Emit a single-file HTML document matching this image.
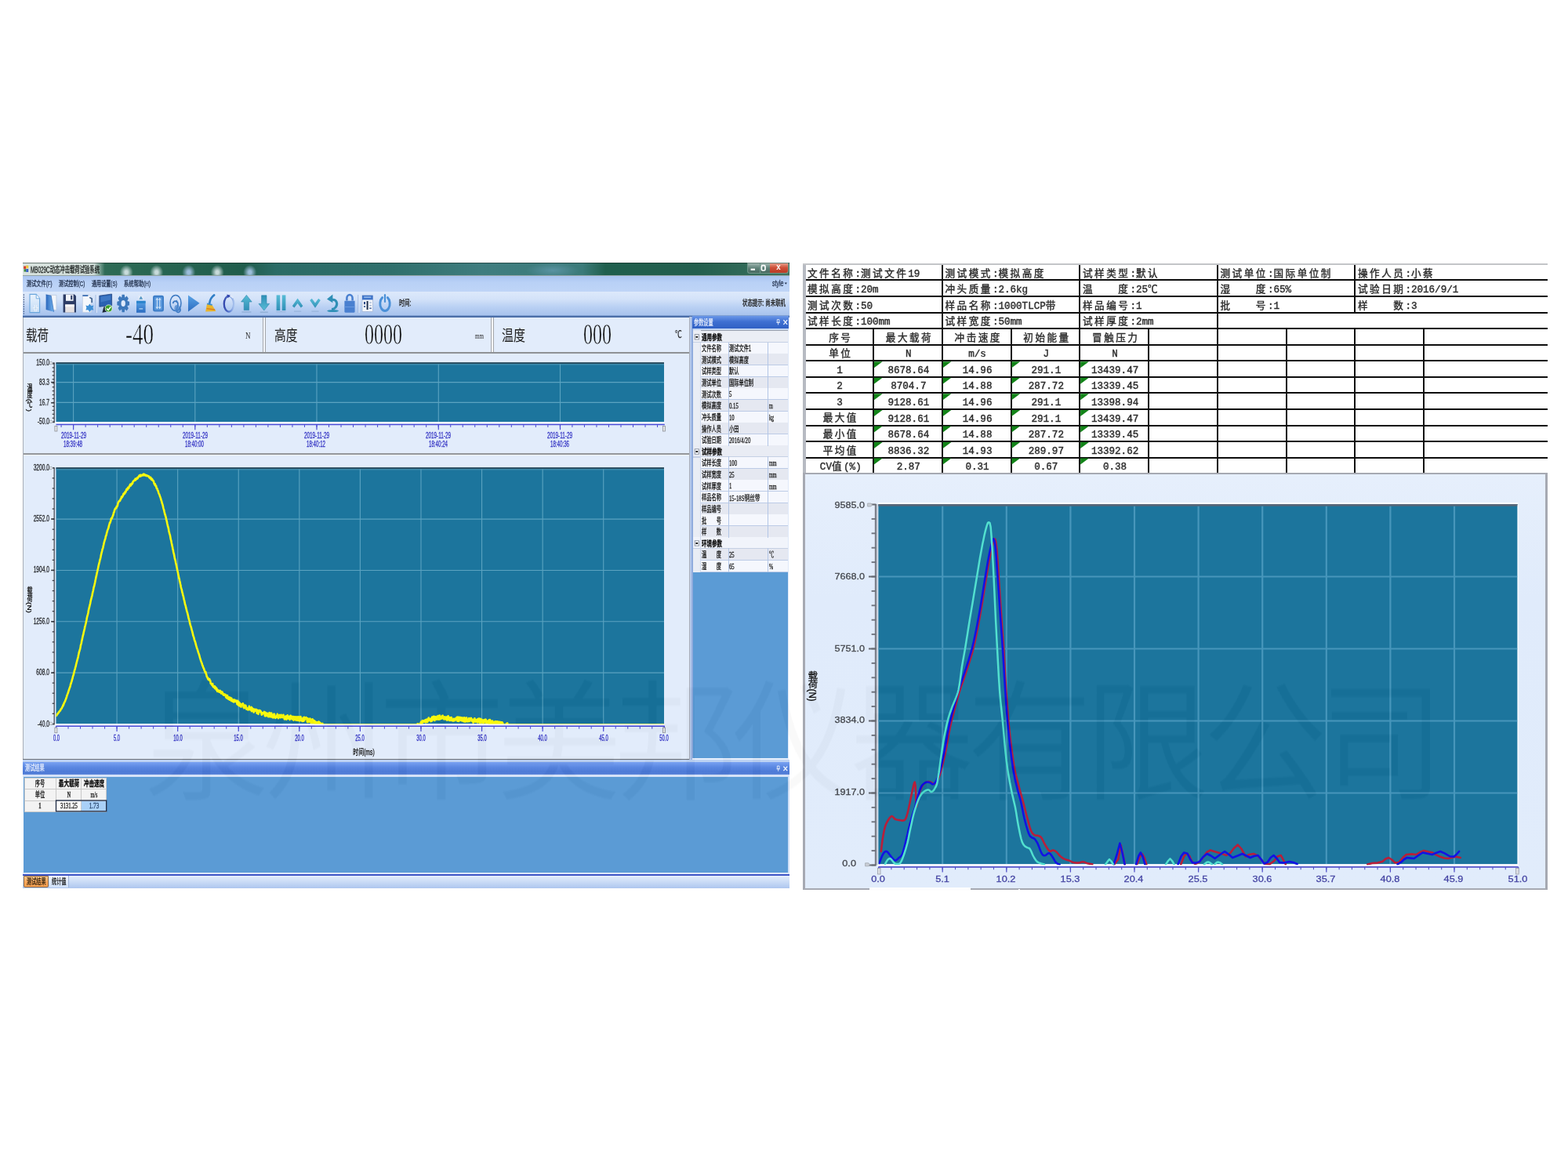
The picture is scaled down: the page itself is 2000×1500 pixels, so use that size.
<!DOCTYPE html>
<html lang="zh-CN">
<head>
<meta charset="utf-8">
<title>MB029C动态冲击载荷试验系统</title>
<style>
html,body{margin:0;padding:0;background:#fff;}
#stage{position:relative;width:2000px;height:1500px;overflow:hidden;background:#fff;}
#bg div{position:absolute;}
#gfx{position:absolute;left:0;top:0;}
.t{position:absolute;white-space:nowrap;line-height:1;}
#shots{position:absolute;left:0;top:0;width:2000px;height:1500px;filter:blur(0.6px);}
#wm{position:absolute;left:184.4px;top:865.2px;width:1800px;height:170px;line-height:170px;font-family:"Liberation Sans","Noto Sans CJK SC",sans-serif;font-weight:350;font-size:166px;transform:scaleX(.957);transform-origin:0 50%;color:rgb(6,6,6);mix-blend-mode:difference;filter:blur(.8px);white-space:nowrap;letter-spacing:-9.3px;text-align:left;pointer-events:none;}
</style>
</head>
<body>
<div id="stage">
<div id="shots">
<div id="bg">
<div style="left:29.2px;top:334.9px;width:977.8px;height:16.5px;background:linear-gradient(90deg,rgba(228,235,232,.93) 0,rgba(224,232,229,.9) 9.3%,rgba(220,230,226,0) 10.7%),radial-gradient(ellipse 8.5px 9.5px at 132.2px 12.4px,rgba(222,235,238,.88) 0,rgba(222,235,238,.88) 22%,rgba(222,235,238,0) 100%),radial-gradient(ellipse 8.5px 9.5px at 170.7px 12.4px,rgba(222,235,238,.88) 0,rgba(222,235,238,.88) 22%,rgba(222,235,238,0) 100%),radial-gradient(ellipse 8.5px 9.5px at 211.7px 12.4px,rgba(172,202,238,.88) 0,rgba(172,202,238,.88) 22%,rgba(172,202,238,0) 100%),radial-gradient(ellipse 8.5px 9.5px at 248.2px 12.4px,rgba(222,235,238,.88) 0,rgba(222,235,238,.88) 22%,rgba(222,235,238,0) 100%),radial-gradient(ellipse 8.5px 9.5px at 289.7px 12.4px,rgba(172,202,238,.88) 0,rgba(172,202,238,.88) 22%,rgba(172,202,238,0) 100%),radial-gradient(ellipse 34px 10px at 676px 10px,rgba(120,170,200,.5),rgba(120,170,200,0)),linear-gradient(90deg,#3f7562 0,#2c6a55 12%,#1f5c4b 29%,#2a6b66 33%,#2f6f6c 48%,#3f7d7f 60%,#3b7b7a 73%,#1f5f4d 76%,#235f4e 88%,#3c7260 100%);"></div>
<div style="left:29.2px;top:334.9px;width:977.8px;height:1.2px;background:rgba(20,40,35,.55);"></div>
<div style="left:952.6px;top:335.2px;width:53px;height:14px;background:rgba(190,210,205,.42);border-radius:0 0 3.5px 3.5px;"></div>
<div style="left:953.6px;top:335.6px;width:15.6px;height:12.6px;background:linear-gradient(#9cb3ad,#5e8178 50%,#47695f);border-radius:0 0 0 3px;"></div>
<div style="left:969.8px;top:335.6px;width:12px;height:12.6px;background:linear-gradient(#9cb3ad,#5e8178 50%,#47695f);"></div>
<div style="left:982.4px;top:335.6px;width:22.4px;height:12.6px;background:linear-gradient(#e59a86,#cf5139 45%,#b93a25);border-radius:0 0 3px 0;"></div>
<div style="left:29.2px;top:351.6px;width:977.8px;height:21px;background:linear-gradient(#a9c4f1,#b9d1f6 40%,#bfd5f7);"></div>
<div style="left:29.2px;top:351.2px;width:977.8px;height:1px;background:rgba(60,90,90,.55);"></div>
<div style="left:29.2px;top:372.4px;width:977.8px;height:31.4px;background:linear-gradient(#dde9fb 0,#d3e2f9 30%,#b9d0f3 62%,#a4c0ec 100%);"></div>
<div style="left:29.2px;top:403px;width:977.8px;height:2px;background:#4c6fa8;"></div>
<div style="left:29.2px;top:402.2px;width:977.8px;height:1px;background:#7f9fd2;"></div>
<div style="left:29.2px;top:405px;width:850.5px;height:45px;background:#e2ecfb;"></div>
<div style="left:334.9px;top:405px;width:1.2px;height:45px;background:#a4a6aa;"></div>
<div style="left:338px;top:405px;width:1.2px;height:45px;background:#a4a6aa;"></div>
<div style="left:625.6px;top:405px;width:1.2px;height:45px;background:#a4a6aa;"></div>
<div style="left:628.6px;top:405px;width:1.2px;height:45px;background:#a4a6aa;"></div>
<div style="left:336.1px;top:405px;width:2px;height:45px;background:#f4f7fc;"></div>
<div style="left:626.8px;top:405px;width:2px;height:45px;background:#f4f7fc;"></div>
<div style="left:29.2px;top:449.2px;width:850.5px;height:1.8px;background:#8f9296;"></div>
<div style="left:29.2px;top:451px;width:850.5px;height:127px;background:#e2ecfb;"></div>
<div style="left:29.2px;top:577.6px;width:850.5px;height:2.2px;background:#94979b;"></div>
<div style="left:29.2px;top:579.8px;width:850.5px;height:1.4px;background:#f3f6fb;"></div>
<div style="left:29.2px;top:581.2px;width:850.5px;height:386.6px;background:#e2ecfb;"></div>
<div style="left:29.2px;top:967.8px;width:850.5px;height:1.8px;background:#6d7076;"></div>
<div style="left:28.8px;top:405px;width:1.2px;height:563px;background:#a9aeb6;"></div>
<div style="left:882.6px;top:403.4px;width:123.8px;height:565px;background:#c3d6f3;"></div>
<div style="left:879.2px;top:403.5px;width:1.2px;height:565px;background:#a9aeb8;"></div>
<div style="left:880.4px;top:403.5px;width:4px;height:565px;background:linear-gradient(90deg,#c3d4f1,#9db6e3 60%,#7f9fd6);"></div>
<div style="left:882.6px;top:403.4px;width:123.8px;height:15.2px;background:linear-gradient(#6a97e8,#3f70d2 45%,#2f60c4);"></div>
<div style="left:884.4px;top:421.4px;width:120.6px;height:309px;background:#f5f8fd;"></div>
<div style="left:884.4px;top:421.2px;width:120.6px;height:1.3px;background:#9da3ad;"></div>
<div style="left:884.4px;top:730.2px;width:120.6px;height:236.4px;background:#5b9bd5;"></div>
<div style="left:884.4px;top:421.4px;width:9.2px;height:309px;background:#e9edf5;"></div>
<div style="left:884.4px;top:422.2px;width:120.6px;height:14.62px;background:#ebeef5;"></div>
<div style="left:884.4px;top:436.22px;width:120.6px;height:1.1px;background:#c5d0e4;"></div>
<div style="left:893.6px;top:436.82px;width:111.4px;height:14.62px;background:#f5f7fd;"></div>
<div style="left:893.6px;top:450.84px;width:111.4px;height:1.1px;background:#bccbe6;"></div>
<div style="left:893.6px;top:451.44px;width:111.4px;height:14.62px;background:#e5e8f1;"></div>
<div style="left:893.6px;top:465.46px;width:111.4px;height:1.1px;background:#bccbe6;"></div>
<div style="left:893.6px;top:466.06px;width:111.4px;height:14.62px;background:#f5f7fd;"></div>
<div style="left:893.6px;top:480.08px;width:111.4px;height:1.1px;background:#bccbe6;"></div>
<div style="left:893.6px;top:480.68px;width:111.4px;height:14.62px;background:#e5e8f1;"></div>
<div style="left:893.6px;top:494.7px;width:111.4px;height:1.1px;background:#bccbe6;"></div>
<div style="left:893.6px;top:495.3px;width:111.4px;height:14.62px;background:#f5f7fd;"></div>
<div style="left:893.6px;top:509.32px;width:111.4px;height:1.1px;background:#bccbe6;"></div>
<div style="left:893.6px;top:509.92px;width:111.4px;height:14.62px;background:#e5e8f1;"></div>
<div style="left:893.6px;top:523.94px;width:111.4px;height:1.1px;background:#bccbe6;"></div>
<div style="left:893.6px;top:524.54px;width:111.4px;height:14.62px;background:#f5f7fd;"></div>
<div style="left:893.6px;top:538.56px;width:111.4px;height:1.1px;background:#bccbe6;"></div>
<div style="left:893.6px;top:539.16px;width:111.4px;height:14.62px;background:#e5e8f1;"></div>
<div style="left:893.6px;top:553.18px;width:111.4px;height:1.1px;background:#bccbe6;"></div>
<div style="left:893.6px;top:553.78px;width:111.4px;height:14.62px;background:#f5f7fd;"></div>
<div style="left:893.6px;top:567.8px;width:111.4px;height:1.1px;background:#bccbe6;"></div>
<div style="left:884.4px;top:568.4px;width:120.6px;height:14.62px;background:#e9ecf4;"></div>
<div style="left:884.4px;top:582.42px;width:120.6px;height:1.1px;background:#c5d0e4;"></div>
<div style="left:893.6px;top:583.02px;width:111.4px;height:14.62px;background:#f5f7fd;"></div>
<div style="left:893.6px;top:597.04px;width:111.4px;height:1.1px;background:#bccbe6;"></div>
<div style="left:893.6px;top:597.64px;width:111.4px;height:14.62px;background:#e5e8f1;"></div>
<div style="left:893.6px;top:611.66px;width:111.4px;height:1.1px;background:#bccbe6;"></div>
<div style="left:893.6px;top:612.26px;width:111.4px;height:14.62px;background:#f5f7fd;"></div>
<div style="left:893.6px;top:626.28px;width:111.4px;height:1.1px;background:#bccbe6;"></div>
<div style="left:893.6px;top:626.88px;width:111.4px;height:14.62px;background:#f5f7fd;"></div>
<div style="left:893.6px;top:640.9px;width:111.4px;height:1.1px;background:#bccbe6;"></div>
<div style="left:893.6px;top:641.5px;width:111.4px;height:14.62px;background:#e5e8f1;"></div>
<div style="left:893.6px;top:655.52px;width:111.4px;height:1.1px;background:#bccbe6;"></div>
<div style="left:893.6px;top:656.12px;width:111.4px;height:14.62px;background:#f5f7fd;"></div>
<div style="left:893.6px;top:670.14px;width:111.4px;height:1.1px;background:#bccbe6;"></div>
<div style="left:893.6px;top:670.74px;width:111.4px;height:14.62px;background:#e5e8f1;"></div>
<div style="left:893.6px;top:684.76px;width:111.4px;height:1.1px;background:#bccbe6;"></div>
<div style="left:884.4px;top:685.36px;width:120.6px;height:14.62px;background:#f1f4fb;"></div>
<div style="left:884.4px;top:699.38px;width:120.6px;height:1.1px;background:#c5d0e4;"></div>
<div style="left:893.6px;top:699.98px;width:111.4px;height:14.62px;background:#e5e8f1;"></div>
<div style="left:893.6px;top:714px;width:111.4px;height:1.1px;background:#bccbe6;"></div>
<div style="left:893.6px;top:714.6px;width:111.4px;height:14.62px;background:#f5f7fd;"></div>
<div style="left:893.6px;top:728.62px;width:111.4px;height:1.1px;background:#bccbe6;"></div>
<div style="left:929px;top:436.8px;width:1px;height:293.4px;background:#b3c6e6;"></div>
<div style="left:979.2px;top:436.8px;width:1px;height:293.4px;background:#b3c6e6;"></div>
<div style="left:893.2px;top:436.8px;width:0.9px;height:293.4px;background:#cfd8ea;"></div>
<div style="left:894px;top:422.6px;width:111px;height:13.42px;background:#ebeef5;"></div>
<div style="left:894px;top:568.8px;width:111px;height:13.42px;background:#e9ecf4;"></div>
<div style="left:894px;top:685.76px;width:111px;height:13.42px;background:#f1f4fb;"></div>
<div style="left:1005px;top:421.4px;width:1.4px;height:547px;background:#dfe9fa;"></div>
<div style="left:882.6px;top:966.6px;width:123.8px;height:2px;background:#e5eefc;"></div>
<div style="left:29.2px;top:969px;width:977.8px;height:3.6px;background:#bdd2f3;"></div>
<div style="left:29.2px;top:972.4px;width:977.8px;height:15.6px;background:linear-gradient(#7aa2f2,#5b88e2 40%,#4d7ad6 80%,#5a84da);"></div>
<div style="left:29.2px;top:988px;width:977.8px;height:3.2px;background:#d5e2f8;"></div>
<div style="left:30px;top:991.2px;width:975.2px;height:122.4px;background:#5b9bd5;"></div>
<div style="left:1004.6px;top:991px;width:2.4px;height:123px;background:#cfdff7;"></div>
<div style="left:29.2px;top:1113.4px;width:977.8px;height:2px;background:#dbe6f9;"></div>
<div style="left:29.2px;top:1115px;width:977.8px;height:1.6px;background:#3f55c6;"></div>
<div style="left:29.2px;top:1116.6px;width:977.8px;height:16px;background:linear-gradient(#e4edfb,#c9dbf6 50%,#adc6ee);"></div>
<div style="left:31.2px;top:992px;width:104.5px;height:43.2px;background:#f3f3f3;"></div>
<div style="left:103.5px;top:1021px;width:32.2px;height:14.2px;background:#a9d0f7;"></div>
<div style="left:71.5px;top:1021px;width:32px;height:14.2px;background:#fafafa;"></div>
<div style="left:31.2px;top:991.5px;width:104.5px;height:1px;background:#c9c9c9;"></div>
<div style="left:31.2px;top:1006px;width:104.5px;height:1px;background:#c9c9c9;"></div>
<div style="left:31.2px;top:1020.5px;width:104.5px;height:1px;background:#c9c9c9;"></div>
<div style="left:31.2px;top:1034.7px;width:104.5px;height:1px;background:#c9c9c9;"></div>
<div style="left:30.7px;top:992px;width:1px;height:43.2px;background:#c9c9c9;"></div>
<div style="left:71px;top:992px;width:1px;height:43.2px;background:#c9c9c9;"></div>
<div style="left:103px;top:992px;width:1px;height:43.2px;background:#c9c9c9;"></div>
<div style="left:135.2px;top:992px;width:1px;height:43.2px;background:#c9c9c9;"></div>
<div style="left:30.2px;top:1116.8px;width:32.2px;height:15.4px;background:linear-gradient(#ffc98a,#f9a659 55%,#f6a04e);border:1px solid #8a6a4a;box-sizing:border-box;border-radius:0 0 2px 2px;"></div>
<div style="left:62.8px;top:1117px;width:24.8px;height:14.6px;background:linear-gradient(#f1f5fd,#cfe0f8);border-right:1px solid #9fb4d8;box-sizing:border-box;"></div>
<div style="left:1026.2px;top:336.8px;width:947.4px;height:267.475px;background:#fff;"></div>
<div style="left:1026.2px;top:356px;width:947.4px;height:1.8px;background:#0d0d0d;"></div>
<div style="left:1026.2px;top:377px;width:947.4px;height:1.8px;background:#0d0d0d;"></div>
<div style="left:1026.2px;top:398px;width:947.4px;height:1.8px;background:#0d0d0d;"></div>
<div style="left:1026.2px;top:418px;width:947.4px;height:1.8px;background:#0d0d0d;"></div>
<div style="left:1026.2px;top:439px;width:947.4px;height:1.8px;background:#0d0d0d;"></div>
<div style="left:1026.2px;top:459px;width:947.4px;height:1.8px;background:#0d0d0d;"></div>
<div style="left:1026.2px;top:480px;width:947.4px;height:1.8px;background:#0d0d0d;"></div>
<div style="left:1026.2px;top:500px;width:947.4px;height:1.8px;background:#0d0d0d;"></div>
<div style="left:1026.2px;top:521px;width:947.4px;height:1.8px;background:#0d0d0d;"></div>
<div style="left:1026.2px;top:542px;width:947.4px;height:1.8px;background:#0d0d0d;"></div>
<div style="left:1026.2px;top:562px;width:947.4px;height:1.8px;background:#0d0d0d;"></div>
<div style="left:1026.2px;top:583px;width:947.4px;height:1.8px;background:#0d0d0d;"></div>
<div style="left:1201px;top:337.4px;width:1.8px;height:82.3px;background:#0d0d0d;"></div>
<div style="left:1376px;top:337.4px;width:1.8px;height:82.3px;background:#0d0d0d;"></div>
<div style="left:1552px;top:337.4px;width:1.8px;height:82.3px;background:#0d0d0d;"></div>
<div style="left:1727px;top:337.4px;width:1.8px;height:61.725px;background:#0d0d0d;"></div>
<div style="left:1113px;top:419.1px;width:1.8px;height:185.175px;background:#0d0d0d;"></div>
<div style="left:1201px;top:419.1px;width:1.8px;height:185.175px;background:#0d0d0d;"></div>
<div style="left:1289px;top:419.1px;width:1.8px;height:185.175px;background:#0d0d0d;"></div>
<div style="left:1376px;top:419.1px;width:1.8px;height:185.175px;background:#0d0d0d;"></div>
<div style="left:1464px;top:419.1px;width:1.8px;height:185.175px;background:#0d0d0d;"></div>
<div style="left:1552px;top:419.1px;width:1.8px;height:185.175px;background:#0d0d0d;"></div>
<div style="left:1640px;top:419.1px;width:1.8px;height:185.175px;background:#0d0d0d;"></div>
<div style="left:1727px;top:419.1px;width:1.8px;height:185.175px;background:#0d0d0d;"></div>
<div style="left:1815px;top:419.1px;width:1.8px;height:185.175px;background:#0d0d0d;"></div>
<div style="left:1024.1px;top:335.8px;width:3.6px;height:268.475px;background:#b6bac2;"></div>
<div style="left:1024.4px;top:335.6px;width:949.2px;height:2.2px;background:#c3c5c8;"></div>
<div style="left:1024.1px;top:603.275px;width:949.8px;height:531.925px;background:#a6a9b2;"></div>
<div style="left:1027.4px;top:605.475px;width:943.8px;height:527.125px;background:linear-gradient(#e6effc,#e0ebfb 30%,#e1ecfb);"></div>
<div style="left:1109px;top:1132.4px;width:129px;height:3.2px;background:#fdfdfe;"></div>
<div style="left:1299.4px;top:1133.6px;width:1.6px;height:2px;background:#fdfdfe;"></div>
</div>
<svg id="gfx" width="2000" height="1500" viewBox="0 0 2000 1500">
<rect x="957.6" y="342.6" width="5.4" height="2.2" fill="#fff" />
<rect x="971.4" y="338.6" width="4.6" height="6.4" fill="none" stroke="#fff" stroke-width="1.7" rx="1.4"/>
<rect x="30.2" y="339.5" width="3" height="3.4" fill="#d43a2a" />
<rect x="33.2" y="338.6" width="3" height="3.6" fill="#f0c63a" />
<rect x="30.6" y="343.2" width="2.6" height="3.4" fill="#3c8a3a" />
<rect x="33.2" y="343" width="3" height="4" fill="#3a62c4" />
<path d="M1000.6 360.6h3.4l-1.7 2.2z" stroke="none" stroke-width="1" fill="#24334f" />
<defs>
<linearGradient id="gb" x1="0" y1="0" x2="0" y2="1"><stop offset="0" stop-color="#5aa3e6"/><stop offset="1" stop-color="#2b6cc0"/></linearGradient>
<linearGradient id="gt" x1="0" y1="0" x2="0" y2="1"><stop offset="0" stop-color="#58bcd6"/><stop offset="1" stop-color="#2f8fb6"/></linearGradient>
<linearGradient id="gl" x1="0" y1="0" x2="1" y2="0"><stop offset="0" stop-color="#2b67bd"/><stop offset="1" stop-color="#74b4ee"/></linearGradient>
<linearGradient id="gr" x1="0" y1="0" x2="1" y2="0"><stop offset="0" stop-color="#3347ad"/><stop offset=".55" stop-color="#5b7ed0"/><stop offset="1" stop-color="#a9c3ee"/></linearGradient>
<linearGradient id="gd" x1="0" y1="0" x2="0" y2="1"><stop offset="0" stop-color="#eaf3fd"/><stop offset="1" stop-color="#c3dbf5"/></linearGradient>
</defs>
<path d="M30.4 375.5v25" stroke="#35466c" stroke-width="1.3" stroke-dasharray="1.3 1.7"/>
<line x1="122.2" y1="376" x2="122.2" y2="399" stroke="#93add9" stroke-width="1" />
<line x1="123.2" y1="376" x2="123.2" y2="399" stroke="#e6effc" stroke-width="1" />
<line x1="457" y1="376" x2="457" y2="399" stroke="#93add9" stroke-width="1" />
<line x1="458" y1="376" x2="458" y2="399" stroke="#e6effc" stroke-width="1" />
<g transform="translate(44.2 387)"><path d="M-6.2 -11.6h8.2l4.4 5.4v17.8h-12.6z" fill="url(#gd)" stroke="#6aa6dc" stroke-width="1.1"/><path d="M2 -11.6v5.4h4.4" fill="#f4f9ff" stroke="#6aa6dc" stroke-width=".9"/><path d="M-2.4 6.2h7.2M1.2 2v8.2" stroke="#fff" stroke-width="2.3"/><path d="M-2.4 6.2h7.2M1.2 2v8.2" stroke="#a9c9ea" stroke-width=".7"/></g>
<g transform="translate(65.4 387)"><path d="M-1.5 -10.6h8v19h-8z" fill="#f3f6fb" stroke="#b8c6da" stroke-width=".7"/><path d="M-6.8 -11.2l6.6 1.4l3.4 20.6l-10 -2.8z" fill="url(#gl)"/><path d="M-6.8 -11.2l6.6 1.4l3.4 20.6" fill="none" stroke="#1f55a6" stroke-width=".6"/></g>
<g transform="translate(88.6 387)"><path d="M-8 -11.4h14.4l2 2v21h-16.4z" fill="#2c3c66"/><rect x="-4.6" y="-11.4" width="9.6" height="8.2" fill="#f2f5fb"/><rect x="1.6" y="-10.2" width="2" height="5.4" fill="#2c3c66"/><rect x="-5.4" y="1.4" width="11.6" height="10.2" fill="#e6e1e2"/><rect x="-5.4" y="1.4" width="11.6" height="3" fill="#f6f6f8"/></g>
<g transform="translate(112 387)"><path d="M-6.6 -10.8h8.6l2.2 2.6v19.4h-10.8z" fill="#f6f8fc" stroke="#c3cfdf" stroke-width=".7"/><rect x="-6.6" y="-10.8" width="7" height="1.8" fill="#3c6fb4"/><path d="M2.2 -7.6l3 1.6v5" stroke="#3d618f" stroke-width="1.6" fill="none"/><path d="M0.4 3.2l2 -2.8l2 2.8l3 -.6l-1 3l1 3l-3 -.4l-2 2.8l-2 -2.8l-3 .4l1 -3l-1 -3z" fill="#3f90d6"/></g>
<g transform="translate(135 387)"><path d="M-8.2 -9.8l15.8 -2.2v14.6l-15.8 1.6z" fill="#2a62b2"/><path d="M-6.6 -8.4l12.6 -1.8v5.6l-12.6 3z" fill="#4f8ad6" opacity=".55"/><path d="M-8.2 -9.8l15.8 -2.2v14.6l-15.8 1.6z" fill="none" stroke="#1d3e78" stroke-width=".7"/><path d="M-2.6 4.6l3.4 -.4l1 6.4l-6.4 1.2z" fill="#1b2638"/><circle cx="3.6" cy="6.4" r="4.9" fill="#eef6e8"/><circle cx="3.6" cy="6.4" r="4.1" fill="#3b9f2c"/><path d="M1.2 6.4l1.9 2.2l3.2 -4.4" stroke="#fff" stroke-width="1.5" fill="none"/></g>
<g transform="translate(157.2 387)"><path d="M7.84 -2.26L7.84 2.26L5.39 2.89L5.25 3.39L6.67 6.30L4.42 9.50L2.38 7.48L2.03 7.68L1.59 11.17L-1.59 11.17L-2.03 7.68L-2.38 7.48L-4.42 9.50L-6.67 6.30L-5.25 3.39L-5.39 2.89L-7.84 2.26L-7.84 -2.26L-5.39 -2.89L-5.25 -3.39L-6.67 -6.30L-4.42 -9.50L-2.38 -7.48L-2.03 -7.68L-1.59 -11.17L1.59 -11.17L2.03 -7.68L2.38 -7.48L4.42 -9.50L6.67 -6.30L5.25 -3.39L5.39 -2.89z" fill="#3d78bb"/><ellipse cx="0" cy="0" rx="2.7" ry="3.9" fill="#dfeafb"/></g>
<g transform="translate(179.8 387)"><path d="M-2.6 -5l2.6 -4.6l2.6 4.6z" fill="#6fa6cc"/><rect x="-3.4" y="-10.4" width="6.8" height="6" fill="#e9eef6" opacity=".55"/><path d="M-2.2 -5.6l2.2 -3.6l2.2 3.6z" fill="#4f94c4"/><rect x="-5.8" y="-3.2" width="11.6" height="15" fill="url(#gb)"/><rect x="-5.8" y="-3.2" width="11.6" height="3" fill="#2a84cc"/><rect x="-2.4" y="6.2" width="4.8" height="1.4" fill="#bfe0f8" opacity=".8"/></g>
<g transform="translate(202 387)"><rect x="-7" y="-10.2" width="14" height="20.6" rx="2.6" fill="#3f7fc8"/><rect x="-5" y="-8" width="10" height="16.4" rx="1.4" fill="#5a98dc"/><path d="M-3.4 -4.6l1.8 -2.6l1.8 2.6zM0 -4.6l1.8 -2.6l1.8 2.6zM-3.4 4.6l1.8 2.6l1.8 -2.6zM0 4.6l1.8 2.6l1.8 -2.6z" fill="#dcecfb"/><path d="M-1.6 -4.6v9.2M1.8 -4.6v9.2" stroke="#dcecfb" stroke-width="1"/></g>
<g transform="translate(224.6 387)"><ellipse cx="-.6" cy="-.6" rx="7" ry="10" fill="none" stroke="#3c79c2" stroke-width="1.5"/><path d="M4.6 5.4c2.4 4.4 -1.2 7.4 -3.6 5.2c-2.6 -2.4 2.6 -5.6 1.2 -10.8c-1 -3.6 -5.6 -3.6 -6.2 .4" fill="none" stroke="#3c79c2" stroke-width="1.7"/><path d="M-1.4 -2.2l3 -2.6l-.6 3.6z" fill="#3c79c2"/><ellipse cx="1.2" cy="6.4" rx="3.4" ry="4.4" fill="#4b86cc" opacity=".75"/></g>
<g transform="translate(247.2 387)"><path d="M-7.2 -10.6l14.6 10.4l-14.6 10.8z" fill="url(#gb)"/></g>
<g transform="translate(269.6 387)"><path d="M3.6 -10.6c-3.2 2.2 -5.4 6 -6 10.6" stroke="#2f7ec6" stroke-width="2.6" fill="none" stroke-linecap="round"/><path d="M-5.6 .6l6.4 1.2l5 8.2l-13.2 .6z" fill="#e9b52c"/><path d="M-6 6.6l10.6 1.4" stroke="#d67a20" stroke-width="1.4"/><path d="M-5.4 .4l6.4 1.4" stroke="#3a8ccf" stroke-width="1.8"/></g>
<g transform="translate(292 387)"><ellipse cx="0" cy=".6" rx="6.2" ry="10" fill="none" stroke="url(#gr)" stroke-width="2.3"/><path d="M-2.6 -11.4l5.2 1.4l-4.2 3.2z" fill="#3347ad"/><path d="M1.6 -10.2l4 3" stroke="#dfe9fa" stroke-width="2.4"/></g>
<g transform="translate(314.4 387)"><path d="M0 -10.6l6.8 8.6h-3.6v10.6h-6.4v-10.6h-3.6z" fill="url(#gt)" stroke="#2c86ac" stroke-width=".6"/><rect x="-6" y="10.4" width="12" height="1.2" fill="#7f9fc6" opacity=".7"/></g>
<g transform="translate(336.8 387)"><path d="M0 -10.6l6.8 8.6h-3.6v10.6h-6.4v-10.6h-3.6z" transform="scale(1 -1) translate(0 1.6)" fill="url(#gt)" stroke="#2c86ac" stroke-width=".6"/><rect x="-5" y="10.6" width="10" height="1.2" fill="#7f9fc6" opacity=".7"/></g>
<g transform="translate(358.4 387)"><rect x="-5.8" y="-10.6" width="4.6" height="19.6" fill="url(#gt)"/><rect x="1.4" y="-10.6" width="4.6" height="19.6" fill="url(#gt)"/><rect x="-6" y="10.2" width="12" height="1" fill="#7f9fc6" opacity=".5"/></g>
<g transform="translate(379.6 387)"><path d="M-6.8 3.2l6.8 -9.6l6.8 9.6l-2.6 2.2l-4.2 -5.4l-4.2 5.4z" fill="url(#gt)"/><rect x="-4.6" y="9.6" width="9.2" height="1" fill="#7f9fc6" opacity=".6"/></g>
<g transform="translate(402 387)"><path d="M-6.8 -4l6.8 9.8l6.8 -9.8l-2.6 -2.2l-4.2 5.6l-4.2 -5.6z" fill="url(#gt)"/><rect x="-4.6" y="9.6" width="9.2" height="1" fill="#7f9fc6" opacity=".6"/></g>
<g transform="translate(424.6 387)"><path d="M-1 -4.6c6 -.6 7.6 5.4 4.6 9.4c-1.2 1.6 -3 2.4 -5.2 2.6" fill="none" stroke="#2f8fb6" stroke-width="3"/><path d="M-7.6 -5.4l7.4 -6v10.6z" fill="#2f8fb6"/><ellipse cx="0" cy="9.6" rx="7.4" ry="1.5" fill="#2f8fb6"/></g>
<g transform="translate(446 387)"><path d="M-3.6 -3.4v-3.4a3.6 4.2 0 0 1 7.2 0v3.4" fill="none" stroke="#4a80d0" stroke-width="2.6"/><path d="M-6.6 -3.2h13.2v13.4q0 1.6 -1.6 1.6h-10q-1.6 0 -1.6 -1.6z" fill="#4a80d0"/><rect x="-6.6" y="4" width="13.2" height="1" fill="#6a9ae0"/></g>
<g transform="translate(468.8 387)"><rect x="-6.8" y="-10.2" width="13.6" height="20.6" fill="#f3f6fb" stroke="#9fb2d2" stroke-width=".7"/><rect x="-6.8" y="-10.2" width="13.6" height="5.6" fill="#3f74c8"/><rect x="-4.6" y="-8.6" width="9" height="1.4" fill="#9cc0f0"/><rect x="-1.2" y="-3" width="2" height="11" fill="#20304f"/><rect x="-4.8" y="-2" width="2" height="3.2" fill="#2a4a88"/><rect x="-4.8" y="3.2" width="2" height="1.6" fill="#2a4a88"/><rect x="2.4" y="-1.6" width="2.6" height="1.2" fill="#9ab0d0"/><rect x="2.4" y="2" width="2.6" height="1.2" fill="#9ab0d0"/><rect x="2.4" y="5.6" width="2.6" height="1.2" fill="#2a4a88"/></g>
<g transform="translate(491 387)"><path d="M-3.4 -7.4a6.2 9.2 0 1 0 6.8 0" fill="none" stroke="#4a90d8" stroke-width="2.9" stroke-linecap="round"/><path d="M0 -10.8v8.8" stroke="#4a90d8" stroke-width="2.2" stroke-linecap="round"/></g>
<rect x="71.5" y="462.4" width="775.5" height="75.8" fill="#1c759d" />
<rect x="71.5" y="462.4" width="775.5" height="1.4" fill="#1f2b36" />
<rect x="71.5" y="463.8" width="775.5" height="1.8" fill="#3d8aab" />
<line x1="71.5" y1="487.6" x2="847" y2="487.6" stroke="#5ba3c1" stroke-width="1.1" />
<line x1="71.5" y1="513.4" x2="847" y2="513.4" stroke="#5ba3c1" stroke-width="1.1" />
<line x1="93.6" y1="464.4" x2="93.6" y2="538.2" stroke="#5ba3c1" stroke-width="1.1" />
<line x1="248.8" y1="464.4" x2="248.8" y2="538.2" stroke="#5ba3c1" stroke-width="1.1" />
<line x1="404" y1="464.4" x2="404" y2="538.2" stroke="#5ba3c1" stroke-width="1.1" />
<line x1="559.3" y1="464.4" x2="559.3" y2="538.2" stroke="#5ba3c1" stroke-width="1.1" />
<line x1="714.5" y1="464.4" x2="714.5" y2="538.2" stroke="#5ba3c1" stroke-width="1.1" />
<rect x="70" y="538.2" width="777.5" height="2" fill="#fbfcff" />
<line x1="71.5" y1="541.6" x2="847.8" y2="541.6" stroke="#4b4bd6" stroke-width="1.5" />
<line x1="78.08" y1="541.6" x2="78.08" y2="545" stroke="#4b4bd6" stroke-width="1" />
<line x1="93.6" y1="541.6" x2="93.6" y2="545" stroke="#4b4bd6" stroke-width="1" />
<line x1="109.12" y1="541.6" x2="109.12" y2="545" stroke="#4b4bd6" stroke-width="1" />
<line x1="124.64" y1="541.6" x2="124.64" y2="545" stroke="#4b4bd6" stroke-width="1" />
<line x1="140.16" y1="541.6" x2="140.16" y2="545" stroke="#4b4bd6" stroke-width="1" />
<line x1="155.68" y1="541.6" x2="155.68" y2="545" stroke="#4b4bd6" stroke-width="1" />
<line x1="171.2" y1="541.6" x2="171.2" y2="545" stroke="#4b4bd6" stroke-width="1" />
<line x1="186.72" y1="541.6" x2="186.72" y2="545" stroke="#4b4bd6" stroke-width="1" />
<line x1="202.24" y1="541.6" x2="202.24" y2="545" stroke="#4b4bd6" stroke-width="1" />
<line x1="217.76" y1="541.6" x2="217.76" y2="545" stroke="#4b4bd6" stroke-width="1" />
<line x1="233.28" y1="541.6" x2="233.28" y2="545" stroke="#4b4bd6" stroke-width="1" />
<line x1="248.8" y1="541.6" x2="248.8" y2="545" stroke="#4b4bd6" stroke-width="1" />
<line x1="264.32" y1="541.6" x2="264.32" y2="545" stroke="#4b4bd6" stroke-width="1" />
<line x1="279.84" y1="541.6" x2="279.84" y2="545" stroke="#4b4bd6" stroke-width="1" />
<line x1="295.36" y1="541.6" x2="295.36" y2="545" stroke="#4b4bd6" stroke-width="1" />
<line x1="310.88" y1="541.6" x2="310.88" y2="545" stroke="#4b4bd6" stroke-width="1" />
<line x1="326.4" y1="541.6" x2="326.4" y2="545" stroke="#4b4bd6" stroke-width="1" />
<line x1="341.92" y1="541.6" x2="341.92" y2="545" stroke="#4b4bd6" stroke-width="1" />
<line x1="357.44" y1="541.6" x2="357.44" y2="545" stroke="#4b4bd6" stroke-width="1" />
<line x1="372.96" y1="541.6" x2="372.96" y2="545" stroke="#4b4bd6" stroke-width="1" />
<line x1="388.48" y1="541.6" x2="388.48" y2="545" stroke="#4b4bd6" stroke-width="1" />
<line x1="404" y1="541.6" x2="404" y2="545" stroke="#4b4bd6" stroke-width="1" />
<line x1="419.52" y1="541.6" x2="419.52" y2="545" stroke="#4b4bd6" stroke-width="1" />
<line x1="435.04" y1="541.6" x2="435.04" y2="545" stroke="#4b4bd6" stroke-width="1" />
<line x1="450.56" y1="541.6" x2="450.56" y2="545" stroke="#4b4bd6" stroke-width="1" />
<line x1="466.08" y1="541.6" x2="466.08" y2="545" stroke="#4b4bd6" stroke-width="1" />
<line x1="481.6" y1="541.6" x2="481.6" y2="545" stroke="#4b4bd6" stroke-width="1" />
<line x1="497.12" y1="541.6" x2="497.12" y2="545" stroke="#4b4bd6" stroke-width="1" />
<line x1="512.64" y1="541.6" x2="512.64" y2="545" stroke="#4b4bd6" stroke-width="1" />
<line x1="528.16" y1="541.6" x2="528.16" y2="545" stroke="#4b4bd6" stroke-width="1" />
<line x1="543.68" y1="541.6" x2="543.68" y2="545" stroke="#4b4bd6" stroke-width="1" />
<line x1="559.2" y1="541.6" x2="559.2" y2="545" stroke="#4b4bd6" stroke-width="1" />
<line x1="574.72" y1="541.6" x2="574.72" y2="545" stroke="#4b4bd6" stroke-width="1" />
<line x1="590.24" y1="541.6" x2="590.24" y2="545" stroke="#4b4bd6" stroke-width="1" />
<line x1="605.76" y1="541.6" x2="605.76" y2="545" stroke="#4b4bd6" stroke-width="1" />
<line x1="621.28" y1="541.6" x2="621.28" y2="545" stroke="#4b4bd6" stroke-width="1" />
<line x1="636.8" y1="541.6" x2="636.8" y2="545" stroke="#4b4bd6" stroke-width="1" />
<line x1="652.32" y1="541.6" x2="652.32" y2="545" stroke="#4b4bd6" stroke-width="1" />
<line x1="667.84" y1="541.6" x2="667.84" y2="545" stroke="#4b4bd6" stroke-width="1" />
<line x1="683.36" y1="541.6" x2="683.36" y2="545" stroke="#4b4bd6" stroke-width="1" />
<line x1="698.88" y1="541.6" x2="698.88" y2="545" stroke="#4b4bd6" stroke-width="1" />
<line x1="714.4" y1="541.6" x2="714.4" y2="545" stroke="#4b4bd6" stroke-width="1" />
<line x1="729.92" y1="541.6" x2="729.92" y2="545" stroke="#4b4bd6" stroke-width="1" />
<line x1="745.44" y1="541.6" x2="745.44" y2="545" stroke="#4b4bd6" stroke-width="1" />
<line x1="760.96" y1="541.6" x2="760.96" y2="545" stroke="#4b4bd6" stroke-width="1" />
<line x1="776.48" y1="541.6" x2="776.48" y2="545" stroke="#4b4bd6" stroke-width="1" />
<line x1="792" y1="541.6" x2="792" y2="545" stroke="#4b4bd6" stroke-width="1" />
<line x1="807.52" y1="541.6" x2="807.52" y2="545" stroke="#4b4bd6" stroke-width="1" />
<line x1="823.04" y1="541.6" x2="823.04" y2="545" stroke="#4b4bd6" stroke-width="1" />
<line x1="838.56" y1="541.6" x2="838.56" y2="545" stroke="#4b4bd6" stroke-width="1" />
<line x1="93.6" y1="541.6" x2="93.6" y2="548.2" stroke="#4b4bd6" stroke-width="1.2" />
<line x1="248.8" y1="541.6" x2="248.8" y2="548.2" stroke="#4b4bd6" stroke-width="1.2" />
<line x1="404" y1="541.6" x2="404" y2="548.2" stroke="#4b4bd6" stroke-width="1.2" />
<line x1="559.3" y1="541.6" x2="559.3" y2="548.2" stroke="#4b4bd6" stroke-width="1.2" />
<line x1="714.5" y1="541.6" x2="714.5" y2="548.2" stroke="#4b4bd6" stroke-width="1.2" />
<line x1="69.2" y1="462.4" x2="69.2" y2="539.2" stroke="#4a4d55" stroke-width="1.3" />
<line x1="66.7" y1="464" x2="69.2" y2="464" stroke="#3e4148" stroke-width="1.3" />
<line x1="66.7" y1="468.947" x2="69.2" y2="468.947" stroke="#3e4148" stroke-width="1.3" />
<line x1="66.7" y1="473.893" x2="69.2" y2="473.893" stroke="#3e4148" stroke-width="1.3" />
<line x1="66.7" y1="478.84" x2="69.2" y2="478.84" stroke="#3e4148" stroke-width="1.3" />
<line x1="66.7" y1="483.787" x2="69.2" y2="483.787" stroke="#3e4148" stroke-width="1.3" />
<line x1="66.7" y1="488.733" x2="69.2" y2="488.733" stroke="#3e4148" stroke-width="1.3" />
<line x1="66.7" y1="493.68" x2="69.2" y2="493.68" stroke="#3e4148" stroke-width="1.3" />
<line x1="66.7" y1="498.627" x2="69.2" y2="498.627" stroke="#3e4148" stroke-width="1.3" />
<line x1="66.7" y1="503.573" x2="69.2" y2="503.573" stroke="#3e4148" stroke-width="1.3" />
<line x1="66.7" y1="508.52" x2="69.2" y2="508.52" stroke="#3e4148" stroke-width="1.3" />
<line x1="66.7" y1="513.467" x2="69.2" y2="513.467" stroke="#3e4148" stroke-width="1.3" />
<line x1="66.7" y1="518.413" x2="69.2" y2="518.413" stroke="#3e4148" stroke-width="1.3" />
<line x1="66.7" y1="523.36" x2="69.2" y2="523.36" stroke="#3e4148" stroke-width="1.3" />
<line x1="66.7" y1="528.307" x2="69.2" y2="528.307" stroke="#3e4148" stroke-width="1.3" />
<line x1="66.7" y1="533.253" x2="69.2" y2="533.253" stroke="#3e4148" stroke-width="1.3" />
<line x1="66.7" y1="538.2" x2="69.2" y2="538.2" stroke="#3e4148" stroke-width="1.3" />
<line x1="65.1" y1="463.2" x2="69.2" y2="463.2" stroke="#34373e" stroke-width="1.5" />
<line x1="65.1" y1="487.6" x2="69.2" y2="487.6" stroke="#34373e" stroke-width="1.5" />
<line x1="65.1" y1="513.8" x2="69.2" y2="513.8" stroke="#34373e" stroke-width="1.5" />
<line x1="65.1" y1="538.4" x2="69.2" y2="538.4" stroke="#34373e" stroke-width="1.5" />
<path d="M63 461.4h3l1.6 1.6l-1.6 1.6h-3z" stroke="#9aa0a8" stroke-width="0.7" fill="#dfe4ea" />
<path d="M63 536.2h3l1.6 1.6l-1.6 1.6h-3z" stroke="#9aa0a8" stroke-width="0.7" fill="#dfe4ea" />
<rect x="69.9" y="543.4" width="3" height="6.6" fill="#e4e6e8" stroke="#8c9096" stroke-width=".8"/>
<rect x="845.4" y="543.4" width="3" height="6.6" fill="#e4e6e8" stroke="#8c9096" stroke-width=".8"/>
<rect x="71.5" y="596.4" width="775.5" height="326.8" fill="#1c759d" />
<rect x="71.5" y="596.4" width="775.5" height="1.4" fill="#1f2b36" />
<rect x="71.5" y="597.8" width="775.5" height="1.8" fill="#3d8aab" />
<line x1="71.5" y1="662.12" x2="847" y2="662.12" stroke="#5ba3c1" stroke-width="1.1" />
<line x1="71.5" y1="727.44" x2="847" y2="727.44" stroke="#5ba3c1" stroke-width="1.1" />
<line x1="71.5" y1="792.76" x2="847" y2="792.76" stroke="#5ba3c1" stroke-width="1.1" />
<line x1="71.5" y1="858.08" x2="847" y2="858.08" stroke="#5ba3c1" stroke-width="1.1" />
<line x1="149.08" y1="598.4" x2="149.08" y2="923.2" stroke="#5ba3c1" stroke-width="1.1" />
<line x1="226.66" y1="598.4" x2="226.66" y2="923.2" stroke="#5ba3c1" stroke-width="1.1" />
<line x1="304.24" y1="598.4" x2="304.24" y2="923.2" stroke="#5ba3c1" stroke-width="1.1" />
<line x1="381.82" y1="598.4" x2="381.82" y2="923.2" stroke="#5ba3c1" stroke-width="1.1" />
<line x1="459.4" y1="598.4" x2="459.4" y2="923.2" stroke="#5ba3c1" stroke-width="1.1" />
<line x1="536.98" y1="598.4" x2="536.98" y2="923.2" stroke="#5ba3c1" stroke-width="1.1" />
<line x1="614.56" y1="598.4" x2="614.56" y2="923.2" stroke="#5ba3c1" stroke-width="1.1" />
<line x1="692.14" y1="598.4" x2="692.14" y2="923.2" stroke="#5ba3c1" stroke-width="1.1" />
<line x1="769.72" y1="598.4" x2="769.72" y2="923.2" stroke="#5ba3c1" stroke-width="1.1" />
<rect x="70" y="923.2" width="777.5" height="2" fill="#fbfcff" />
<line x1="71.5" y1="926.3" x2="847.8" y2="926.3" stroke="#4b4bd6" stroke-width="1.5" />
<line x1="71.5" y1="926.3" x2="71.5" y2="929.7" stroke="#4b4bd6" stroke-width="1" />
<line x1="87.016" y1="926.3" x2="87.016" y2="929.7" stroke="#4b4bd6" stroke-width="1" />
<line x1="102.532" y1="926.3" x2="102.532" y2="929.7" stroke="#4b4bd6" stroke-width="1" />
<line x1="118.048" y1="926.3" x2="118.048" y2="929.7" stroke="#4b4bd6" stroke-width="1" />
<line x1="133.564" y1="926.3" x2="133.564" y2="929.7" stroke="#4b4bd6" stroke-width="1" />
<line x1="149.08" y1="926.3" x2="149.08" y2="929.7" stroke="#4b4bd6" stroke-width="1" />
<line x1="164.596" y1="926.3" x2="164.596" y2="929.7" stroke="#4b4bd6" stroke-width="1" />
<line x1="180.112" y1="926.3" x2="180.112" y2="929.7" stroke="#4b4bd6" stroke-width="1" />
<line x1="195.628" y1="926.3" x2="195.628" y2="929.7" stroke="#4b4bd6" stroke-width="1" />
<line x1="211.144" y1="926.3" x2="211.144" y2="929.7" stroke="#4b4bd6" stroke-width="1" />
<line x1="226.66" y1="926.3" x2="226.66" y2="929.7" stroke="#4b4bd6" stroke-width="1" />
<line x1="242.176" y1="926.3" x2="242.176" y2="929.7" stroke="#4b4bd6" stroke-width="1" />
<line x1="257.692" y1="926.3" x2="257.692" y2="929.7" stroke="#4b4bd6" stroke-width="1" />
<line x1="273.208" y1="926.3" x2="273.208" y2="929.7" stroke="#4b4bd6" stroke-width="1" />
<line x1="288.724" y1="926.3" x2="288.724" y2="929.7" stroke="#4b4bd6" stroke-width="1" />
<line x1="304.24" y1="926.3" x2="304.24" y2="929.7" stroke="#4b4bd6" stroke-width="1" />
<line x1="319.756" y1="926.3" x2="319.756" y2="929.7" stroke="#4b4bd6" stroke-width="1" />
<line x1="335.272" y1="926.3" x2="335.272" y2="929.7" stroke="#4b4bd6" stroke-width="1" />
<line x1="350.788" y1="926.3" x2="350.788" y2="929.7" stroke="#4b4bd6" stroke-width="1" />
<line x1="366.304" y1="926.3" x2="366.304" y2="929.7" stroke="#4b4bd6" stroke-width="1" />
<line x1="381.82" y1="926.3" x2="381.82" y2="929.7" stroke="#4b4bd6" stroke-width="1" />
<line x1="397.336" y1="926.3" x2="397.336" y2="929.7" stroke="#4b4bd6" stroke-width="1" />
<line x1="412.852" y1="926.3" x2="412.852" y2="929.7" stroke="#4b4bd6" stroke-width="1" />
<line x1="428.368" y1="926.3" x2="428.368" y2="929.7" stroke="#4b4bd6" stroke-width="1" />
<line x1="443.884" y1="926.3" x2="443.884" y2="929.7" stroke="#4b4bd6" stroke-width="1" />
<line x1="459.4" y1="926.3" x2="459.4" y2="929.7" stroke="#4b4bd6" stroke-width="1" />
<line x1="474.916" y1="926.3" x2="474.916" y2="929.7" stroke="#4b4bd6" stroke-width="1" />
<line x1="490.432" y1="926.3" x2="490.432" y2="929.7" stroke="#4b4bd6" stroke-width="1" />
<line x1="505.948" y1="926.3" x2="505.948" y2="929.7" stroke="#4b4bd6" stroke-width="1" />
<line x1="521.464" y1="926.3" x2="521.464" y2="929.7" stroke="#4b4bd6" stroke-width="1" />
<line x1="536.98" y1="926.3" x2="536.98" y2="929.7" stroke="#4b4bd6" stroke-width="1" />
<line x1="552.496" y1="926.3" x2="552.496" y2="929.7" stroke="#4b4bd6" stroke-width="1" />
<line x1="568.012" y1="926.3" x2="568.012" y2="929.7" stroke="#4b4bd6" stroke-width="1" />
<line x1="583.528" y1="926.3" x2="583.528" y2="929.7" stroke="#4b4bd6" stroke-width="1" />
<line x1="599.044" y1="926.3" x2="599.044" y2="929.7" stroke="#4b4bd6" stroke-width="1" />
<line x1="614.56" y1="926.3" x2="614.56" y2="929.7" stroke="#4b4bd6" stroke-width="1" />
<line x1="630.076" y1="926.3" x2="630.076" y2="929.7" stroke="#4b4bd6" stroke-width="1" />
<line x1="645.592" y1="926.3" x2="645.592" y2="929.7" stroke="#4b4bd6" stroke-width="1" />
<line x1="661.108" y1="926.3" x2="661.108" y2="929.7" stroke="#4b4bd6" stroke-width="1" />
<line x1="676.624" y1="926.3" x2="676.624" y2="929.7" stroke="#4b4bd6" stroke-width="1" />
<line x1="692.14" y1="926.3" x2="692.14" y2="929.7" stroke="#4b4bd6" stroke-width="1" />
<line x1="707.656" y1="926.3" x2="707.656" y2="929.7" stroke="#4b4bd6" stroke-width="1" />
<line x1="723.172" y1="926.3" x2="723.172" y2="929.7" stroke="#4b4bd6" stroke-width="1" />
<line x1="738.688" y1="926.3" x2="738.688" y2="929.7" stroke="#4b4bd6" stroke-width="1" />
<line x1="754.204" y1="926.3" x2="754.204" y2="929.7" stroke="#4b4bd6" stroke-width="1" />
<line x1="769.72" y1="926.3" x2="769.72" y2="929.7" stroke="#4b4bd6" stroke-width="1" />
<line x1="785.236" y1="926.3" x2="785.236" y2="929.7" stroke="#4b4bd6" stroke-width="1" />
<line x1="800.752" y1="926.3" x2="800.752" y2="929.7" stroke="#4b4bd6" stroke-width="1" />
<line x1="816.268" y1="926.3" x2="816.268" y2="929.7" stroke="#4b4bd6" stroke-width="1" />
<line x1="831.784" y1="926.3" x2="831.784" y2="929.7" stroke="#4b4bd6" stroke-width="1" />
<line x1="847.3" y1="926.3" x2="847.3" y2="929.7" stroke="#4b4bd6" stroke-width="1" />
<line x1="71.5" y1="926.3" x2="71.5" y2="932.9" stroke="#4b4bd6" stroke-width="1.2" />
<line x1="149.08" y1="926.3" x2="149.08" y2="932.9" stroke="#4b4bd6" stroke-width="1.2" />
<line x1="226.66" y1="926.3" x2="226.66" y2="932.9" stroke="#4b4bd6" stroke-width="1.2" />
<line x1="304.24" y1="926.3" x2="304.24" y2="932.9" stroke="#4b4bd6" stroke-width="1.2" />
<line x1="381.82" y1="926.3" x2="381.82" y2="932.9" stroke="#4b4bd6" stroke-width="1.2" />
<line x1="459.4" y1="926.3" x2="459.4" y2="932.9" stroke="#4b4bd6" stroke-width="1.2" />
<line x1="536.98" y1="926.3" x2="536.98" y2="932.9" stroke="#4b4bd6" stroke-width="1.2" />
<line x1="614.56" y1="926.3" x2="614.56" y2="932.9" stroke="#4b4bd6" stroke-width="1.2" />
<line x1="692.14" y1="926.3" x2="692.14" y2="932.9" stroke="#4b4bd6" stroke-width="1.2" />
<line x1="769.72" y1="926.3" x2="769.72" y2="932.9" stroke="#4b4bd6" stroke-width="1.2" />
<line x1="847.3" y1="926.3" x2="847.3" y2="932.9" stroke="#4b4bd6" stroke-width="1.2" />
<line x1="69.2" y1="596.4" x2="69.2" y2="924.2" stroke="#4a4d55" stroke-width="1.3" />
<line x1="66.7" y1="596.8" x2="69.2" y2="596.8" stroke="#3e4148" stroke-width="1.3" />
<line x1="66.7" y1="609.864" x2="69.2" y2="609.864" stroke="#3e4148" stroke-width="1.3" />
<line x1="66.7" y1="622.928" x2="69.2" y2="622.928" stroke="#3e4148" stroke-width="1.3" />
<line x1="66.7" y1="635.992" x2="69.2" y2="635.992" stroke="#3e4148" stroke-width="1.3" />
<line x1="66.7" y1="649.056" x2="69.2" y2="649.056" stroke="#3e4148" stroke-width="1.3" />
<line x1="66.7" y1="662.12" x2="69.2" y2="662.12" stroke="#3e4148" stroke-width="1.3" />
<line x1="66.7" y1="675.184" x2="69.2" y2="675.184" stroke="#3e4148" stroke-width="1.3" />
<line x1="66.7" y1="688.248" x2="69.2" y2="688.248" stroke="#3e4148" stroke-width="1.3" />
<line x1="66.7" y1="701.312" x2="69.2" y2="701.312" stroke="#3e4148" stroke-width="1.3" />
<line x1="66.7" y1="714.376" x2="69.2" y2="714.376" stroke="#3e4148" stroke-width="1.3" />
<line x1="66.7" y1="727.44" x2="69.2" y2="727.44" stroke="#3e4148" stroke-width="1.3" />
<line x1="66.7" y1="740.504" x2="69.2" y2="740.504" stroke="#3e4148" stroke-width="1.3" />
<line x1="66.7" y1="753.568" x2="69.2" y2="753.568" stroke="#3e4148" stroke-width="1.3" />
<line x1="66.7" y1="766.632" x2="69.2" y2="766.632" stroke="#3e4148" stroke-width="1.3" />
<line x1="66.7" y1="779.696" x2="69.2" y2="779.696" stroke="#3e4148" stroke-width="1.3" />
<line x1="66.7" y1="792.76" x2="69.2" y2="792.76" stroke="#3e4148" stroke-width="1.3" />
<line x1="66.7" y1="805.824" x2="69.2" y2="805.824" stroke="#3e4148" stroke-width="1.3" />
<line x1="66.7" y1="818.888" x2="69.2" y2="818.888" stroke="#3e4148" stroke-width="1.3" />
<line x1="66.7" y1="831.952" x2="69.2" y2="831.952" stroke="#3e4148" stroke-width="1.3" />
<line x1="66.7" y1="845.016" x2="69.2" y2="845.016" stroke="#3e4148" stroke-width="1.3" />
<line x1="66.7" y1="858.08" x2="69.2" y2="858.08" stroke="#3e4148" stroke-width="1.3" />
<line x1="66.7" y1="871.144" x2="69.2" y2="871.144" stroke="#3e4148" stroke-width="1.3" />
<line x1="66.7" y1="884.208" x2="69.2" y2="884.208" stroke="#3e4148" stroke-width="1.3" />
<line x1="66.7" y1="897.272" x2="69.2" y2="897.272" stroke="#3e4148" stroke-width="1.3" />
<line x1="66.7" y1="910.336" x2="69.2" y2="910.336" stroke="#3e4148" stroke-width="1.3" />
<line x1="66.7" y1="923.4" x2="69.2" y2="923.4" stroke="#3e4148" stroke-width="1.3" />
<line x1="65.1" y1="596.8" x2="69.2" y2="596.8" stroke="#34373e" stroke-width="1.5" />
<line x1="65.1" y1="662" x2="69.2" y2="662" stroke="#34373e" stroke-width="1.5" />
<line x1="65.1" y1="727.4" x2="69.2" y2="727.4" stroke="#34373e" stroke-width="1.5" />
<line x1="65.1" y1="792.8" x2="69.2" y2="792.8" stroke="#34373e" stroke-width="1.5" />
<line x1="65.1" y1="858.2" x2="69.2" y2="858.2" stroke="#34373e" stroke-width="1.5" />
<line x1="65.1" y1="923.6" x2="69.2" y2="923.6" stroke="#34373e" stroke-width="1.5" />
<path d="M63 595.4h3l1.6 1.6l-1.6 1.6h-3z" stroke="#9aa0a8" stroke-width="0.7" fill="#dfe4ea" />
<path d="M63 921.2h3l1.6 1.6l-1.6 1.6h-3z" stroke="#9aa0a8" stroke-width="0.7" fill="#dfe4ea" />
<rect x="69.9" y="928.1" width="3" height="6.6" fill="#e4e6e8" stroke="#8c9096" stroke-width=".8"/>
<rect x="845.4" y="928.1" width="3" height="6.6" fill="#e4e6e8" stroke="#8c9096" stroke-width=".8"/>
<clipPath id="lclip"><rect x="71.5" y="598" width="775.6" height="325.5"/></clipPath>
<path d="M71.5 913.0L71.7 912.5L72.0 912.7L72.4 911.6L72.8 911.7L73.2 911.0L73.7 910.1L74.1 910.0L74.6 908.8L75.1 908.6L75.6 907.6L76.1 906.9L76.6 906.6L77.0 906.4L77.4 904.9L77.9 904.3L78.3 904.0L78.7 903.6L79.1 902.4L79.6 901.5L80.0 901.3L80.4 899.4L80.8 899.5L81.3 898.0L81.7 896.9L82.1 896.0L82.5 895.3L82.9 894.8L83.4 893.0L83.8 892.4L84.2 891.3L84.6 889.9L85.0 888.9L85.4 887.2L85.9 886.0L86.3 884.9L86.7 884.2L87.1 882.7L87.5 881.3L87.9 880.3L88.3 878.9L88.8 877.4L89.2 876.6L89.6 875.1L90.0 873.3L90.4 872.3L90.8 870.8L91.2 869.8L91.7 868.2L92.1 866.2L92.5 865.5L92.9 863.1L93.3 861.9L93.8 860.7L94.2 858.5L94.6 857.3L95.0 855.2L95.4 854.3L95.8 852.8L96.2 851.0L96.7 849.7L97.1 847.4L97.5 846.2L97.9 844.5L98.3 842.8L98.8 841.0L99.2 839.7L99.6 838.1L100.0 835.9L100.4 834.4L100.8 832.0L101.2 831.0L101.7 829.2L102.1 827.8L102.5 825.9L102.9 823.5L103.3 821.8L103.8 820.3L104.2 817.8L104.6 816.4L105.0 814.3L105.4 812.4L105.8 810.4L106.2 809.4L106.7 806.8L107.1 805.1L107.5 803.4L107.9 802.0L108.3 799.3L108.8 797.8L109.2 796.1L109.6 794.6L110.0 792.6L110.4 790.8L110.8 788.2L111.2 786.5L111.7 784.6L112.1 783.3L112.5 781.5L112.9 778.8L113.3 777.0L113.8 775.2L114.2 773.4L114.6 771.8L115.0 770.1L115.4 767.9L115.8 765.8L116.2 764.4L116.7 762.5L117.1 760.9L117.5 759.5L117.9 757.3L118.3 755.3L118.8 753.5L119.2 751.6L119.6 749.0L120.0 748.1L120.5 746.0L120.9 744.2L121.3 742.3L121.7 740.0L122.1 738.2L122.5 736.1L122.9 734.7L123.4 732.2L123.8 730.3L124.2 728.6L124.6 726.7L125.0 725.1L125.4 723.0L125.8 721.1L126.2 719.5L126.6 717.8L127.0 716.3L127.5 714.0L127.9 712.9L128.4 710.7L128.8 708.4L129.2 706.6L129.6 704.9L130.1 703.1L130.5 701.0L131.0 699.9L131.4 698.5L131.8 696.3L132.2 694.8L132.6 692.8L133.0 691.2L133.4 689.9L133.8 688.3L134.3 687.4L134.7 685.1L135.1 683.4L135.5 683.0L135.9 681.1L136.3 679.2L136.7 678.3L137.1 676.3L137.5 675.5L137.9 674.6L138.3 673.6L138.7 671.9L139.2 669.5L139.6 668.4L140.0 666.7L140.4 667.0L140.8 665.3L141.2 664.8L141.6 662.5L142.0 661.1L142.5 661.5L142.9 660.9L143.3 659.5L143.7 658.3L144.2 657.3L144.6 656.1L145.0 653.8L145.4 653.6L145.8 652.2L146.2 650.4L146.7 649.4L147.1 649.1L147.5 648.1L147.9 648.3L148.3 648.1L148.8 645.9L149.2 646.3L149.6 645.6L150.0 644.6L150.4 642.3L150.8 641.2L151.2 640.4L151.7 639.5L152.1 638.8L152.5 639.1L152.9 639.0L153.3 638.2L153.8 636.5L154.2 636.3L154.6 635.9L155.0 633.5L155.4 634.2L155.8 634.2L156.2 633.2L156.7 632.5L157.1 631.2L157.5 629.8L157.9 630.7L158.3 629.0L158.8 629.5L159.2 629.4L159.6 627.3L160.0 626.8L160.4 627.5L160.8 626.4L161.2 624.5L161.7 623.8L162.1 623.3L162.5 624.7L162.9 623.9L163.3 621.7L163.8 622.9L164.2 622.7L164.6 621.4L165.0 620.1L165.4 620.1L165.8 618.5L166.3 617.7L166.7 619.6L167.1 618.2L167.6 617.4L168.0 617.9L168.4 616.2L168.8 616.8L169.2 616.2L169.6 614.2L170.0 613.9L170.5 613.4L171.0 612.8L171.4 613.2L171.9 611.9L172.3 611.9L172.7 610.7L173.2 612.3L173.6 610.5L174.0 610.4L174.4 610.3L174.9 610.7L175.3 609.2L175.7 610.1L176.1 608.7L176.5 608.5L177.0 608.2L177.5 606.6L177.9 607.4L178.3 606.6L178.7 605.9L179.1 607.7L179.6 605.9L180.0 606.5L180.5 606.9L180.9 606.3L181.4 605.6L181.8 605.9L182.3 605.9L182.7 606.4L183.2 604.7L183.6 605.8L184.0 605.0L184.5 605.1L184.9 606.4L185.4 605.8L185.8 606.0L186.2 606.6L186.7 607.1L187.1 606.1L187.5 606.7L187.9 606.6L188.3 606.8L188.8 607.5L189.2 607.1L189.6 607.5L190.0 607.7L190.4 609.1L190.8 608.8L191.2 609.6L191.6 610.1L192.0 608.8L192.5 610.0L192.9 611.5L193.4 611.9L193.8 610.7L194.2 611.3L194.7 612.8L195.1 612.5L195.6 613.6L196.0 613.9L196.4 616.2L196.9 617.2L197.3 618.2L197.8 617.2L198.2 619.4L198.7 620.1L199.1 619.7L199.6 622.5L200.0 623.0L200.4 623.2L200.9 625.1L201.4 625.6L201.8 626.9L202.3 628.6L202.7 629.7L203.1 630.2L203.6 631.7L204.0 633.0L204.5 634.2L204.9 635.4L205.3 636.9L205.8 638.7L206.2 639.4L206.6 641.5L207.1 642.8L207.5 644.0L207.9 645.8L208.3 647.6L208.7 649.1L209.1 650.2L209.6 652.8L210.0 654.3L210.4 656.1L210.8 656.9L211.2 658.7L211.7 660.2L212.1 662.7L212.5 663.9L212.9 665.5L213.3 667.7L213.8 670.0L214.2 671.7L214.6 672.9L215.0 674.6L215.4 677.3L215.8 678.8L216.2 680.8L216.7 682.0L217.1 683.8L217.5 686.4L217.9 688.1L218.3 689.6L218.8 692.5L219.2 694.1L219.6 696.3L220.0 697.5L220.4 700.4L220.8 701.5L221.2 704.4L221.7 706.0L222.1 707.8L222.5 710.1L222.9 712.4L223.3 713.7L223.8 715.5L224.2 717.8L224.6 719.5L225.0 721.3L225.4 723.2L225.8 725.1L226.2 727.2L226.7 729.2L227.1 731.2L227.5 733.7L227.9 735.2L228.3 737.4L228.8 739.0L229.2 741.1L229.6 742.6L230.0 744.7L230.4 746.3L230.8 748.8L231.2 750.4L231.7 751.7L232.1 753.7L232.5 755.9L232.9 756.7L233.3 759.1L233.8 760.4L234.2 762.2L234.6 764.3L235.0 765.6L235.4 767.4L235.8 769.4L236.2 771.4L236.7 772.4L237.1 774.7L237.5 776.2L237.9 777.8L238.3 779.3L238.8 780.9L239.2 782.3L239.6 784.0L240.0 785.6L240.4 788.0L240.8 789.1L241.2 790.6L241.7 792.1L242.1 794.6L242.5 796.2L242.9 797.5L243.3 798.6L243.8 800.1L244.2 801.7L244.6 803.4L245.0 804.6L245.4 806.5L245.8 807.8L246.2 810.1L246.7 811.6L247.1 812.6L247.5 813.8L247.9 816.1L248.3 816.8L248.8 818.3L249.2 819.4L249.6 821.2L250.0 822.7L250.4 824.2L250.8 825.2L251.2 826.9L251.7 827.8L252.1 829.4L252.5 830.5L252.9 832.2L253.3 833.1L253.8 834.4L254.2 836.0L254.6 837.2L255.0 838.9L255.4 840.1L255.8 841.5L256.2 842.7L256.7 843.9L257.1 845.3L257.5 845.9L257.8 847.0L258.2 848.9L258.7 849.1L259.1 850.9L259.5 852.0L260.0 852.5L260.4 854.3L260.8 855.3L261.2 855.9L261.6 857.0L262.0 858.0L262.4 857.2L262.9 859.7L263.3 860.5L263.7 862.8L264.2 863.5L264.6 864.5L265.0 864.3L265.4 866.4L265.8 866.3L266.2 867.1L266.6 866.0L267.1 866.0L267.5 867.1L267.9 868.7L268.3 868.4L268.7 871.9L269.1 871.5L269.6 872.4L270.0 873.0L270.4 873.8L270.8 873.5L271.2 872.1L271.7 875.8L272.1 876.1L272.5 875.6L272.9 876.1L273.4 877.1L273.8 875.2L274.2 878.3L274.7 876.8L275.1 876.5L275.6 877.7L276.0 879.9L276.4 878.1L276.8 880.6L277.2 881.9L277.6 880.3L278.0 880.1L278.4 880.8L278.9 882.0L279.3 882.6L279.7 882.3L280.2 882.8L280.6 880.8L281.1 881.4L281.5 882.2L282.0 884.5L282.4 883.0L282.8 884.4L283.2 882.4L283.6 882.9L284.1 884.0L284.5 886.0L284.9 886.3L285.3 886.6L285.8 885.3L286.2 886.6L286.7 886.7L287.1 887.0L287.6 885.9L288.1 889.3L288.5 886.8L289.0 890.3L289.5 890.4L290.0 887.1L290.4 889.1L290.8 890.8L291.2 891.6L291.6 889.8L292.0 889.3L292.4 889.4L292.8 892.6L293.3 889.9L293.7 891.6L294.1 890.1L294.5 891.9L295.0 893.9L295.4 890.9L295.8 893.9L296.3 892.9L296.7 894.7L297.2 894.2L297.7 892.6L298.1 895.5L298.6 894.2L299.1 892.6L299.5 892.8L300.0 895.0L300.4 894.9L300.8 894.3L301.2 893.6L301.7 895.0L302.1 895.1L302.5 898.3L302.9 893.7L303.4 898.3L303.8 899.0L304.3 895.1L304.7 900.0L305.1 898.9L305.6 900.3L306.0 896.9L306.5 897.6L306.9 898.0L307.4 901.7L307.9 899.6L308.3 898.5L308.8 899.1L309.2 898.4L309.7 897.3L310.1 897.8L310.6 902.3L311.1 899.3L311.5 903.3L312.0 899.5L312.4 899.8L312.9 901.4L313.3 899.8L313.8 901.0L314.2 904.6L314.6 904.4L315.1 904.1L315.5 903.3L316.0 905.1L316.4 905.4L316.9 903.4L317.4 904.5L317.8 900.8L318.3 905.0L318.7 903.5L319.2 905.4L319.6 905.0L320.1 903.1L320.6 901.9L321.0 907.2L321.5 902.7L321.9 904.9L322.4 904.3L322.8 904.2L323.2 906.9L323.7 908.5L324.1 904.5L324.6 906.9L325.0 905.0L325.5 906.7L325.9 905.9L326.4 904.8L326.8 904.9L327.3 905.4L327.7 909.6L328.2 907.4L328.6 905.9L329.0 910.1L329.5 910.8L329.9 907.8L330.3 906.1L330.8 906.6L331.2 906.2L331.7 907.8L332.1 906.5L332.5 907.5L333.0 907.8L333.4 909.7L333.8 911.7L334.3 911.0L334.7 909.2L335.2 909.4L335.6 910.1L336.1 909.4L336.5 909.3L337.0 907.9L337.4 909.2L337.9 913.3L338.3 908.6L338.7 910.9L339.2 911.7L339.6 913.2L340.0 909.5L340.5 909.9L340.9 909.9L341.3 910.9L341.8 911.2L342.2 914.3L342.6 913.7L343.1 914.0L343.5 909.1L344.0 909.3L344.4 913.3L344.9 914.4L345.3 912.1L345.8 912.8L346.2 909.5L346.7 911.8L347.2 915.0L347.6 914.5L348.1 914.7L348.6 915.5L349.0 911.4L349.5 910.7L350.0 911.0L350.4 913.2L350.8 914.2L351.3 915.8L351.7 914.6L352.1 914.2L352.5 914.9L353.0 913.2L353.4 913.8L353.8 910.9L354.3 915.3L354.7 912.2L355.1 916.2L355.6 914.7L356.0 912.8L356.5 911.8L356.9 912.6L357.4 914.9L357.8 915.3L358.3 911.9L358.7 911.8L359.2 914.4L359.6 914.8L360.1 913.8L360.5 912.9L361.0 915.1L361.4 911.7L361.9 913.5L362.3 914.5L362.8 917.4L363.2 915.6L363.7 917.1L364.1 914.8L364.6 913.4L365.0 913.5L365.4 917.7L365.9 916.3L366.3 914.0L366.8 912.4L367.3 915.2L367.7 916.3L368.2 914.9L368.6 914.0L369.1 916.4L369.6 917.9L370.0 913.9L370.5 912.8L371.0 914.6L371.4 915.2L371.9 916.7L372.4 913.9L372.8 917.5L373.3 917.2L373.7 915.8L374.2 914.1L374.6 918.6L375.1 914.8L375.5 917.8L376.0 914.4L376.4 914.4L376.8 917.6L377.2 914.9L377.7 918.8L378.1 916.2L378.5 914.4L378.9 914.7L379.2 915.8L379.6 917.3L380.0 919.0L380.5 914.4L381.1 915.9L381.6 914.9L382.1 919.4L382.5 914.6L383.0 914.1L383.5 914.2L383.9 916.2L384.4 919.2L384.8 919.2L385.2 918.4L385.6 920.0L386.1 919.6L386.5 916.2L386.9 915.4L387.3 919.8L387.7 918.8L388.1 914.7L388.4 918.5L388.8 916.9L389.2 916.9L389.6 916.7L390.0 915.9L390.5 915.0L391.0 916.7L391.5 917.3L391.9 920.9L392.4 916.2L392.8 921.2L393.3 916.9L393.7 917.9L394.2 920.7L394.6 920.8L395.0 918.7L395.4 916.6L395.9 919.2L396.3 918.7L396.7 922.0L397.1 918.0L397.6 919.1L398.0 922.3L398.5 917.4L398.9 919.8L399.3 922.2L399.8 922.1L400.2 918.9L400.6 919.0L401.1 919.3L401.5 922.9L401.9 920.4L402.4 922.5L402.8 923.3L403.2 921.2L403.7 921.0L404.2 923.9L404.6 922.7L405.1 921.4L405.6 923.3L406.0 921.7L406.2 921.6L406.4 920.6L406.6 923.7L406.7 924.4L406.8 923.3L406.9 924.4L407.0 920.9L407.1 921.8L407.3 922.8L407.4 924.4L407.7 924.4L408.0 922.5L408.4 922.0L408.9 922.7L409.6 924.1L410.3 924.4L411.2 922.9L412.3 924.3L413.6 924.3L415.0 924.3L415.3 924.3L415.5 924.3L415.8 924.2L416.1 924.2L416.4 924.2L416.7 924.3L417.0 924.2L417.3 924.2L417.6 924.3L417.9 924.2L418.2 924.2L418.5 924.2L418.9 924.3L419.2 924.2L419.5 924.4L419.9 924.4L420.2 924.4L420.6 924.2L420.9 924.2L421.3 924.2L421.7 924.3L422.0 924.4L422.4 924.3L422.8 924.2L423.2 924.3L423.5 924.3L423.9 924.4L424.3 924.4L424.7 924.4L425.1 924.4L425.5 924.2L425.9 924.4L426.3 924.3L426.8 924.3L427.2 924.3L427.6 924.4L428.0 924.3L428.5 924.3L428.9 924.3L429.3 924.2L429.8 924.4L430.2 924.4L430.7 924.3L431.1 924.3L431.6 924.4L432.0 924.3L432.5 924.3L432.9 924.4L433.4 924.4L433.8 924.4L434.3 924.2L434.8 924.3L435.3 924.4L435.7 924.4L436.2 924.4L436.7 924.2L437.2 924.3L437.6 924.3L438.1 924.3L438.6 924.4L439.1 924.4L439.6 924.4L440.1 924.3L440.6 924.4L441.1 924.3L441.6 924.3L442.0 924.4L442.5 924.4L443.0 924.3L443.5 924.4L444.0 924.4L444.5 924.3L445.0 924.3L445.6 924.3L446.1 924.3L446.6 924.3L447.1 924.4L447.6 924.4L448.1 924.3L448.6 924.2L449.1 924.3L449.6 924.4L450.1 924.3L450.6 924.3L451.1 924.3L451.6 924.4L452.2 924.4L452.7 924.2L453.2 924.3L453.7 924.3L454.2 924.4L454.7 924.4L455.2 924.2L455.7 924.3L456.2 924.4L456.7 924.3L457.2 924.3L457.7 924.3L458.3 924.4L458.8 924.3L459.3 924.4L459.8 924.3L460.3 924.3L460.8 924.4L461.3 924.4L461.8 924.3L462.3 924.3L462.8 924.4L463.3 924.3L463.7 924.2L464.2 924.4L464.7 924.3L465.2 924.4L465.7 924.3L466.2 924.4L466.7 924.3L467.2 924.3L467.6 924.2L468.1 924.4L468.6 924.4L469.1 924.4L469.5 924.3L470.0 924.4L470.4 924.3L470.9 924.4L471.3 924.3L471.7 924.3L472.2 924.4L472.6 924.4L473.1 924.3L473.5 924.4L474.0 924.4L474.4 924.4L474.9 924.3L475.4 924.3L475.8 924.4L476.3 924.4L476.8 924.4L477.2 924.3L477.7 924.4L478.2 924.3L478.7 924.4L479.2 924.4L479.6 924.4L480.1 924.3L480.6 924.4L481.1 924.3L481.6 924.4L482.1 924.4L482.6 924.4L483.1 924.3L483.6 924.3L484.1 924.4L484.6 924.4L485.1 924.4L485.6 924.3L486.1 924.4L486.6 924.4L487.1 924.4L487.6 924.3L488.1 924.4L488.6 924.4L489.1 924.3L489.6 924.4L490.1 924.4L490.6 924.4L491.1 924.4L491.7 924.4L492.2 924.4L492.7 924.4L493.2 924.4L493.7 924.4L494.2 924.4L494.7 924.4L495.2 924.4L495.7 924.4L496.2 924.4L496.8 924.4L497.3 924.4L497.8 924.4L498.3 924.4L498.8 924.4L499.3 924.4L499.8 924.4L500.3 924.4L500.8 924.4L501.3 924.4L501.8 924.4L502.3 924.4L502.8 924.4L503.3 924.4L503.8 924.4L504.3 924.4L504.8 924.4L505.3 924.4L505.8 924.4L506.3 924.4L506.8 924.4L507.2 924.4L507.7 924.4L508.2 924.4L508.7 924.4L509.2 924.4L509.6 924.4L510.1 924.4L510.6 924.4L511.1 924.4L511.5 924.4L512.0 924.4L512.5 924.4L512.9 924.4L513.4 924.4L513.8 924.4L514.3 924.4L514.7 924.4L515.2 924.4L515.6 924.4L516.0 924.4L516.5 924.4L516.9 924.4L517.3 924.4L517.8 924.4L518.2 924.4L518.6 924.4L519.0 924.4L519.4 924.4L519.8 924.4L520.2 924.4L520.6 924.4L521.0 924.4L521.4 924.4L521.8 924.4L522.2 924.4L522.6 924.4L523.0 924.4L523.3 924.4L523.7 924.4L524.1 924.4L524.4 924.4L524.8 924.4L525.1 924.4L525.5 924.4L525.8 924.4L526.1 924.4L526.5 924.4L526.8 924.4L527.1 924.4L527.4 924.4L527.7 924.4L528.0 924.4L528.3 924.4L528.6 924.4L528.9 924.4L529.2 924.4L529.5 924.3L529.7 924.4L530.0 924.2L531.4 924.4L532.7 923.2L533.8 923.6L534.7 924.4L535.5 923.2L536.2 923.4L536.7 921.9L537.2 920.5L537.5 920.5L537.8 920.9L538.0 922.6L538.2 921.8L538.3 922.0L538.4 923.4L538.5 920.2L538.6 920.4L538.6 922.0L538.8 919.3L538.9 919.1L539.1 920.4L539.3 919.3L539.6 920.2L540.0 919.5L540.4 920.8L540.9 920.7L541.3 919.0L541.7 920.6L542.1 919.8L542.5 918.3L543.0 921.4L543.4 918.5L543.8 917.9L544.2 917.6L544.6 919.6L545.1 921.0L545.5 920.4L545.9 918.0L546.3 917.1L546.8 915.5L547.2 919.0L547.7 918.4L548.1 917.0L548.6 918.6L549.0 917.3L549.5 920.1L550.0 918.8L550.4 915.8L550.8 919.6L551.2 914.5L551.6 917.2L552.0 916.4L552.4 915.3L552.8 914.2L553.2 918.3L553.6 913.7L554.0 916.7L554.5 918.9L554.9 914.2L555.3 914.4L555.7 916.7L556.2 916.1L556.6 916.8L557.0 917.7L557.5 913.9L557.9 914.6L558.4 914.5L558.9 913.0L559.4 917.8L559.8 917.2L560.3 916.7L560.8 912.6L561.3 917.4L561.9 916.8L562.4 915.2L562.8 916.8L563.2 915.1L563.5 913.8L563.9 913.1L564.3 913.9L564.7 912.8L565.1 914.5L565.5 916.9L566.0 916.6L566.4 917.5L566.8 916.8L567.2 914.3L567.6 916.0L568.1 915.3L568.5 917.4L569.0 915.9L569.4 914.5L569.8 916.7L570.3 918.6L570.7 914.3L571.2 918.2L571.6 913.3L572.1 914.7L572.5 914.7L573.0 917.7L573.5 918.9L573.9 917.8L574.4 915.4L574.8 918.7L575.3 915.5L575.8 915.1L576.2 919.0L576.7 917.4L577.2 917.8L577.6 917.7L578.1 919.6L578.6 916.7L579.1 918.9L579.5 918.1L580.0 919.1L580.4 916.7L580.8 918.4L581.3 917.5L581.7 916.0L582.1 915.5L582.5 917.9L583.0 914.8L583.4 919.7L583.8 915.3L584.3 914.6L584.7 915.1L585.2 919.9L585.6 916.6L586.0 915.4L586.5 914.8L586.9 914.9L587.4 918.7L587.8 918.4L588.3 918.8L588.7 919.1L589.2 915.2L589.6 918.3L590.1 917.0L590.5 919.7L591.0 919.7L591.4 920.2L591.9 915.4L592.3 920.1L592.8 920.4L593.2 920.6L593.7 915.8L594.2 916.4L594.6 915.9L595.1 915.5L595.5 920.3L596.0 920.1L596.4 919.1L596.9 920.2L597.3 919.1L597.8 917.2L598.2 916.1L598.7 916.2L599.1 920.0L599.6 916.9L600.0 917.6L600.4 918.2L600.9 915.9L601.3 917.3L601.8 917.5L602.2 920.0L602.7 918.0L603.2 917.8L603.6 921.6L604.1 918.9L604.5 921.0L605.0 919.7L605.4 916.3L605.9 918.6L606.4 918.7L606.8 920.7L607.3 918.3L607.7 920.4L608.2 919.5L608.7 917.6L609.1 921.4L609.6 917.0L610.0 921.2L610.5 917.5L610.9 916.5L611.4 917.7L611.8 921.0L612.3 922.3L612.7 916.7L613.2 919.6L613.6 919.6L614.1 921.4L614.5 917.9L615.0 919.7L615.4 918.9L615.8 921.8L616.3 918.5L616.7 922.5L617.1 918.7L617.5 918.3L618.0 921.2L618.4 920.0L618.8 917.8L619.2 920.9L619.6 917.7L620.0 921.9L620.5 921.4L621.0 922.0L621.5 921.1L622.0 919.6L622.5 919.9L623.0 919.9L623.5 922.8L623.9 918.2L624.4 922.9L624.9 918.0L625.4 919.1L625.9 919.4L626.3 923.2L626.8 920.9L627.3 920.3L627.7 923.3L628.2 919.5L628.6 920.9L629.1 921.4L629.5 922.7L630.0 922.8L630.4 921.9L630.9 920.8L631.3 920.8L631.7 920.1L632.1 922.9L632.5 922.2L633.0 922.6L633.4 920.4L633.8 921.5L634.1 922.9L634.5 922.1L634.9 920.4L635.3 921.8L635.6 923.5L636.0 921.0L636.5 920.8L636.9 921.3L637.3 923.0L637.5 923.6L637.7 920.9L637.9 921.0L638.0 921.4L638.1 921.8L638.2 922.6L638.3 921.2L638.4 922.0L638.6 921.5L638.8 924.4L639.1 923.7L639.5 921.3L639.9 924.4L640.5 921.3L641.2 922.5L642.1 924.4L643.1 924.4L644.2 924.4L645.6 924.0L645.9 923.0L646.1 924.4L646.4 922.7L646.7 923.1L646.9 923.8L647.2 922.4L647.5 923.9L647.7 924.4L648.0 924.4L648.2 924.3L648.5 924.3L648.8 924.3L649.1 924.2L649.3 924.3L649.6 924.3L649.9 924.4L650.1 924.4L650.4 924.3L650.7 924.3L651.0 924.4L651.2 924.3L651.5 924.3L651.8 924.4L652.1 924.4L652.4 924.4L652.6 924.4L652.9 924.4L653.2 924.4L653.5 924.4L653.8 924.3L654.1 924.3L654.4 924.4L654.7 924.3L655.0 924.3L655.3 924.4L655.6 924.4L655.9 924.4L656.2 924.3L656.6 924.3L656.9 924.4L657.2 924.4L657.5 924.3L657.9 924.4L658.2 924.4L658.5 924.3L658.9 924.4L659.2 924.4L659.6 924.3L659.9 924.4L660.3 924.4L660.6 924.3L661.0 924.4L661.3 924.3L661.7 924.4L662.1 924.4L662.5 924.4L662.8 924.3L663.2 924.4L663.6 924.4L664.0 924.4L664.4 924.4L664.8 924.4L665.2 924.4L665.6 924.4L666.1 924.3L666.5 924.4L666.9 924.3L667.4 924.4L667.8 924.3L668.2 924.4L668.7 924.3L669.1 924.4L669.6 924.3L670.1 924.3L670.5 924.3L671.0 924.3L671.5 924.2L672.0 924.3L672.5 924.3L673.0 924.4L673.5 924.3L674.0 924.3L674.6 924.3L675.1 924.4L675.6 924.4L676.2 924.4L676.7 924.3L677.3 924.4L677.8 924.3L678.4 924.3L679.0 924.3L679.6 924.4L680.2 924.4L680.8 924.4L681.4 924.3L682.0 924.4L682.6 924.3L683.2 924.4L683.9 924.3L684.5 924.4L685.2 924.4L685.8 924.4L686.5 924.3L687.2 924.3L687.9 924.4L688.5 924.3L689.3 924.4L690.0 924.3L690.7 924.4L691.4 924.3L692.1 924.3L692.9 924.3L693.6 924.3L694.4 924.3L695.2 924.2L696.0 924.4L696.7 924.3L697.5 924.3L698.4 924.3L699.2 924.3L700.0 924.3L700.3 924.4L700.6 924.4L700.9 924.3L701.3 924.4L701.6 924.4L701.9 924.2L702.2 924.4L702.6 924.4L702.9 924.4L703.2 924.3L703.6 924.4L703.9 924.4L704.3 924.2L704.6 924.2L705.0 924.4L705.3 924.4L705.7 924.3L706.0 924.3L706.4 924.3L706.8 924.3L707.1 924.4L707.5 924.3L707.9 924.3L708.2 924.4L708.6 924.4L709.0 924.3L709.4 924.4L709.8 924.4L710.2 924.4L710.5 924.4L710.9 924.4L711.3 924.4L711.7 924.4L712.1 924.3L712.5 924.4L712.9 924.4L713.3 924.4L713.8 924.3L714.2 924.4L714.6 924.4L715.0 924.3L715.4 924.3L715.8 924.3L716.3 924.4L716.7 924.2L717.1 924.3L717.5 924.3L718.0 924.4L718.4 924.4L718.9 924.4L719.3 924.4L719.7 924.2L720.2 924.4L720.6 924.3L721.1 924.4L721.5 924.4L722.0 924.4L722.4 924.3L722.9 924.3L723.3 924.4L723.8 924.3L724.2 924.4L724.7 924.4L725.2 924.2L725.6 924.4L726.1 924.4L726.6 924.4L727.0 924.3L727.5 924.4L728.0 924.4L728.5 924.4L728.9 924.4L729.4 924.2L729.9 924.4L730.4 924.4L730.9 924.3L731.4 924.4L731.8 924.3L732.3 924.4L732.8 924.4L733.3 924.4L733.8 924.3L734.3 924.3L734.8 924.3L735.3 924.4L735.8 924.4L736.3 924.3L736.8 924.4L737.3 924.3L737.8 924.4L738.3 924.3L738.8 924.4L739.3 924.4L739.8 924.4L740.3 924.4L740.8 924.3L741.4 924.3L741.9 924.3L742.4 924.4L742.9 924.4L743.4 924.4L743.9 924.2L744.5 924.4L745.0 924.4L745.5 924.4L746.0 924.2L746.5 924.3L747.1 924.2L747.6 924.3L748.1 924.4L748.6 924.4L749.2 924.4L749.7 924.4L750.2 924.4L750.7 924.4L751.3 924.4L751.8 924.4L752.3 924.4L752.9 924.4L753.4 924.4L753.9 924.3L754.5 924.4L755.0 924.3L755.5 924.4L756.1 924.3L756.6 924.3L757.1 924.2L757.7 924.4L758.2 924.4L758.8 924.4L759.3 924.3L759.8 924.4L760.4 924.4L760.9 924.4L761.5 924.3L762.0 924.3L762.5 924.3L763.1 924.3L763.6 924.3L764.2 924.4L764.7 924.4L765.2 924.3L765.8 924.4L766.3 924.2L766.9 924.3L767.4 924.4L768.0 924.4L768.5 924.4L769.0 924.3L769.6 924.2L770.1 924.3L770.7 924.4L771.2 924.4L771.8 924.4L772.3 924.4L772.8 924.3L773.4 924.3L773.9 924.4L774.5 924.3L775.0 924.3L775.5 924.2L776.1 924.2L776.6 924.4L777.2 924.3L777.7 924.4L778.3 924.3L778.8 924.4L779.3 924.3L779.9 924.2L780.4 924.4L780.9 924.3L781.5 924.4L782.0 924.3L782.6 924.2L783.1 924.4L783.6 924.4L784.2 924.4L784.7 924.4L785.2 924.3L785.8 924.4L786.3 924.4L786.8 924.3L787.4 924.4L787.9 924.3L788.4 924.4L789.0 924.4L789.5 924.2L790.0 924.2L790.6 924.4L791.1 924.4L791.6 924.3L792.1 924.3L792.7 924.4L793.2 924.3L793.7 924.4L794.2 924.4L794.8 924.2L795.3 924.3L795.8 924.4L796.3 924.3L796.8 924.4L797.3 924.3L797.9 924.4L798.4 924.3L798.9 924.4L799.4 924.4L799.9 924.3L800.4 924.3L800.9 924.4L801.4 924.4L801.9 924.4L802.5 924.4L803.0 924.3L803.5 924.2L804.0 924.4L804.5 924.4L805.0 924.4L805.5 924.3L806.0 924.4L806.4 924.4L806.9 924.4L807.4 924.4L807.9 924.3L808.4 924.3L808.9 924.4L809.4 924.3L809.9 924.4L810.4 924.4L810.8 924.4L811.3 924.4L811.8 924.3L812.3 924.2L812.7 924.3L813.2 924.3L813.7 924.4L814.2 924.4L814.6 924.4L815.1 924.2L815.6 924.4L816.0 924.4L816.5 924.4L816.9 924.4L817.4 924.3L817.8 924.4L818.3 924.4L818.8 924.4L819.2 924.4L819.7 924.3L820.1 924.3L820.5 924.4L821.0 924.4L821.4 924.3L821.9 924.4L822.3 924.4L822.7 924.3L823.2 924.4L823.6 924.4L824.0 924.3L824.4 924.3L824.9 924.3L825.3 924.4L825.7 924.4L826.1 924.3L826.5 924.3L826.9 924.4L827.3 924.4L827.7 924.3L828.1 924.4L828.6 924.4L828.9 924.4L829.3 924.4L829.7 924.3L830.1 924.4L830.5 924.3L830.9 924.3L831.3 924.3L831.7 924.4L832.0 924.3L832.4 924.4L832.8 924.3L833.2 924.4L833.5 924.3L833.9 924.2L834.3 924.4L834.6 924.3L835.0 924.3L835.3 924.4L835.7 924.4L836.0 924.3L836.4 924.4L836.7 924.3L837.1 924.4L837.4 924.2L837.7 924.2L838.1 924.4L838.4 924.4L838.7 924.3L839.0 924.4L839.4 924.3L839.7 924.4L840.0 924.3L840.3 924.4L840.6 924.4L840.9 924.4L841.2 924.4L841.5 924.3L841.8 924.2L842.1 924.3L842.4 924.3L842.7 924.3L843.0 924.2L843.2 924.4L843.5 924.4L843.8 924.3L844.0 924.4L844.3 924.4L844.6 924.2L844.8 924.4L845.1 924.3L845.3 924.3L845.6 924.4L845.8 924.3L846.1 924.4L846.3 924.4L846.5 924.4L846.8 924.4L847.0 924.3" stroke="#f9f90e" stroke-width="2.6" fill="none" stroke-linejoin="round" stroke-linecap="round" clip-path="url(#lclip)"/>
<path d="M991.3 407.6h2.6v3.6h-2.6zM990.4 411.4h4.4M992.6 411.4v3" stroke="#e6eefc" stroke-width="0.9" fill="none" />
<path d="M999.4 408.2l4.8 5.6M1004.2 408.2l-4.8 5.6" stroke="#f3f7ff" stroke-width="1.3" fill="none" />
<rect x="886.2" y="426.6" width="5.2" height="6.4" fill="#f4f6fa" stroke="#7d8594" stroke-width=".8"/>
<rect x="887.5" y="428.8" width="2.6" height="2" fill="#111" />
<rect x="886.2" y="572.8" width="5.2" height="6.4" fill="#f4f6fa" stroke="#7d8594" stroke-width=".8"/>
<rect x="887.5" y="575" width="2.6" height="2" fill="#111" />
<rect x="886.2" y="689.76" width="5.2" height="6.4" fill="#f4f6fa" stroke="#7d8594" stroke-width=".8"/>
<rect x="887.5" y="691.96" width="2.6" height="2" fill="#111" />
<path d="M991.4 977h2.6v3.6h-2.6zM990.5 980.8h4.4M992.7 980.8v3" stroke="#e6eefc" stroke-width="0.9" fill="none" />
<path d="M999.4 977.6l4.8 5.6M1004.2 977.6l-4.8 5.6" stroke="#f3f7ff" stroke-width="1.3" fill="none" />
<rect x="71.5" y="1021" width="64.2" height="13.8" fill="none" stroke="#1d2a44" stroke-width="1.3"/>
<path d="M1114.85 461.15h10.8l-10.8 8z" stroke="none" stroke-width="1" fill="#128418" />
<path d="M1202.60 461.15h10.8l-10.8 8z" stroke="none" stroke-width="1" fill="#128418" />
<path d="M1290.35 461.15h10.8l-10.8 8z" stroke="none" stroke-width="1" fill="#128418" />
<path d="M1378.10 461.15h10.8l-10.8 8z" stroke="none" stroke-width="1" fill="#128418" />
<path d="M1114.85 481.73h10.8l-10.8 8z" stroke="none" stroke-width="1" fill="#128418" />
<path d="M1202.60 481.73h10.8l-10.8 8z" stroke="none" stroke-width="1" fill="#128418" />
<path d="M1290.35 481.73h10.8l-10.8 8z" stroke="none" stroke-width="1" fill="#128418" />
<path d="M1378.10 481.73h10.8l-10.8 8z" stroke="none" stroke-width="1" fill="#128418" />
<path d="M1114.85 502.30h10.8l-10.8 8z" stroke="none" stroke-width="1" fill="#128418" />
<path d="M1202.60 502.30h10.8l-10.8 8z" stroke="none" stroke-width="1" fill="#128418" />
<path d="M1290.35 502.30h10.8l-10.8 8z" stroke="none" stroke-width="1" fill="#128418" />
<path d="M1378.10 502.30h10.8l-10.8 8z" stroke="none" stroke-width="1" fill="#128418" />
<path d="M1114.85 522.88h10.8l-10.8 8z" stroke="none" stroke-width="1" fill="#128418" />
<path d="M1202.60 522.88h10.8l-10.8 8z" stroke="none" stroke-width="1" fill="#128418" />
<path d="M1290.35 522.88h10.8l-10.8 8z" stroke="none" stroke-width="1" fill="#128418" />
<path d="M1378.10 522.88h10.8l-10.8 8z" stroke="none" stroke-width="1" fill="#128418" />
<path d="M1114.85 543.45h10.8l-10.8 8z" stroke="none" stroke-width="1" fill="#128418" />
<path d="M1202.60 543.45h10.8l-10.8 8z" stroke="none" stroke-width="1" fill="#128418" />
<path d="M1290.35 543.45h10.8l-10.8 8z" stroke="none" stroke-width="1" fill="#128418" />
<path d="M1378.10 543.45h10.8l-10.8 8z" stroke="none" stroke-width="1" fill="#128418" />
<path d="M1114.85 564.02h10.8l-10.8 8z" stroke="none" stroke-width="1" fill="#128418" />
<path d="M1202.60 564.02h10.8l-10.8 8z" stroke="none" stroke-width="1" fill="#128418" />
<path d="M1290.35 564.02h10.8l-10.8 8z" stroke="none" stroke-width="1" fill="#128418" />
<path d="M1378.10 564.02h10.8l-10.8 8z" stroke="none" stroke-width="1" fill="#128418" />
<path d="M1114.85 584.60h10.8l-10.8 8z" stroke="none" stroke-width="1" fill="#128418" />
<path d="M1202.60 584.60h10.8l-10.8 8z" stroke="none" stroke-width="1" fill="#128418" />
<path d="M1290.35 584.60h10.8l-10.8 8z" stroke="none" stroke-width="1" fill="#128418" />
<path d="M1378.10 584.60h10.8l-10.8 8z" stroke="none" stroke-width="1" fill="#128418" />
<rect x="1120.4" y="643" width="815.2" height="459.2" fill="#1c759d" />
<rect x="1119.8" y="641" width="816.8" height="2.2" fill="#fafcff" />
<rect x="1120.4" y="643" width="815.2" height="2.7" fill="#586779" />
<line x1="1120.4" y1="1011.5" x2="1935.6" y2="1011.5" stroke="#4796bb" stroke-width="2.2" />
<line x1="1120.4" y1="919.5" x2="1935.6" y2="919.5" stroke="#4796bb" stroke-width="2.2" />
<line x1="1120.4" y1="827.5" x2="1935.6" y2="827.5" stroke="#4796bb" stroke-width="2.2" />
<line x1="1120.4" y1="735.5" x2="1935.6" y2="735.5" stroke="#4796bb" stroke-width="2.2" />
<line x1="1202.2" y1="645.7" x2="1202.2" y2="1102.2" stroke="#4796bb" stroke-width="2.2" />
<line x1="1283.8" y1="645.7" x2="1283.8" y2="1102.2" stroke="#4796bb" stroke-width="2.2" />
<line x1="1365.4" y1="645.7" x2="1365.4" y2="1102.2" stroke="#4796bb" stroke-width="2.2" />
<line x1="1447" y1="645.7" x2="1447" y2="1102.2" stroke="#4796bb" stroke-width="2.2" />
<line x1="1528.6" y1="645.7" x2="1528.6" y2="1102.2" stroke="#4796bb" stroke-width="2.2" />
<line x1="1610.2" y1="645.7" x2="1610.2" y2="1102.2" stroke="#4796bb" stroke-width="2.2" />
<line x1="1691.8" y1="645.7" x2="1691.8" y2="1102.2" stroke="#4796bb" stroke-width="2.2" />
<line x1="1773.4" y1="645.7" x2="1773.4" y2="1102.2" stroke="#4796bb" stroke-width="2.2" />
<line x1="1855" y1="645.7" x2="1855" y2="1102.2" stroke="#4796bb" stroke-width="2.2" />
<rect x="1935.6" y="644" width="1.4" height="460.2" fill="#f6f9fe" />
<rect x="1118.4" y="1102.2" width="818.6" height="2.6" fill="#fbfcff" />
<line x1="1120.4" y1="1105.9" x2="1936.6" y2="1105.9" stroke="#5353c9" stroke-width="1.6" />
<line x1="1120.6" y1="1105.9" x2="1120.6" y2="1109.2" stroke="#5353c9" stroke-width="1.1" />
<line x1="1136.92" y1="1105.9" x2="1136.92" y2="1109.2" stroke="#5353c9" stroke-width="1.1" />
<line x1="1153.24" y1="1105.9" x2="1153.24" y2="1109.2" stroke="#5353c9" stroke-width="1.1" />
<line x1="1169.56" y1="1105.9" x2="1169.56" y2="1109.2" stroke="#5353c9" stroke-width="1.1" />
<line x1="1185.88" y1="1105.9" x2="1185.88" y2="1109.2" stroke="#5353c9" stroke-width="1.1" />
<line x1="1202.2" y1="1105.9" x2="1202.2" y2="1109.2" stroke="#5353c9" stroke-width="1.1" />
<line x1="1218.52" y1="1105.9" x2="1218.52" y2="1109.2" stroke="#5353c9" stroke-width="1.1" />
<line x1="1234.84" y1="1105.9" x2="1234.84" y2="1109.2" stroke="#5353c9" stroke-width="1.1" />
<line x1="1251.16" y1="1105.9" x2="1251.16" y2="1109.2" stroke="#5353c9" stroke-width="1.1" />
<line x1="1267.48" y1="1105.9" x2="1267.48" y2="1109.2" stroke="#5353c9" stroke-width="1.1" />
<line x1="1283.8" y1="1105.9" x2="1283.8" y2="1109.2" stroke="#5353c9" stroke-width="1.1" />
<line x1="1300.12" y1="1105.9" x2="1300.12" y2="1109.2" stroke="#5353c9" stroke-width="1.1" />
<line x1="1316.44" y1="1105.9" x2="1316.44" y2="1109.2" stroke="#5353c9" stroke-width="1.1" />
<line x1="1332.76" y1="1105.9" x2="1332.76" y2="1109.2" stroke="#5353c9" stroke-width="1.1" />
<line x1="1349.08" y1="1105.9" x2="1349.08" y2="1109.2" stroke="#5353c9" stroke-width="1.1" />
<line x1="1365.4" y1="1105.9" x2="1365.4" y2="1109.2" stroke="#5353c9" stroke-width="1.1" />
<line x1="1381.72" y1="1105.9" x2="1381.72" y2="1109.2" stroke="#5353c9" stroke-width="1.1" />
<line x1="1398.04" y1="1105.9" x2="1398.04" y2="1109.2" stroke="#5353c9" stroke-width="1.1" />
<line x1="1414.36" y1="1105.9" x2="1414.36" y2="1109.2" stroke="#5353c9" stroke-width="1.1" />
<line x1="1430.68" y1="1105.9" x2="1430.68" y2="1109.2" stroke="#5353c9" stroke-width="1.1" />
<line x1="1447" y1="1105.9" x2="1447" y2="1109.2" stroke="#5353c9" stroke-width="1.1" />
<line x1="1463.32" y1="1105.9" x2="1463.32" y2="1109.2" stroke="#5353c9" stroke-width="1.1" />
<line x1="1479.64" y1="1105.9" x2="1479.64" y2="1109.2" stroke="#5353c9" stroke-width="1.1" />
<line x1="1495.96" y1="1105.9" x2="1495.96" y2="1109.2" stroke="#5353c9" stroke-width="1.1" />
<line x1="1512.28" y1="1105.9" x2="1512.28" y2="1109.2" stroke="#5353c9" stroke-width="1.1" />
<line x1="1528.6" y1="1105.9" x2="1528.6" y2="1109.2" stroke="#5353c9" stroke-width="1.1" />
<line x1="1544.92" y1="1105.9" x2="1544.92" y2="1109.2" stroke="#5353c9" stroke-width="1.1" />
<line x1="1561.24" y1="1105.9" x2="1561.24" y2="1109.2" stroke="#5353c9" stroke-width="1.1" />
<line x1="1577.56" y1="1105.9" x2="1577.56" y2="1109.2" stroke="#5353c9" stroke-width="1.1" />
<line x1="1593.88" y1="1105.9" x2="1593.88" y2="1109.2" stroke="#5353c9" stroke-width="1.1" />
<line x1="1610.2" y1="1105.9" x2="1610.2" y2="1109.2" stroke="#5353c9" stroke-width="1.1" />
<line x1="1626.52" y1="1105.9" x2="1626.52" y2="1109.2" stroke="#5353c9" stroke-width="1.1" />
<line x1="1642.84" y1="1105.9" x2="1642.84" y2="1109.2" stroke="#5353c9" stroke-width="1.1" />
<line x1="1659.16" y1="1105.9" x2="1659.16" y2="1109.2" stroke="#5353c9" stroke-width="1.1" />
<line x1="1675.48" y1="1105.9" x2="1675.48" y2="1109.2" stroke="#5353c9" stroke-width="1.1" />
<line x1="1691.8" y1="1105.9" x2="1691.8" y2="1109.2" stroke="#5353c9" stroke-width="1.1" />
<line x1="1708.12" y1="1105.9" x2="1708.12" y2="1109.2" stroke="#5353c9" stroke-width="1.1" />
<line x1="1724.44" y1="1105.9" x2="1724.44" y2="1109.2" stroke="#5353c9" stroke-width="1.1" />
<line x1="1740.76" y1="1105.9" x2="1740.76" y2="1109.2" stroke="#5353c9" stroke-width="1.1" />
<line x1="1757.08" y1="1105.9" x2="1757.08" y2="1109.2" stroke="#5353c9" stroke-width="1.1" />
<line x1="1773.4" y1="1105.9" x2="1773.4" y2="1109.2" stroke="#5353c9" stroke-width="1.1" />
<line x1="1789.72" y1="1105.9" x2="1789.72" y2="1109.2" stroke="#5353c9" stroke-width="1.1" />
<line x1="1806.04" y1="1105.9" x2="1806.04" y2="1109.2" stroke="#5353c9" stroke-width="1.1" />
<line x1="1822.36" y1="1105.9" x2="1822.36" y2="1109.2" stroke="#5353c9" stroke-width="1.1" />
<line x1="1838.68" y1="1105.9" x2="1838.68" y2="1109.2" stroke="#5353c9" stroke-width="1.1" />
<line x1="1855" y1="1105.9" x2="1855" y2="1109.2" stroke="#5353c9" stroke-width="1.1" />
<line x1="1871.32" y1="1105.9" x2="1871.32" y2="1109.2" stroke="#5353c9" stroke-width="1.1" />
<line x1="1887.64" y1="1105.9" x2="1887.64" y2="1109.2" stroke="#5353c9" stroke-width="1.1" />
<line x1="1903.96" y1="1105.9" x2="1903.96" y2="1109.2" stroke="#5353c9" stroke-width="1.1" />
<line x1="1920.28" y1="1105.9" x2="1920.28" y2="1109.2" stroke="#5353c9" stroke-width="1.1" />
<line x1="1936.6" y1="1105.9" x2="1936.6" y2="1109.2" stroke="#5353c9" stroke-width="1.1" />
<line x1="1120.6" y1="1105.9" x2="1120.6" y2="1112.6" stroke="#5353c9" stroke-width="1.3" />
<line x1="1202.2" y1="1105.9" x2="1202.2" y2="1112.6" stroke="#5353c9" stroke-width="1.3" />
<line x1="1283.8" y1="1105.9" x2="1283.8" y2="1112.6" stroke="#5353c9" stroke-width="1.3" />
<line x1="1365.4" y1="1105.9" x2="1365.4" y2="1112.6" stroke="#5353c9" stroke-width="1.3" />
<line x1="1447" y1="1105.9" x2="1447" y2="1112.6" stroke="#5353c9" stroke-width="1.3" />
<line x1="1528.6" y1="1105.9" x2="1528.6" y2="1112.6" stroke="#5353c9" stroke-width="1.3" />
<line x1="1610.2" y1="1105.9" x2="1610.2" y2="1112.6" stroke="#5353c9" stroke-width="1.3" />
<line x1="1691.8" y1="1105.9" x2="1691.8" y2="1112.6" stroke="#5353c9" stroke-width="1.3" />
<line x1="1773.4" y1="1105.9" x2="1773.4" y2="1112.6" stroke="#5353c9" stroke-width="1.3" />
<line x1="1855" y1="1105.9" x2="1855" y2="1112.6" stroke="#5353c9" stroke-width="1.3" />
<line x1="1936.6" y1="1105.9" x2="1936.6" y2="1112.6" stroke="#5353c9" stroke-width="1.3" />
<line x1="1117.1" y1="643" x2="1117.1" y2="1103.6" stroke="#7c808b" stroke-width="2.6" />
<line x1="1119.2" y1="643" x2="1119.2" y2="1103.6" stroke="#cfd5df" stroke-width="1.4" />
<line x1="1111.6" y1="1103.5" x2="1117.4" y2="1103.5" stroke="#70747e" stroke-width="1.9" />
<line x1="1111.6" y1="1085.1" x2="1117.4" y2="1085.1" stroke="#70747e" stroke-width="1.9" />
<line x1="1111.6" y1="1066.7" x2="1117.4" y2="1066.7" stroke="#70747e" stroke-width="1.9" />
<line x1="1111.6" y1="1048.3" x2="1117.4" y2="1048.3" stroke="#70747e" stroke-width="1.9" />
<line x1="1111.6" y1="1029.9" x2="1117.4" y2="1029.9" stroke="#70747e" stroke-width="1.9" />
<line x1="1111.6" y1="1011.5" x2="1117.4" y2="1011.5" stroke="#70747e" stroke-width="1.9" />
<line x1="1111.6" y1="993.1" x2="1117.4" y2="993.1" stroke="#70747e" stroke-width="1.9" />
<line x1="1111.6" y1="974.7" x2="1117.4" y2="974.7" stroke="#70747e" stroke-width="1.9" />
<line x1="1111.6" y1="956.3" x2="1117.4" y2="956.3" stroke="#70747e" stroke-width="1.9" />
<line x1="1111.6" y1="937.9" x2="1117.4" y2="937.9" stroke="#70747e" stroke-width="1.9" />
<line x1="1111.6" y1="919.5" x2="1117.4" y2="919.5" stroke="#70747e" stroke-width="1.9" />
<line x1="1111.6" y1="901.1" x2="1117.4" y2="901.1" stroke="#70747e" stroke-width="1.9" />
<line x1="1111.6" y1="882.7" x2="1117.4" y2="882.7" stroke="#70747e" stroke-width="1.9" />
<line x1="1111.6" y1="864.3" x2="1117.4" y2="864.3" stroke="#70747e" stroke-width="1.9" />
<line x1="1111.6" y1="845.9" x2="1117.4" y2="845.9" stroke="#70747e" stroke-width="1.9" />
<line x1="1111.6" y1="827.5" x2="1117.4" y2="827.5" stroke="#70747e" stroke-width="1.9" />
<line x1="1111.6" y1="809.1" x2="1117.4" y2="809.1" stroke="#70747e" stroke-width="1.9" />
<line x1="1111.6" y1="790.7" x2="1117.4" y2="790.7" stroke="#70747e" stroke-width="1.9" />
<line x1="1111.6" y1="772.3" x2="1117.4" y2="772.3" stroke="#70747e" stroke-width="1.9" />
<line x1="1111.6" y1="753.9" x2="1117.4" y2="753.9" stroke="#70747e" stroke-width="1.9" />
<line x1="1111.6" y1="735.5" x2="1117.4" y2="735.5" stroke="#70747e" stroke-width="1.9" />
<line x1="1111.6" y1="717.1" x2="1117.4" y2="717.1" stroke="#70747e" stroke-width="1.9" />
<line x1="1111.6" y1="698.7" x2="1117.4" y2="698.7" stroke="#70747e" stroke-width="1.9" />
<line x1="1111.6" y1="680.3" x2="1117.4" y2="680.3" stroke="#70747e" stroke-width="1.9" />
<line x1="1111.6" y1="661.9" x2="1117.4" y2="661.9" stroke="#70747e" stroke-width="1.9" />
<line x1="1108" y1="1103.5" x2="1117.4" y2="1103.5" stroke="#666a72" stroke-width="2" />
<line x1="1108" y1="1011.5" x2="1117.4" y2="1011.5" stroke="#666a72" stroke-width="2" />
<line x1="1108" y1="919.5" x2="1117.4" y2="919.5" stroke="#666a72" stroke-width="2" />
<line x1="1108" y1="827.5" x2="1117.4" y2="827.5" stroke="#666a72" stroke-width="2" />
<line x1="1108" y1="735.5" x2="1117.4" y2="735.5" stroke="#666a72" stroke-width="2" />
<line x1="1108" y1="643.5" x2="1117.4" y2="643.5" stroke="#666a72" stroke-width="2" />
<path d="M1106.6 642h4.2l1.8 2l-1.8 2h-4.2z" stroke="#a2a8b0" stroke-width="0.8" fill="#c9ced6" />
<path d="M1103.6 1100.8h4.2l1.8 2l-1.8 2h-4.2z" stroke="#a2a8b0" stroke-width="0.8" fill="#c9ced6" />
<rect x="1119.4" y="1107.6" width="3.6" height="7.4" fill="#dcdfe4" stroke="#9a9fa8" stroke-width=".8"/>
<rect x="1933.6" y="1107.6" width="3.6" height="7.4" fill="#dcdfe4" stroke="#9a9fa8" stroke-width=".8"/>
<clipPath id="rclip"><rect x="1120.8" y="645.8" width="814.8" height="457.6"/></clipPath>
<g clip-path="url(#rclip)"><g fill="none" stroke-linejoin="round" stroke-linecap="round"><path transform="translate(1.3 0)" d="M1122.5 1086.0L1123.3 1078.9L1124.5 1070.0L1125.4 1064.7L1126.4 1059.4L1127.5 1055.0L1128.6 1051.7L1129.7 1049.3L1131.0 1047.0L1131.9 1045.5L1132.9 1044.0L1134.0 1042.6L1135.0 1041.6L1136.0 1041.0L1137.0 1041.3L1138.0 1042.3L1139.0 1043.5L1140.0 1044.5L1140.9 1045.0L1141.8 1045.3L1142.8 1045.6L1143.8 1045.8L1145.0 1046.0L1146.0 1046.1L1147.1 1046.3L1148.2 1046.5L1149.4 1046.6L1150.6 1046.6L1151.6 1046.4L1152.5 1046.0L1153.9 1044.3L1154.9 1041.7L1156.0 1038.0L1157.0 1034.1L1158.0 1029.4L1159.1 1024.5L1160.0 1020.0L1161.1 1014.8L1162.1 1010.1L1163.0 1006.0L1163.9 1002.0L1164.8 998.6L1165.5 997.5L1166.3 1002.0L1166.8 1010.0L1167.1 1021.2L1167.6 1029.0L1168.4 1026.4L1169.3 1020.0L1170.5 1014.0L1171.5 1010.7L1172.7 1007.6L1173.9 1004.8L1175.0 1002.5L1176.0 1000.9L1177.1 999.9L1178.0 999.1L1179.0 998.5L1180.2 997.7L1181.3 997.2L1182.5 997.0L1183.5 997.1L1184.5 997.3L1185.5 997.6L1186.5 998.0L1187.7 998.8L1188.9 999.7L1190.0 1000.0L1191.1 999.4L1192.3 998.2L1193.5 996.5L1194.5 994.8L1195.5 992.8L1196.5 990.6L1197.5 988.0L1198.7 984.1L1199.8 979.8L1201.0 975.0L1202.0 971.1L1203.0 966.9L1204.0 962.6L1205.0 958.0L1206.2 951.5L1207.3 944.7L1208.5 938.0L1209.5 933.1L1210.4 928.3L1211.5 923.6L1212.5 919.0L1213.6 914.7L1214.7 910.6L1215.8 906.4L1217.0 902.0L1218.0 898.1L1219.1 894.0L1220.3 889.9L1221.4 885.8L1222.5 882.0L1223.6 878.6L1224.7 875.4L1225.8 872.4L1226.9 869.3L1228.0 866.0L1229.0 863.2L1229.9 860.3L1230.9 857.4L1231.9 854.4L1233.0 851.3L1234.0 848.0L1235.1 844.6L1236.2 841.1L1237.3 837.5L1238.4 833.8L1239.5 829.9L1240.5 826.0L1241.7 821.1L1242.8 816.0L1243.9 810.7L1244.9 805.4L1246.0 800.0L1247.0 794.6L1248.0 789.2L1249.0 783.7L1250.0 778.0L1251.0 772.0L1252.1 765.5L1253.2 758.4L1254.3 751.3L1255.5 744.4L1256.5 738.0L1257.7 730.8L1258.8 724.0L1259.9 717.8L1261.0 712.0L1262.1 706.7L1263.1 701.8L1264.1 697.5L1265.0 694.0L1266.0 690.3L1267.0 687.8L1267.8 687.5L1268.9 691.1L1270.0 700.0L1270.8 710.0L1271.7 722.5L1272.6 736.0L1273.5 749.9L1274.5 764.7L1275.5 780.0L1276.6 795.6L1277.8 811.6L1279.0 828.0L1280.0 845.1L1280.9 862.7L1282.0 880.0L1282.9 892.7L1283.8 905.4L1284.8 917.8L1286.0 930.0L1286.9 938.1L1287.9 946.4L1288.9 954.5L1289.9 962.3L1291.0 969.5L1292.0 976.0L1293.0 981.5L1294.0 986.3L1295.0 990.5L1296.0 994.4L1297.0 998.1L1298.0 1002.0L1299.0 1005.9L1300.0 1009.6L1301.0 1013.2L1302.0 1016.7L1303.0 1020.3L1304.0 1024.0L1305.0 1027.9L1306.1 1032.0L1307.1 1036.1L1308.1 1040.0L1309.1 1043.7L1310.0 1047.0L1311.1 1051.1L1312.1 1054.6L1313.0 1057.5L1314.0 1060.0L1315.0 1061.9L1315.9 1063.2L1316.9 1064.2L1318.0 1065.0L1319.0 1065.4L1320.0 1065.6L1321.0 1065.7L1322.0 1065.8L1323.0 1066.0L1324.0 1066.4L1325.0 1066.7L1326.0 1067.3L1327.0 1068.5L1327.9 1070.0L1328.9 1071.9L1329.9 1074.0L1331.0 1076.1L1332.0 1078.0L1333.1 1079.8L1334.2 1081.6L1335.3 1083.2L1336.5 1084.6L1337.5 1085.5L1338.7 1085.8L1339.8 1085.3L1340.9 1084.7L1342.0 1084.5L1343.0 1084.7L1344.0 1085.1L1344.9 1085.7L1346.0 1086.5L1346.9 1087.4L1347.9 1088.5L1349.0 1089.8L1350.0 1091.0L1351.0 1092.0L1352.0 1092.9L1353.0 1093.6L1353.9 1094.3L1354.9 1094.9L1356.0 1095.5L1356.9 1095.9L1357.9 1096.3L1358.9 1096.6L1360.0 1096.9L1361.0 1097.2L1362.0 1097.5L1363.0 1097.9L1364.0 1098.4L1365.0 1098.8L1366.0 1099.3L1367.0 1099.7L1368.0 1100.0L1369.0 1100.2L1370.0 1100.4L1371.0 1100.5L1372.0 1100.6L1373.0 1100.6L1374.0 1100.6L1375.0 1100.5L1376.0 1100.2L1377.0 1099.9L1378.0 1099.6L1379.0 1099.4L1380.0 1099.4L1381.0 1099.5L1382.0 1099.8L1383.0 1100.2L1384.0 1100.5L1385.0 1100.9L1386.0 1101.2L1387.1 1101.4L1388.2 1101.7L1389.4 1101.9L1390.4 1102.1L1391.3 1102.3L1392.0 1102.4M1420.0 1102.4L1425.0 1096.0L1428.4 1078.0L1431.0 1090.0L1433.5 1102.4M1449.0 1102.4L1452.5 1093.0L1455.4 1089.0L1458.4 1094.0L1461.0 1102.4M1505.0 1102.4L1509.0 1092.0L1512.5 1088.5L1516.0 1092.0L1519.0 1099.0L1523.0 1102.0L1528.0 1100.0L1534.0 1093.0L1538.0 1087.0L1542.5 1084.5L1549.0 1086.5L1557.5 1089.0L1563.0 1091.0L1568.0 1088.0L1572.5 1082.0L1577.5 1077.5L1582.0 1082.5L1587.5 1092.5L1592.0 1090.0L1597.5 1089.0L1603.0 1091.5L1608.0 1097.0L1612.0 1102.0L1618.0 1102.4L1624.0 1098.0L1628.0 1092.5L1632.5 1091.0L1635.5 1096.5L1638.5 1102.4M1743.0 1102.4L1749.0 1101.0L1756.0 1100.6L1762.0 1099.0L1766.0 1095.5L1770.0 1094.0L1774.0 1096.5L1778.0 1100.4L1783.0 1100.0L1788.0 1094.0L1792.5 1090.0L1799.0 1089.4L1805.0 1090.0L1810.0 1087.0L1815.0 1085.0L1821.0 1086.6L1826.0 1087.6L1831.0 1090.6L1835.0 1092.5L1841.0 1094.5L1846.0 1095.0L1851.0 1093.6L1856.0 1092.8L1861.5 1094.0" stroke="#b81f3a" stroke-width="2.6"/><path transform="translate(-.4 0)" d="M1122.0 1101.0L1122.8 1098.8L1123.9 1095.8L1125.0 1093.0L1126.0 1090.8L1127.0 1088.9L1128.0 1087.5L1129.1 1086.5L1130.3 1085.9L1131.5 1086.0L1132.6 1086.9L1133.8 1088.4L1135.0 1090.0L1136.0 1091.2L1137.0 1092.6L1138.0 1093.9L1139.0 1095.0L1140.2 1096.2L1141.3 1097.2L1142.5 1097.5L1143.6 1097.1L1144.7 1096.2L1145.9 1095.1L1147.0 1094.0L1148.1 1093.2L1149.1 1092.4L1150.1 1091.4L1151.0 1090.0L1152.1 1087.2L1153.0 1083.7L1154.0 1080.0L1155.0 1076.2L1156.0 1072.1L1157.0 1068.0L1158.0 1063.8L1158.9 1059.4L1160.0 1055.0L1160.9 1051.5L1162.0 1047.9L1163.0 1044.3L1164.0 1041.0L1165.2 1037.2L1166.4 1033.8L1167.5 1030.0L1168.6 1025.5L1169.8 1020.7L1171.0 1016.0L1172.1 1012.6L1173.2 1009.2L1174.4 1006.0L1175.5 1003.5L1176.5 1001.7L1177.6 1000.6L1178.5 999.7L1179.5 999.0L1180.7 998.2L1181.8 997.8L1183.0 997.6L1184.0 997.6L1185.0 997.8L1186.0 998.1L1187.0 998.4L1188.2 999.2L1189.4 1000.1L1190.5 1000.4L1191.6 999.9L1192.8 998.7L1194.0 997.0L1195.0 995.3L1196.0 993.2L1197.0 990.7L1198.0 988.0L1199.2 983.9L1200.4 979.1L1201.6 974.0L1202.5 969.8L1203.5 965.4L1204.5 960.7L1205.4 956.0L1206.6 949.4L1207.8 942.7L1209.0 936.0L1210.0 931.1L1210.9 926.3L1211.9 921.6L1213.0 917.0L1214.1 912.7L1215.2 908.5L1216.4 904.4L1217.6 900.0L1218.6 896.2L1219.7 892.2L1220.8 888.2L1221.9 884.2L1223.0 880.5L1224.1 877.0L1225.2 873.8L1226.3 870.6L1227.5 867.3L1228.6 864.0L1229.6 861.1L1230.6 858.3L1231.5 855.3L1232.6 852.4L1233.6 849.2L1234.6 846.0L1235.7 842.6L1236.7 839.1L1237.8 835.5L1238.9 831.8L1240.0 827.9L1241.0 824.0L1242.2 819.1L1243.3 814.0L1244.4 808.7L1245.5 803.4L1246.6 798.0L1247.6 792.6L1248.6 787.2L1249.6 781.7L1250.6 776.0L1251.6 770.0L1252.7 763.5L1253.8 756.7L1254.9 749.7L1256.0 742.8L1257.0 736.5L1258.2 729.2L1259.4 722.2L1260.5 715.8L1261.6 710.0L1262.6 704.8L1263.6 700.2L1264.6 696.2L1265.4 693.0L1266.4 689.6L1267.2 687.6L1268.0 687.6L1268.8 689.8L1269.6 694.2L1270.4 701.0L1271.2 711.0L1272.1 723.6L1273.0 737.0L1274.0 750.9L1275.0 765.7L1276.0 781.0L1277.1 796.6L1278.3 812.6L1279.4 829.0L1280.5 846.1L1281.5 863.7L1282.6 881.0L1283.5 893.4L1284.3 905.6L1285.3 917.8L1286.4 930.0L1287.3 938.6L1288.3 947.5L1289.3 956.4L1290.4 965.1L1291.5 973.0L1292.5 980.0L1293.7 986.9L1294.8 992.6L1295.9 997.4L1297.0 1001.8L1298.0 1006.0L1299.2 1010.7L1300.3 1014.5L1301.4 1018.2L1302.5 1022.5L1303.6 1027.6L1304.7 1033.1L1305.8 1038.7L1307.0 1044.0L1308.1 1048.2L1309.2 1052.5L1310.4 1056.5L1311.5 1060.1L1312.5 1063.0L1313.8 1065.8L1314.9 1067.1L1316.0 1068.0L1317.0 1068.6L1318.0 1068.9L1319.0 1069.3L1320.0 1070.0L1321.0 1071.1L1322.0 1072.6L1323.0 1074.2L1324.0 1076.0L1325.2 1078.9L1326.4 1082.1L1327.5 1085.0L1328.5 1087.3L1329.5 1089.2L1330.5 1090.5L1331.6 1091.1L1332.9 1091.2L1334.0 1091.0L1335.0 1090.3L1336.0 1089.3L1337.0 1088.6L1338.0 1088.4L1339.0 1088.4L1340.0 1089.0L1341.1 1090.3L1342.3 1092.1L1343.5 1094.0L1344.5 1095.6L1345.4 1097.4L1346.5 1099.1L1347.5 1100.4L1348.7 1101.3L1350.0 1101.9L1351.2 1102.3L1352.0 1102.6M1421.0 1102.4L1425.0 1090.0L1428.8 1075.5L1432.0 1088.0L1435.0 1102.4M1449.5 1102.4L1452.6 1092.0L1455.2 1087.5L1458.0 1092.5L1460.8 1102.4M1503.0 1102.4L1507.0 1092.0L1510.5 1087.6L1515.0 1088.8L1518.5 1096.0L1521.5 1100.4L1526.0 1100.6L1530.5 1099.0L1535.0 1093.0L1540.0 1089.0L1545.0 1091.5L1550.0 1095.0L1556.0 1090.5L1562.5 1086.0L1568.0 1090.0L1572.5 1094.0L1579.0 1091.5L1585.0 1089.0L1590.0 1091.5L1595.0 1094.0L1600.0 1092.0L1605.0 1091.0L1609.0 1096.0L1612.5 1101.4L1617.0 1100.0L1621.0 1094.0L1625.0 1091.0L1629.0 1095.0L1632.5 1100.0L1638.0 1100.6L1645.0 1099.0L1650.0 1100.0L1655.0 1102.0M1783.0 1102.4L1788.0 1099.4L1791.5 1096.0L1795.0 1094.0L1800.0 1094.6L1804.0 1095.0L1809.0 1091.5L1815.0 1087.5L1821.0 1088.8L1827.0 1090.0L1832.0 1088.0L1837.5 1086.0L1843.0 1088.4L1850.0 1092.5L1855.0 1092.6L1858.0 1090.0L1861.5 1086.0" stroke="#1212e4" stroke-width="2.6"/><path d="M1129.0 1102.0L1129.8 1100.6L1130.9 1098.6L1132.0 1097.0L1133.0 1095.9L1134.0 1095.2L1135.0 1095.0L1136.0 1095.4L1137.0 1096.4L1138.0 1097.5L1139.1 1098.9L1140.3 1100.4L1141.5 1101.5L1142.7 1102.0L1143.8 1102.1L1145.0 1102.0L1145.9 1101.9L1146.9 1101.7L1147.8 1101.1L1148.8 1100.0L1149.8 1098.2L1150.9 1095.8L1151.9 1093.0L1153.0 1090.0L1154.1 1086.6L1155.3 1082.9L1156.4 1079.0L1157.5 1075.0L1158.7 1069.5L1159.8 1063.8L1161.0 1058.0L1162.0 1053.4L1163.0 1048.7L1164.0 1044.1L1165.0 1040.0L1166.2 1035.5L1167.4 1031.7L1168.6 1028.0L1169.5 1025.2L1170.5 1022.4L1171.5 1019.8L1172.5 1017.5L1173.6 1015.5L1174.7 1013.8L1175.8 1012.3L1177.0 1011.0L1178.1 1010.1L1179.2 1009.2L1180.4 1008.5L1181.5 1008.0L1182.5 1007.6L1183.7 1007.4L1184.7 1007.6L1185.5 1008.0L1186.5 1009.1L1187.5 1010.0L1188.4 1009.9L1189.5 1009.3L1190.5 1008.5L1191.4 1007.4L1192.2 1006.0L1193.0 1004.5L1194.0 1002.9L1195.0 1000.0L1195.8 996.2L1196.6 991.4L1197.5 986.0L1198.3 980.4L1199.1 974.2L1200.0 967.5L1201.0 960.1L1202.2 952.1L1203.5 944.0L1204.4 939.0L1205.5 933.7L1206.6 928.4L1207.7 923.4L1208.8 919.0L1209.8 915.3L1210.7 912.3L1211.7 909.5L1212.8 906.5L1214.0 903.0L1214.9 900.5L1216.0 897.9L1217.1 895.2L1218.3 892.4L1219.5 889.4L1220.6 886.4L1221.6 883.3L1222.5 880.0L1223.9 872.8L1225.0 865.0L1226.0 857.1L1227.0 850.0L1228.0 844.1L1229.0 838.8L1229.9 833.6L1231.0 827.5L1231.9 821.8L1232.9 815.5L1234.0 808.9L1235.0 802.3L1236.0 796.0L1237.0 789.9L1238.0 783.9L1239.0 777.9L1240.0 772.0L1241.0 766.0L1242.0 759.9L1243.0 753.9L1244.0 747.8L1245.0 741.7L1246.0 735.7L1247.0 729.6L1248.0 723.5L1249.0 717.4L1250.0 711.5L1251.0 706.0L1252.2 699.6L1253.3 693.5L1254.5 687.9L1255.5 683.0L1256.8 677.4L1258.0 672.9L1259.0 669.5L1260.2 666.6L1261.3 666.2L1262.5 667.1L1263.6 672.0L1264.6 684.1L1265.6 700.0L1266.5 716.2L1267.5 735.7L1268.3 753.0L1269.2 772.5L1270.0 790.0L1271.0 808.9L1272.0 827.5L1272.9 844.4L1273.9 862.9L1275.0 880.0L1275.9 890.9L1276.9 900.8L1277.9 910.1L1278.8 919.0L1279.8 930.0L1280.7 940.0L1281.6 950.0L1282.6 960.1L1283.7 970.2L1285.0 980.0L1285.9 985.8L1286.9 991.6L1287.9 997.3L1289.0 1002.8L1290.0 1008.0L1291.0 1012.8L1292.1 1017.4L1293.1 1021.8L1294.1 1026.0L1295.0 1030.0L1296.1 1036.1L1297.0 1041.9L1298.0 1048.0L1299.0 1053.5L1300.2 1059.6L1301.4 1065.4L1302.5 1070.0L1303.7 1073.9L1304.8 1076.2L1306.0 1078.0L1307.0 1079.1L1308.0 1079.9L1309.0 1080.4L1310.0 1081.0L1311.0 1081.4L1311.9 1081.6L1312.8 1082.0L1313.8 1083.0L1314.8 1084.8L1315.9 1087.2L1316.9 1089.7L1318.0 1092.0L1319.1 1094.0L1320.2 1095.8L1321.4 1097.5L1322.5 1098.8L1323.6 1099.7L1324.7 1100.2L1325.8 1100.6L1327.0 1101.0L1328.0 1101.4L1329.2 1101.7L1330.3 1102.0L1331.3 1102.2L1332.0 1102.4M1410.0 1102.4L1413.0 1098.5L1415.0 1096.0L1417.4 1098.5L1420.0 1102.4M1487.0 1102.4L1490.0 1098.0L1492.5 1095.4L1495.0 1098.0L1497.6 1102.4M1536.0 1102.4L1539.0 1100.0L1541.0 1099.4L1543.0 1100.2L1546.0 1102.4M1549.5 1102.4L1552.0 1100.0L1554.0 1099.6L1556.5 1100.4L1559.0 1102.4" stroke="#52e0cf" stroke-width="2.5"/></g></g>
</svg>
<div id="txt">
<span class="t" style="left:993.2px;top:340.6px;color:#fff;font-family:'Liberation Sans','Noto Sans CJK SC',sans-serif;font-size:11.5px;font-weight:bold;transform-origin:50% 50%;transform:translate(-50%,-50%) scale(0.850,1);">x</span>
<span class="t" style="left:38.5px;top:344.02px;color:#1a1f1e;font-family:'Liberation Sans','Noto Sans CJK SC',sans-serif;font-size:10.8px;transform-origin:0 50%;transform:translate(0,-50%) scale(0.587,1);-webkit-text-stroke:0.3px #1a1f1e;">MB029C动态冲击载荷试验系统</span>
<span class="t" style="left:33.75px;top:362.29px;color:#24334f;font-family:'Liberation Sans','Noto Sans CJK SC',sans-serif;font-size:9.6px;transform-origin:0 50%;transform:translate(0,-50%) scale(0.642,1);-webkit-text-stroke:0.3px #24334f;">测试文件(F)</span>
<span class="t" style="left:75px;top:362.29px;color:#24334f;font-family:'Liberation Sans','Noto Sans CJK SC',sans-serif;font-size:9.6px;transform-origin:0 50%;transform:translate(0,-50%) scale(0.643,1);-webkit-text-stroke:0.3px #24334f;">测试控制(C)</span>
<span class="t" style="left:117px;top:362.29px;color:#24334f;font-family:'Liberation Sans','Noto Sans CJK SC',sans-serif;font-size:9.6px;transform-origin:0 50%;transform:translate(0,-50%) scale(0.635,1);-webkit-text-stroke:0.3px #24334f;">通用设置(S)</span>
<span class="t" style="left:158px;top:362.29px;color:#24334f;font-family:'Liberation Sans','Noto Sans CJK SC',sans-serif;font-size:9.6px;transform-origin:0 50%;transform:translate(0,-50%) scale(0.658,1);-webkit-text-stroke:0.3px #24334f;">系统帮助(H)</span>
<span class="t" style="left:984.5px;top:361.6px;color:#24334f;font-family:'Liberation Sans','Noto Sans CJK SC',sans-serif;font-size:10px;transform-origin:0 50%;transform:translate(0,-50%) scale(0.705,1);-webkit-text-stroke:0.3px #24334f;">style</span>
<span class="t" style="left:509px;top:387.3px;color:#1c1c1c;font-family:'Liberation Sans','Noto Sans CJK SC',sans-serif;font-size:10px;transform-origin:0 50%;transform:translate(0,-50%) scale(0.680,1);-webkit-text-stroke:0.3px #1c1c1c;">时间:</span>
<span class="t" style="left:947.2px;top:387.3px;color:#1c1c1c;font-family:'Liberation Sans','Noto Sans CJK SC',sans-serif;font-size:10px;transform-origin:0 50%;transform:translate(0,-50%) scale(0.643,1);-webkit-text-stroke:0.3px #1c1c1c;">状态提示: 尚未联机</span>
<span class="t" style="left:33px;top:429.19px;color:#1e1e1e;font-family:'Liberation Sans','Noto Sans CJK SC',sans-serif;font-size:19.6px;transform-origin:0 50%;transform:translate(0,-50%) scale(0.740,1);">载荷</span>
<span class="t" style="left:160px;top:426.2px;color:#050505;font-family:'Liberation Serif','Noto Serif CJK SC',serif;font-size:38px;transform-origin:0 50%;transform:translate(0,-50%) scale(0.711,1);-webkit-text-stroke:0.62px #e2ecfb;">-40</span>
<span class="t" style="left:312.5px;top:427.2px;color:#222;font-family:'Liberation Serif','Noto Serif CJK SC',serif;font-size:13px;transform-origin:0 50%;transform:translate(0,-50%) scale(0.692,1);">N</span>
<span class="t" style="left:349.5px;top:429.19px;color:#1e1e1e;font-family:'Liberation Sans','Noto Sans CJK SC',sans-serif;font-size:19.6px;transform-origin:0 50%;transform:translate(0,-50%) scale(0.753,1);">高度</span>
<span class="t" style="left:464.5px;top:426.2px;color:#050505;font-family:'Liberation Serif','Noto Serif CJK SC',serif;font-size:38px;transform-origin:0 50%;transform:translate(0,-50%) scale(0.632,1);-webkit-text-stroke:0.62px #e2ecfb;">0000</span>
<span class="t" style="left:606px;top:427.6px;color:#222;font-family:'Liberation Serif','Noto Serif CJK SC',serif;font-size:11px;transform-origin:0 50%;transform:translate(0,-50%) scale(0.642,1);">mm</span>
<span class="t" style="left:639.5px;top:429.19px;color:#1e1e1e;font-family:'Liberation Sans','Noto Sans CJK SC',sans-serif;font-size:19.6px;transform-origin:0 50%;transform:translate(0,-50%) scale(0.766,1);">温度</span>
<span class="t" style="left:744px;top:426.2px;color:#050505;font-family:'Liberation Serif','Noto Serif CJK SC',serif;font-size:38px;transform-origin:0 50%;transform:translate(0,-50%) scale(0.632,1);-webkit-text-stroke:0.62px #e2ecfb;">000</span>
<span class="t" style="left:861.4px;top:426.6px;color:#222;font-family:'Liberation Sans','Noto Sans CJK SC',sans-serif;font-size:12.2px;transform-origin:0 50%;transform:translate(0,-50%) scale(0.722,1);-webkit-text-stroke:.2px #222;">℃</span>
<span class="t" style="left:62.9px;top:463.2px;color:#26282c;font-family:'Liberation Sans','Noto Sans CJK SC',sans-serif;font-size:10.4px;transform-origin:100% 50%;transform:translate(-100%,-50%) scale(0.640,1);-webkit-text-stroke:0.3px #26282c;">150.0</span>
<span class="t" style="left:62.9px;top:487.6px;color:#26282c;font-family:'Liberation Sans','Noto Sans CJK SC',sans-serif;font-size:10.4px;transform-origin:100% 50%;transform:translate(-100%,-50%) scale(0.640,1);-webkit-text-stroke:0.3px #26282c;">83.3</span>
<span class="t" style="left:62.9px;top:513.8px;color:#26282c;font-family:'Liberation Sans','Noto Sans CJK SC',sans-serif;font-size:10.4px;transform-origin:100% 50%;transform:translate(-100%,-50%) scale(0.640,1);-webkit-text-stroke:0.3px #26282c;">16.7</span>
<span class="t" style="left:62.9px;top:538.4px;color:#26282c;font-family:'Liberation Sans','Noto Sans CJK SC',sans-serif;font-size:10.4px;transform-origin:100% 50%;transform:translate(-100%,-50%) scale(0.640,1);-webkit-text-stroke:0.3px #26282c;">-50.0</span>
<span class="t" style="left:93.6px;top:556px;color:#3434c4;font-family:'Liberation Sans','Noto Sans CJK SC',sans-serif;font-size:10.4px;transform-origin:50% 50%;transform:translate(-50%,-50%) scale(0.611,1);-webkit-text-stroke:0.3px #3434c4;">2019-11-29</span>
<span class="t" style="left:93px;top:566.8px;color:#3434c4;font-family:'Liberation Sans','Noto Sans CJK SC',sans-serif;font-size:10.4px;transform-origin:50% 50%;transform:translate(-50%,-50%) scale(0.593,1);-webkit-text-stroke:0.3px #3434c4;">18:39:48</span>
<span class="t" style="left:248.82px;top:556px;color:#3434c4;font-family:'Liberation Sans','Noto Sans CJK SC',sans-serif;font-size:10.4px;transform-origin:50% 50%;transform:translate(-50%,-50%) scale(0.611,1);-webkit-text-stroke:0.3px #3434c4;">2019-11-29</span>
<span class="t" style="left:248.22px;top:566.8px;color:#3434c4;font-family:'Liberation Sans','Noto Sans CJK SC',sans-serif;font-size:10.4px;transform-origin:50% 50%;transform:translate(-50%,-50%) scale(0.593,1);-webkit-text-stroke:0.3px #3434c4;">18:40:00</span>
<span class="t" style="left:404.04px;top:556px;color:#3434c4;font-family:'Liberation Sans','Noto Sans CJK SC',sans-serif;font-size:10.4px;transform-origin:50% 50%;transform:translate(-50%,-50%) scale(0.611,1);-webkit-text-stroke:0.3px #3434c4;">2019-11-29</span>
<span class="t" style="left:403.44px;top:566.8px;color:#3434c4;font-family:'Liberation Sans','Noto Sans CJK SC',sans-serif;font-size:10.4px;transform-origin:50% 50%;transform:translate(-50%,-50%) scale(0.593,1);-webkit-text-stroke:0.3px #3434c4;">18:40:12</span>
<span class="t" style="left:559.26px;top:556px;color:#3434c4;font-family:'Liberation Sans','Noto Sans CJK SC',sans-serif;font-size:10.4px;transform-origin:50% 50%;transform:translate(-50%,-50%) scale(0.611,1);-webkit-text-stroke:0.3px #3434c4;">2019-11-29</span>
<span class="t" style="left:558.66px;top:566.8px;color:#3434c4;font-family:'Liberation Sans','Noto Sans CJK SC',sans-serif;font-size:10.4px;transform-origin:50% 50%;transform:translate(-50%,-50%) scale(0.593,1);-webkit-text-stroke:0.3px #3434c4;">18:40:24</span>
<span class="t" style="left:714.48px;top:556px;color:#3434c4;font-family:'Liberation Sans','Noto Sans CJK SC',sans-serif;font-size:10.4px;transform-origin:50% 50%;transform:translate(-50%,-50%) scale(0.611,1);-webkit-text-stroke:0.3px #3434c4;">2019-11-29</span>
<span class="t" style="left:713.88px;top:566.8px;color:#3434c4;font-family:'Liberation Sans','Noto Sans CJK SC',sans-serif;font-size:10.4px;transform-origin:50% 50%;transform:translate(-50%,-50%) scale(0.593,1);-webkit-text-stroke:0.3px #3434c4;">18:40:36</span>
<span class="t" style="left:37.2px;top:506.7px;color:#111;font-family:'Liberation Sans','Noto Sans CJK SC',sans-serif;font-size:10px;transform-origin:50% 50%;transform:translate(-50%,-50%) scale(0.700,0.98);writing-mode:vertical-rl;text-orientation:mixed;-webkit-text-stroke:.3px #111;">温度(℃)</span>
<span class="t" style="left:62.9px;top:596.8px;color:#26282c;font-family:'Liberation Sans','Noto Sans CJK SC',sans-serif;font-size:10.4px;transform-origin:100% 50%;transform:translate(-100%,-50%) scale(0.640,1);-webkit-text-stroke:0.3px #26282c;">3200.0</span>
<span class="t" style="left:62.9px;top:662px;color:#26282c;font-family:'Liberation Sans','Noto Sans CJK SC',sans-serif;font-size:10.4px;transform-origin:100% 50%;transform:translate(-100%,-50%) scale(0.640,1);-webkit-text-stroke:0.3px #26282c;">2552.0</span>
<span class="t" style="left:62.9px;top:727.4px;color:#26282c;font-family:'Liberation Sans','Noto Sans CJK SC',sans-serif;font-size:10.4px;transform-origin:100% 50%;transform:translate(-100%,-50%) scale(0.640,1);-webkit-text-stroke:0.3px #26282c;">1904.0</span>
<span class="t" style="left:62.9px;top:792.8px;color:#26282c;font-family:'Liberation Sans','Noto Sans CJK SC',sans-serif;font-size:10.4px;transform-origin:100% 50%;transform:translate(-100%,-50%) scale(0.640,1);-webkit-text-stroke:0.3px #26282c;">1256.0</span>
<span class="t" style="left:62.9px;top:858.2px;color:#26282c;font-family:'Liberation Sans','Noto Sans CJK SC',sans-serif;font-size:10.4px;transform-origin:100% 50%;transform:translate(-100%,-50%) scale(0.640,1);-webkit-text-stroke:0.3px #26282c;">608.0</span>
<span class="t" style="left:62.9px;top:923.6px;color:#26282c;font-family:'Liberation Sans','Noto Sans CJK SC',sans-serif;font-size:10.4px;transform-origin:100% 50%;transform:translate(-100%,-50%) scale(0.640,1);-webkit-text-stroke:0.3px #26282c;">-40.0</span>
<span class="t" style="left:71.5px;top:941.9px;color:#3434c4;font-family:'Liberation Sans','Noto Sans CJK SC',sans-serif;font-size:10.4px;transform-origin:50% 50%;transform:translate(-50%,-50%) scale(0.554,1);-webkit-text-stroke:0.3px #3434c4;">0.0</span>
<span class="t" style="left:149.08px;top:941.9px;color:#3434c4;font-family:'Liberation Sans','Noto Sans CJK SC',sans-serif;font-size:10.4px;transform-origin:50% 50%;transform:translate(-50%,-50%) scale(0.554,1);-webkit-text-stroke:0.3px #3434c4;">5.0</span>
<span class="t" style="left:226.66px;top:941.9px;color:#3434c4;font-family:'Liberation Sans','Noto Sans CJK SC',sans-serif;font-size:10.4px;transform-origin:50% 50%;transform:translate(-50%,-50%) scale(0.563,1);-webkit-text-stroke:0.3px #3434c4;">10.0</span>
<span class="t" style="left:304.24px;top:941.9px;color:#3434c4;font-family:'Liberation Sans','Noto Sans CJK SC',sans-serif;font-size:10.4px;transform-origin:50% 50%;transform:translate(-50%,-50%) scale(0.563,1);-webkit-text-stroke:0.3px #3434c4;">15.0</span>
<span class="t" style="left:381.82px;top:941.9px;color:#3434c4;font-family:'Liberation Sans','Noto Sans CJK SC',sans-serif;font-size:10.4px;transform-origin:50% 50%;transform:translate(-50%,-50%) scale(0.563,1);-webkit-text-stroke:0.3px #3434c4;">20.0</span>
<span class="t" style="left:459.4px;top:941.9px;color:#3434c4;font-family:'Liberation Sans','Noto Sans CJK SC',sans-serif;font-size:10.4px;transform-origin:50% 50%;transform:translate(-50%,-50%) scale(0.563,1);-webkit-text-stroke:0.3px #3434c4;">25.0</span>
<span class="t" style="left:536.98px;top:941.9px;color:#3434c4;font-family:'Liberation Sans','Noto Sans CJK SC',sans-serif;font-size:10.4px;transform-origin:50% 50%;transform:translate(-50%,-50%) scale(0.563,1);-webkit-text-stroke:0.3px #3434c4;">30.0</span>
<span class="t" style="left:614.56px;top:941.9px;color:#3434c4;font-family:'Liberation Sans','Noto Sans CJK SC',sans-serif;font-size:10.4px;transform-origin:50% 50%;transform:translate(-50%,-50%) scale(0.563,1);-webkit-text-stroke:0.3px #3434c4;">35.0</span>
<span class="t" style="left:692.14px;top:941.9px;color:#3434c4;font-family:'Liberation Sans','Noto Sans CJK SC',sans-serif;font-size:10.4px;transform-origin:50% 50%;transform:translate(-50%,-50%) scale(0.563,1);-webkit-text-stroke:0.3px #3434c4;">40.0</span>
<span class="t" style="left:769.72px;top:941.9px;color:#3434c4;font-family:'Liberation Sans','Noto Sans CJK SC',sans-serif;font-size:10.4px;transform-origin:50% 50%;transform:translate(-50%,-50%) scale(0.563,1);-webkit-text-stroke:0.3px #3434c4;">45.0</span>
<span class="t" style="left:847.3px;top:941.9px;color:#3434c4;font-family:'Liberation Sans','Noto Sans CJK SC',sans-serif;font-size:10.4px;transform-origin:50% 50%;transform:translate(-50%,-50%) scale(0.563,1);-webkit-text-stroke:0.3px #3434c4;">50.0</span>
<span class="t" style="left:464px;top:959.9px;color:#1c1c1c;font-family:'Liberation Sans','Noto Sans CJK SC',sans-serif;font-size:10px;transform-origin:50% 50%;transform:translate(-50%,-50%) scale(0.685,1);-webkit-text-stroke:0.3px #1c1c1c;">时间(ms)</span>
<span class="t" style="left:36.9px;top:764.9px;color:#111;font-family:'Liberation Sans','Noto Sans CJK SC',sans-serif;font-size:10px;transform-origin:50% 50%;transform:translate(-50%,-50%) scale(0.700,1);writing-mode:vertical-rl;text-orientation:mixed;-webkit-text-stroke:.3px #111;">载荷(N)</span>
<span class="t" style="left:885.2px;top:411.5px;color:#dfe8fb;font-family:'Liberation Sans','Noto Sans CJK SC',sans-serif;font-size:10px;transform-origin:0 50%;transform:translate(0,-50%) scale(0.615,1);-webkit-text-stroke:0.3px #dfe8fb;">参数设置</span>
<span class="t" style="left:894.6px;top:430.72px;color:#0c0c0c;font-family:'Liberation Sans','Noto Sans CJK SC',sans-serif;font-size:10.4px;font-weight:bold;transform-origin:0 50%;transform:translate(0,-50%) scale(0.626,1);-webkit-text-stroke:0.3px #0c0c0c;">通用参数</span>
<span class="t" style="left:894.8px;top:445.24px;color:#181818;font-family:'Liberation Sans','Noto Sans CJK SC',sans-serif;font-size:10.2px;transform-origin:0 50%;transform:translate(0,-50%) scale(0.613,1);-webkit-text-stroke:0.3px #181818;">文件名称</span>
<span class="t" style="left:930.4px;top:445.24px;color:#181818;font-family:'Liberation Sans','Noto Sans CJK SC',sans-serif;font-size:10.2px;transform-origin:0 50%;transform:translate(0,-50%) scale(0.610,1);-webkit-text-stroke:0.3px #181818;">测试文件1</span>
<span class="t" style="left:894.8px;top:459.86px;color:#181818;font-family:'Liberation Sans','Noto Sans CJK SC',sans-serif;font-size:10.2px;transform-origin:0 50%;transform:translate(0,-50%) scale(0.613,1);-webkit-text-stroke:0.3px #181818;">测试模式</span>
<span class="t" style="left:930.4px;top:459.86px;color:#181818;font-family:'Liberation Sans','Noto Sans CJK SC',sans-serif;font-size:10.2px;transform-origin:0 50%;transform:translate(0,-50%) scale(0.610,1);-webkit-text-stroke:0.3px #181818;">模拟高度</span>
<span class="t" style="left:894.8px;top:474.48px;color:#181818;font-family:'Liberation Sans','Noto Sans CJK SC',sans-serif;font-size:10.2px;transform-origin:0 50%;transform:translate(0,-50%) scale(0.613,1);-webkit-text-stroke:0.3px #181818;">试样类型</span>
<span class="t" style="left:930.4px;top:474.48px;color:#181818;font-family:'Liberation Sans','Noto Sans CJK SC',sans-serif;font-size:10.2px;transform-origin:0 50%;transform:translate(0,-50%) scale(0.610,1);-webkit-text-stroke:0.3px #181818;">默认</span>
<span class="t" style="left:894.8px;top:489.1px;color:#181818;font-family:'Liberation Sans','Noto Sans CJK SC',sans-serif;font-size:10.2px;transform-origin:0 50%;transform:translate(0,-50%) scale(0.613,1);-webkit-text-stroke:0.3px #181818;">测试单位</span>
<span class="t" style="left:930.4px;top:489.1px;color:#181818;font-family:'Liberation Sans','Noto Sans CJK SC',sans-serif;font-size:10.2px;transform-origin:0 50%;transform:translate(0,-50%) scale(0.610,1);-webkit-text-stroke:0.3px #181818;">国际单位制</span>
<span class="t" style="left:894.8px;top:503.72px;color:#181818;font-family:'Liberation Sans','Noto Sans CJK SC',sans-serif;font-size:10.2px;transform-origin:0 50%;transform:translate(0,-50%) scale(0.613,1);-webkit-text-stroke:0.3px #181818;">测试次数</span>
<span class="t" style="left:930.4px;top:503.41px;color:#181818;font-family:'Liberation Serif','Noto Serif CJK SC',serif;font-size:10.2px;transform-origin:0 50%;transform:translate(0,-50%) scale(0.660,1);-webkit-text-stroke:0.3px #181818;">5</span>
<span class="t" style="left:894.8px;top:518.34px;color:#181818;font-family:'Liberation Sans','Noto Sans CJK SC',sans-serif;font-size:10.2px;transform-origin:0 50%;transform:translate(0,-50%) scale(0.613,1);-webkit-text-stroke:0.3px #181818;">模拟高度</span>
<span class="t" style="left:930.4px;top:518.03px;color:#181818;font-family:'Liberation Serif','Noto Serif CJK SC',serif;font-size:10.2px;transform-origin:0 50%;transform:translate(0,-50%) scale(0.660,1);-webkit-text-stroke:0.3px #181818;">0.15</span>
<span class="t" style="left:980.6px;top:518.23px;color:#181818;font-family:'Liberation Serif','Noto Serif CJK SC',serif;font-size:10px;transform-origin:0 50%;transform:translate(0,-50%) scale(0.620,1);-webkit-text-stroke:0.3px #181818;">m</span>
<span class="t" style="left:894.8px;top:532.96px;color:#181818;font-family:'Liberation Sans','Noto Sans CJK SC',sans-serif;font-size:10.2px;transform-origin:0 50%;transform:translate(0,-50%) scale(0.613,1);-webkit-text-stroke:0.3px #181818;">冲头质量</span>
<span class="t" style="left:930.4px;top:532.65px;color:#181818;font-family:'Liberation Serif','Noto Serif CJK SC',serif;font-size:10.2px;transform-origin:0 50%;transform:translate(0,-50%) scale(0.660,1);-webkit-text-stroke:0.3px #181818;">10</span>
<span class="t" style="left:980.6px;top:532.85px;color:#181818;font-family:'Liberation Serif','Noto Serif CJK SC',serif;font-size:10px;transform-origin:0 50%;transform:translate(0,-50%) scale(0.620,1);-webkit-text-stroke:0.3px #181818;">kg</span>
<span class="t" style="left:894.8px;top:547.58px;color:#181818;font-family:'Liberation Sans','Noto Sans CJK SC',sans-serif;font-size:10.2px;transform-origin:0 50%;transform:translate(0,-50%) scale(0.613,1);-webkit-text-stroke:0.3px #181818;">操作人员</span>
<span class="t" style="left:930.4px;top:547.58px;color:#181818;font-family:'Liberation Sans','Noto Sans CJK SC',sans-serif;font-size:10.2px;transform-origin:0 50%;transform:translate(0,-50%) scale(0.610,1);-webkit-text-stroke:0.3px #181818;">小田</span>
<span class="t" style="left:894.8px;top:562.2px;color:#181818;font-family:'Liberation Sans','Noto Sans CJK SC',sans-serif;font-size:10.2px;transform-origin:0 50%;transform:translate(0,-50%) scale(0.613,1);-webkit-text-stroke:0.3px #181818;">试验日期</span>
<span class="t" style="left:930.4px;top:561.89px;color:#181818;font-family:'Liberation Serif','Noto Serif CJK SC',serif;font-size:10.2px;transform-origin:0 50%;transform:translate(0,-50%) scale(0.660,1);-webkit-text-stroke:0.3px #181818;">2016/4/20</span>
<span class="t" style="left:894.6px;top:576.92px;color:#0c0c0c;font-family:'Liberation Sans','Noto Sans CJK SC',sans-serif;font-size:10.4px;font-weight:bold;transform-origin:0 50%;transform:translate(0,-50%) scale(0.626,1);-webkit-text-stroke:0.3px #0c0c0c;">试样参数</span>
<span class="t" style="left:894.8px;top:591.44px;color:#181818;font-family:'Liberation Sans','Noto Sans CJK SC',sans-serif;font-size:10.2px;transform-origin:0 50%;transform:translate(0,-50%) scale(0.613,1);-webkit-text-stroke:0.3px #181818;">试样长度</span>
<span class="t" style="left:930.4px;top:591.13px;color:#181818;font-family:'Liberation Serif','Noto Serif CJK SC',serif;font-size:10.2px;transform-origin:0 50%;transform:translate(0,-50%) scale(0.660,1);-webkit-text-stroke:0.3px #181818;">100</span>
<span class="t" style="left:980.6px;top:591.33px;color:#181818;font-family:'Liberation Serif','Noto Serif CJK SC',serif;font-size:10px;transform-origin:0 50%;transform:translate(0,-50%) scale(0.620,1);-webkit-text-stroke:0.3px #181818;">mm</span>
<span class="t" style="left:894.8px;top:606.06px;color:#181818;font-family:'Liberation Sans','Noto Sans CJK SC',sans-serif;font-size:10.2px;transform-origin:0 50%;transform:translate(0,-50%) scale(0.613,1);-webkit-text-stroke:0.3px #181818;">试样宽度</span>
<span class="t" style="left:930.4px;top:605.75px;color:#181818;font-family:'Liberation Serif','Noto Serif CJK SC',serif;font-size:10.2px;transform-origin:0 50%;transform:translate(0,-50%) scale(0.660,1);-webkit-text-stroke:0.3px #181818;">25</span>
<span class="t" style="left:980.6px;top:605.95px;color:#181818;font-family:'Liberation Serif','Noto Serif CJK SC',serif;font-size:10px;transform-origin:0 50%;transform:translate(0,-50%) scale(0.620,1);-webkit-text-stroke:0.3px #181818;">mm</span>
<span class="t" style="left:894.8px;top:620.68px;color:#181818;font-family:'Liberation Sans','Noto Sans CJK SC',sans-serif;font-size:10.2px;transform-origin:0 50%;transform:translate(0,-50%) scale(0.613,1);-webkit-text-stroke:0.3px #181818;">试样厚度</span>
<span class="t" style="left:930.4px;top:620.37px;color:#181818;font-family:'Liberation Serif','Noto Serif CJK SC',serif;font-size:10.2px;transform-origin:0 50%;transform:translate(0,-50%) scale(0.660,1);-webkit-text-stroke:0.3px #181818;">1</span>
<span class="t" style="left:980.6px;top:620.57px;color:#181818;font-family:'Liberation Serif','Noto Serif CJK SC',serif;font-size:10px;transform-origin:0 50%;transform:translate(0,-50%) scale(0.620,1);-webkit-text-stroke:0.3px #181818;">mm</span>
<span class="t" style="left:894.8px;top:635.3px;color:#181818;font-family:'Liberation Sans','Noto Sans CJK SC',sans-serif;font-size:10.2px;transform-origin:0 50%;transform:translate(0,-50%) scale(0.613,1);-webkit-text-stroke:0.3px #181818;">样品名称</span>
<span class="t" style="left:930.4px;top:635.5px;color:#181818;font-family:'Liberation Serif','Noto Serif CJK SC',serif;font-size:10.2px;transform-origin:0 50%;transform:translate(0,-50%) scale(0.660,1);-webkit-text-stroke:0.3px #181818;">15-18S钢丝带</span>
<span class="t" style="left:894.8px;top:649.92px;color:#181818;font-family:'Liberation Sans','Noto Sans CJK SC',sans-serif;font-size:10.2px;transform-origin:0 50%;transform:translate(0,-50%) scale(0.613,1);-webkit-text-stroke:0.3px #181818;">样品编号</span>
<span class="t" style="left:894.8px;top:664.54px;color:#181818;font-family:'Liberation Sans','Noto Sans CJK SC',sans-serif;font-size:10.2px;transform-origin:0 50%;transform:translate(0,-50%) scale(0.613,1);-webkit-text-stroke:0.3px #181818;">批　　号</span>
<span class="t" style="left:894.8px;top:679.16px;color:#181818;font-family:'Liberation Sans','Noto Sans CJK SC',sans-serif;font-size:10.2px;transform-origin:0 50%;transform:translate(0,-50%) scale(0.613,1);-webkit-text-stroke:0.3px #181818;">样　　数</span>
<span class="t" style="left:894.6px;top:693.88px;color:#0c0c0c;font-family:'Liberation Sans','Noto Sans CJK SC',sans-serif;font-size:10.4px;font-weight:bold;transform-origin:0 50%;transform:translate(0,-50%) scale(0.626,1);-webkit-text-stroke:0.3px #0c0c0c;">环境参数</span>
<span class="t" style="left:894.8px;top:708.4px;color:#181818;font-family:'Liberation Sans','Noto Sans CJK SC',sans-serif;font-size:10.2px;transform-origin:0 50%;transform:translate(0,-50%) scale(0.613,1);-webkit-text-stroke:0.3px #181818;">温　　度</span>
<span class="t" style="left:930.4px;top:708.09px;color:#181818;font-family:'Liberation Serif','Noto Serif CJK SC',serif;font-size:10.2px;transform-origin:0 50%;transform:translate(0,-50%) scale(0.660,1);-webkit-text-stroke:0.3px #181818;">25</span>
<span class="t" style="left:980.6px;top:708.29px;color:#181818;font-family:'Liberation Serif','Noto Serif CJK SC',serif;font-size:10px;transform-origin:0 50%;transform:translate(0,-50%) scale(0.620,1);-webkit-text-stroke:0.3px #181818;">℃</span>
<span class="t" style="left:894.8px;top:723.02px;color:#181818;font-family:'Liberation Sans','Noto Sans CJK SC',sans-serif;font-size:10.2px;transform-origin:0 50%;transform:translate(0,-50%) scale(0.613,1);-webkit-text-stroke:0.3px #181818;">湿　　度</span>
<span class="t" style="left:930.4px;top:722.71px;color:#181818;font-family:'Liberation Serif','Noto Serif CJK SC',serif;font-size:10.2px;transform-origin:0 50%;transform:translate(0,-50%) scale(0.660,1);-webkit-text-stroke:0.3px #181818;">65</span>
<span class="t" style="left:980.6px;top:722.91px;color:#181818;font-family:'Liberation Serif','Noto Serif CJK SC',serif;font-size:10px;transform-origin:0 50%;transform:translate(0,-50%) scale(0.620,1);-webkit-text-stroke:0.3px #181818;">%</span>
<span class="t" style="left:31.5px;top:980.3px;color:#dfe8fb;font-family:'Liberation Sans','Noto Sans CJK SC',sans-serif;font-size:10px;transform-origin:0 50%;transform:translate(0,-50%) scale(0.613,1);-webkit-text-stroke:0.3px #dfe8fb;">测试结果</span>
<span class="t" style="left:51.35px;top:999.75px;color:#1c1c1c;font-family:'Liberation Sans','Noto Sans CJK SC',sans-serif;font-size:10px;transform-origin:50% 50%;transform:translate(-50%,-50%) scale(0.625,1);-webkit-text-stroke:0.3px #1c1c1c;">序号</span>
<span class="t" style="left:87.5px;top:999.76px;color:#0a0a0a;font-family:'Liberation Sans','Noto Sans CJK SC',sans-serif;font-size:10.2px;font-weight:bold;transform-origin:50% 50%;transform:translate(-50%,-50%) scale(0.650,1);-webkit-text-stroke:0.3px #0a0a0a;">最大载荷</span>
<span class="t" style="left:119.6px;top:999.76px;color:#0a0a0a;font-family:'Liberation Sans','Noto Sans CJK SC',sans-serif;font-size:10.2px;font-weight:bold;transform-origin:50% 50%;transform:translate(-50%,-50%) scale(0.650,1);-webkit-text-stroke:0.3px #0a0a0a;">冲击速度</span>
<span class="t" style="left:51.35px;top:1014.25px;color:#1c1c1c;font-family:'Liberation Sans','Noto Sans CJK SC',sans-serif;font-size:10px;transform-origin:50% 50%;transform:translate(-50%,-50%) scale(0.625,1);-webkit-text-stroke:0.3px #1c1c1c;">单位</span>
<span class="t" style="left:87.5px;top:1013.95px;color:#1c1c1c;font-family:'Liberation Serif','Noto Serif CJK SC',serif;font-size:10px;font-weight:bold;transform-origin:50% 50%;transform:translate(-50%,-50%) scale(0.600,1);-webkit-text-stroke:0.3px #1c1c1c;">N</span>
<span class="t" style="left:119.6px;top:1013.95px;color:#1c1c1c;font-family:'Liberation Serif','Noto Serif CJK SC',serif;font-size:10px;transform-origin:50% 50%;transform:translate(-50%,-50%) scale(0.620,1);-webkit-text-stroke:0.3px #1c1c1c;">m/s</span>
<span class="t" style="left:51.35px;top:1028.3px;color:#1c1c1c;font-family:'Liberation Serif','Noto Serif CJK SC',serif;font-size:10.5px;font-weight:bold;transform-origin:50% 50%;transform:translate(-50%,-50%) scale(0.620,1);-webkit-text-stroke:0.3px #1c1c1c;">1</span>
<span class="t" style="left:87.5px;top:1028.3px;color:#222;font-family:'Liberation Serif','Noto Serif CJK SC',serif;font-size:10px;transform-origin:50% 50%;transform:translate(-50%,-50%) scale(0.677,1);-webkit-text-stroke:0.3px #222;">3131.25</span>
<span class="t" style="left:119.6px;top:1028.3px;color:#2c4a70;font-family:'Liberation Serif','Noto Serif CJK SC',serif;font-size:10px;transform-origin:50% 50%;transform:translate(-50%,-50%) scale(0.714,1);-webkit-text-stroke:0.3px #2c4a70;">1.73</span>
<span class="t" style="left:34px;top:1124.9px;color:#3b2a12;font-family:'Liberation Sans','Noto Sans CJK SC',sans-serif;font-size:10px;transform-origin:0 50%;transform:translate(0,-50%) scale(0.613,1);-webkit-text-stroke:0.3px #3b2a12;">测试结果</span>
<span class="t" style="left:65.6px;top:1124.9px;color:#1c1c1c;font-family:'Liberation Sans','Noto Sans CJK SC',sans-serif;font-size:10px;transform-origin:0 50%;transform:translate(0,-50%) scale(0.617,1);-webkit-text-stroke:0.3px #1c1c1c;">统计值</span>
<span class="t rp" style="left:1030px;top:349.5px;color:#2e2e2e;font-family:'Liberation Mono','Noto Sans CJK SC',monospace;font-size:12.6px;letter-spacing:2.5px;transform-origin:0 50%;transform:translate(0,-50%);-webkit-text-stroke:.42px #2e2e2e;filter:blur(.75px);">文件名称<span style="font-family:'Liberation Mono','Noto Sans CJK SC',monospace;letter-spacing:-0.01px">:</span>测试文件<span style="font-family:'Liberation Mono','Noto Sans CJK SC',monospace;letter-spacing:-0.01px">19</span></span>
<span class="t rp" style="left:1205.5px;top:349.5px;color:#2e2e2e;font-family:'Liberation Mono','Noto Sans CJK SC',monospace;font-size:12.6px;letter-spacing:2.5px;transform-origin:0 50%;transform:translate(0,-50%);-webkit-text-stroke:.42px #2e2e2e;filter:blur(.75px);">测试模式<span style="font-family:'Liberation Mono','Noto Sans CJK SC',monospace;letter-spacing:-0.01px">:</span>模拟高度</span>
<span class="t rp" style="left:1381px;top:349.5px;color:#2e2e2e;font-family:'Liberation Mono','Noto Sans CJK SC',monospace;font-size:12.6px;letter-spacing:2.5px;transform-origin:0 50%;transform:translate(0,-50%);-webkit-text-stroke:.42px #2e2e2e;filter:blur(.75px);">试样类型<span style="font-family:'Liberation Mono','Noto Sans CJK SC',monospace;letter-spacing:-0.01px">:</span>默认</span>
<span class="t rp" style="left:1556.5px;top:349.5px;color:#2e2e2e;font-family:'Liberation Mono','Noto Sans CJK SC',monospace;font-size:12.6px;letter-spacing:2.5px;transform-origin:0 50%;transform:translate(0,-50%);-webkit-text-stroke:.42px #2e2e2e;filter:blur(.75px);">测试单位<span style="font-family:'Liberation Mono','Noto Sans CJK SC',monospace;letter-spacing:-0.01px">:</span>国际单位制</span>
<span class="t rp" style="left:1732px;top:349.5px;color:#2e2e2e;font-family:'Liberation Mono','Noto Sans CJK SC',monospace;font-size:12.6px;letter-spacing:2.5px;transform-origin:0 50%;transform:translate(0,-50%);-webkit-text-stroke:.42px #2e2e2e;filter:blur(.75px);">操作人员<span style="font-family:'Liberation Mono','Noto Sans CJK SC',monospace;letter-spacing:-0.01px">:</span>小蔡</span>
<span class="t rp" style="left:1030px;top:370.07px;color:#2e2e2e;font-family:'Liberation Mono','Noto Sans CJK SC',monospace;font-size:12.6px;letter-spacing:2.5px;transform-origin:0 50%;transform:translate(0,-50%);-webkit-text-stroke:.42px #2e2e2e;filter:blur(.75px);">模拟高度<span style="font-family:'Liberation Mono','Noto Sans CJK SC',monospace;letter-spacing:-0.01px">:20m</span></span>
<span class="t rp" style="left:1205.5px;top:370.07px;color:#2e2e2e;font-family:'Liberation Mono','Noto Sans CJK SC',monospace;font-size:12.6px;letter-spacing:2.5px;transform-origin:0 50%;transform:translate(0,-50%);-webkit-text-stroke:.42px #2e2e2e;filter:blur(.75px);">冲头质量<span style="font-family:'Liberation Mono','Noto Sans CJK SC',monospace;letter-spacing:-0.01px">:2.6kg</span></span>
<span class="t rp" style="left:1381px;top:370.07px;color:#2e2e2e;font-family:'Liberation Mono','Noto Sans CJK SC',monospace;font-size:12.6px;letter-spacing:2.5px;transform-origin:0 50%;transform:translate(0,-50%);-webkit-text-stroke:.42px #2e2e2e;filter:blur(.75px);">温<span style="font-family:'Liberation Mono','Noto Sans CJK SC',monospace;letter-spacing:-0.01px">&nbsp;&nbsp;&nbsp;&nbsp;</span>度<span style="font-family:'Liberation Mono','Noto Sans CJK SC',monospace;letter-spacing:-0.01px">:25</span>℃</span>
<span class="t rp" style="left:1556.5px;top:370.07px;color:#2e2e2e;font-family:'Liberation Mono','Noto Sans CJK SC',monospace;font-size:12.6px;letter-spacing:2.5px;transform-origin:0 50%;transform:translate(0,-50%);-webkit-text-stroke:.42px #2e2e2e;filter:blur(.75px);">湿<span style="font-family:'Liberation Mono','Noto Sans CJK SC',monospace;letter-spacing:-0.01px">&nbsp;&nbsp;&nbsp;&nbsp;</span>度<span style="font-family:'Liberation Mono','Noto Sans CJK SC',monospace;letter-spacing:-0.01px">:65%</span></span>
<span class="t rp" style="left:1732px;top:370.07px;color:#2e2e2e;font-family:'Liberation Mono','Noto Sans CJK SC',monospace;font-size:12.6px;letter-spacing:2.5px;transform-origin:0 50%;transform:translate(0,-50%);-webkit-text-stroke:.42px #2e2e2e;filter:blur(.75px);">试验日期<span style="font-family:'Liberation Mono','Noto Sans CJK SC',monospace;letter-spacing:-0.01px">:2016/9/1</span></span>
<span class="t rp" style="left:1030px;top:390.65px;color:#2e2e2e;font-family:'Liberation Mono','Noto Sans CJK SC',monospace;font-size:12.6px;letter-spacing:2.5px;transform-origin:0 50%;transform:translate(0,-50%);-webkit-text-stroke:.42px #2e2e2e;filter:blur(.75px);">测试次数<span style="font-family:'Liberation Mono','Noto Sans CJK SC',monospace;letter-spacing:-0.01px">:50</span></span>
<span class="t rp" style="left:1205.5px;top:390.65px;color:#2e2e2e;font-family:'Liberation Mono','Noto Sans CJK SC',monospace;font-size:12.6px;letter-spacing:2.5px;transform-origin:0 50%;transform:translate(0,-50%);-webkit-text-stroke:.42px #2e2e2e;filter:blur(.75px);">样品名称<span style="font-family:'Liberation Mono','Noto Sans CJK SC',monospace;letter-spacing:-0.01px">:1000TLCP</span>带</span>
<span class="t rp" style="left:1381px;top:390.65px;color:#2e2e2e;font-family:'Liberation Mono','Noto Sans CJK SC',monospace;font-size:12.6px;letter-spacing:2.5px;transform-origin:0 50%;transform:translate(0,-50%);-webkit-text-stroke:.42px #2e2e2e;filter:blur(.75px);">样品编号<span style="font-family:'Liberation Mono','Noto Sans CJK SC',monospace;letter-spacing:-0.01px">:1</span></span>
<span class="t rp" style="left:1556.5px;top:390.65px;color:#2e2e2e;font-family:'Liberation Mono','Noto Sans CJK SC',monospace;font-size:12.6px;letter-spacing:2.5px;transform-origin:0 50%;transform:translate(0,-50%);-webkit-text-stroke:.42px #2e2e2e;filter:blur(.75px);">批<span style="font-family:'Liberation Mono','Noto Sans CJK SC',monospace;letter-spacing:-0.01px">&nbsp;&nbsp;&nbsp;&nbsp;</span>号<span style="font-family:'Liberation Mono','Noto Sans CJK SC',monospace;letter-spacing:-0.01px">:1</span></span>
<span class="t rp" style="left:1732px;top:390.65px;color:#2e2e2e;font-family:'Liberation Mono','Noto Sans CJK SC',monospace;font-size:12.6px;letter-spacing:2.5px;transform-origin:0 50%;transform:translate(0,-50%);-webkit-text-stroke:.42px #2e2e2e;filter:blur(.75px);">样<span style="font-family:'Liberation Mono','Noto Sans CJK SC',monospace;letter-spacing:-0.01px">&nbsp;&nbsp;&nbsp;&nbsp;</span>数<span style="font-family:'Liberation Mono','Noto Sans CJK SC',monospace;letter-spacing:-0.01px">:3</span></span>
<span class="t rp" style="left:1030px;top:411.22px;color:#2e2e2e;font-family:'Liberation Mono','Noto Sans CJK SC',monospace;font-size:12.6px;letter-spacing:2.5px;transform-origin:0 50%;transform:translate(0,-50%);-webkit-text-stroke:.42px #2e2e2e;filter:blur(.75px);">试样长度<span style="font-family:'Liberation Mono','Noto Sans CJK SC',monospace;letter-spacing:-0.01px">:100mm</span></span>
<span class="t rp" style="left:1205.5px;top:411.22px;color:#2e2e2e;font-family:'Liberation Mono','Noto Sans CJK SC',monospace;font-size:12.6px;letter-spacing:2.5px;transform-origin:0 50%;transform:translate(0,-50%);-webkit-text-stroke:.42px #2e2e2e;filter:blur(.75px);">试样宽度<span style="font-family:'Liberation Mono','Noto Sans CJK SC',monospace;letter-spacing:-0.01px">:50mm</span></span>
<span class="t rp" style="left:1381px;top:411.22px;color:#2e2e2e;font-family:'Liberation Mono','Noto Sans CJK SC',monospace;font-size:12.6px;letter-spacing:2.5px;transform-origin:0 50%;transform:translate(0,-50%);-webkit-text-stroke:.42px #2e2e2e;filter:blur(.75px);">试样厚度<span style="font-family:'Liberation Mono','Noto Sans CJK SC',monospace;letter-spacing:-0.01px">:2mm</span></span>
<span class="t rp" style="left:1072.28px;top:431.6px;color:#2e2e2e;font-family:'Liberation Mono','Noto Sans CJK SC',monospace;font-size:12.6px;letter-spacing:2.5px;transform-origin:50% 50%;transform:translate(-50%,-50%);-webkit-text-stroke:.42px #2e2e2e;filter:blur(.75px);">序号</span>
<span class="t rp" style="left:1160.03px;top:431.6px;color:#2e2e2e;font-family:'Liberation Mono','Noto Sans CJK SC',monospace;font-size:12.6px;letter-spacing:2.5px;transform-origin:50% 50%;transform:translate(-50%,-50%);-webkit-text-stroke:.42px #2e2e2e;filter:blur(.75px);">最大载荷</span>
<span class="t rp" style="left:1247.78px;top:431.6px;color:#2e2e2e;font-family:'Liberation Mono','Noto Sans CJK SC',monospace;font-size:12.6px;letter-spacing:2.5px;transform-origin:50% 50%;transform:translate(-50%,-50%);-webkit-text-stroke:.42px #2e2e2e;filter:blur(.75px);">冲击速度</span>
<span class="t rp" style="left:1335.53px;top:431.6px;color:#2e2e2e;font-family:'Liberation Mono','Noto Sans CJK SC',monospace;font-size:12.6px;letter-spacing:2.5px;transform-origin:50% 50%;transform:translate(-50%,-50%);-webkit-text-stroke:.42px #2e2e2e;filter:blur(.75px);">初始能量</span>
<span class="t rp" style="left:1423.28px;top:431.6px;color:#2e2e2e;font-family:'Liberation Mono','Noto Sans CJK SC',monospace;font-size:12.6px;letter-spacing:2.5px;transform-origin:50% 50%;transform:translate(-50%,-50%);-webkit-text-stroke:.42px #2e2e2e;filter:blur(.75px);">冒触压力</span>
<span class="t rp" style="left:1072.28px;top:452.17px;color:#2e2e2e;font-family:'Liberation Mono','Noto Sans CJK SC',monospace;font-size:12.6px;letter-spacing:2.5px;transform-origin:50% 50%;transform:translate(-50%,-50%);-webkit-text-stroke:.42px #2e2e2e;filter:blur(.75px);">单位</span>
<span class="t rp" style="left:1158.83px;top:452.34px;color:#2e2e2e;font-family:'Liberation Mono','Noto Sans CJK SC',monospace;font-size:12.6px;letter-spacing:2.5px;transform-origin:50% 50%;transform:translate(-50%,-50%);-webkit-text-stroke:.42px #2e2e2e;filter:blur(.75px);"><span style="font-family:'Liberation Mono','Noto Sans CJK SC',monospace;letter-spacing:-0.01px">N</span></span>
<span class="t rp" style="left:1246.58px;top:452.34px;color:#2e2e2e;font-family:'Liberation Mono','Noto Sans CJK SC',monospace;font-size:12.6px;letter-spacing:2.5px;transform-origin:50% 50%;transform:translate(-50%,-50%);-webkit-text-stroke:.42px #2e2e2e;filter:blur(.75px);"><span style="font-family:'Liberation Mono','Noto Sans CJK SC',monospace;letter-spacing:-0.01px">m/s</span></span>
<span class="t rp" style="left:1334.33px;top:452.34px;color:#2e2e2e;font-family:'Liberation Mono','Noto Sans CJK SC',monospace;font-size:12.6px;letter-spacing:2.5px;transform-origin:50% 50%;transform:translate(-50%,-50%);-webkit-text-stroke:.42px #2e2e2e;filter:blur(.75px);"><span style="font-family:'Liberation Mono','Noto Sans CJK SC',monospace;letter-spacing:-0.01px">J</span></span>
<span class="t rp" style="left:1422.08px;top:452.34px;color:#2e2e2e;font-family:'Liberation Mono','Noto Sans CJK SC',monospace;font-size:12.6px;letter-spacing:2.5px;transform-origin:50% 50%;transform:translate(-50%,-50%);-webkit-text-stroke:.42px #2e2e2e;filter:blur(.75px);"><span style="font-family:'Liberation Mono','Noto Sans CJK SC',monospace;letter-spacing:-0.01px">N</span></span>
<span class="t rp" style="left:1071.08px;top:472.92px;color:#2e2e2e;font-family:'Liberation Mono','Noto Sans CJK SC',monospace;font-size:12.6px;letter-spacing:2.5px;transform-origin:50% 50%;transform:translate(-50%,-50%);-webkit-text-stroke:.42px #2e2e2e;filter:blur(.75px);"><span style="font-family:'Liberation Mono','Noto Sans CJK SC',monospace;letter-spacing:-0.01px">1</span></span>
<span class="t rp" style="left:1158.83px;top:472.92px;color:#2e2e2e;font-family:'Liberation Mono','Noto Sans CJK SC',monospace;font-size:12.6px;letter-spacing:2.5px;transform-origin:50% 50%;transform:translate(-50%,-50%);-webkit-text-stroke:.42px #2e2e2e;filter:blur(.75px);"><span style="font-family:'Liberation Mono','Noto Sans CJK SC',monospace;letter-spacing:-0.01px">8678.64</span></span>
<span class="t rp" style="left:1246.58px;top:472.92px;color:#2e2e2e;font-family:'Liberation Mono','Noto Sans CJK SC',monospace;font-size:12.6px;letter-spacing:2.5px;transform-origin:50% 50%;transform:translate(-50%,-50%);-webkit-text-stroke:.42px #2e2e2e;filter:blur(.75px);"><span style="font-family:'Liberation Mono','Noto Sans CJK SC',monospace;letter-spacing:-0.01px">14.96</span></span>
<span class="t rp" style="left:1334.33px;top:472.92px;color:#2e2e2e;font-family:'Liberation Mono','Noto Sans CJK SC',monospace;font-size:12.6px;letter-spacing:2.5px;transform-origin:50% 50%;transform:translate(-50%,-50%);-webkit-text-stroke:.42px #2e2e2e;filter:blur(.75px);"><span style="font-family:'Liberation Mono','Noto Sans CJK SC',monospace;letter-spacing:-0.01px">291.1</span></span>
<span class="t rp" style="left:1422.08px;top:472.92px;color:#2e2e2e;font-family:'Liberation Mono','Noto Sans CJK SC',monospace;font-size:12.6px;letter-spacing:2.5px;transform-origin:50% 50%;transform:translate(-50%,-50%);-webkit-text-stroke:.42px #2e2e2e;filter:blur(.75px);"><span style="font-family:'Liberation Mono','Noto Sans CJK SC',monospace;letter-spacing:-0.01px">13439.47</span></span>
<span class="t rp" style="left:1071.08px;top:493.49px;color:#2e2e2e;font-family:'Liberation Mono','Noto Sans CJK SC',monospace;font-size:12.6px;letter-spacing:2.5px;transform-origin:50% 50%;transform:translate(-50%,-50%);-webkit-text-stroke:.42px #2e2e2e;filter:blur(.75px);"><span style="font-family:'Liberation Mono','Noto Sans CJK SC',monospace;letter-spacing:-0.01px">2</span></span>
<span class="t rp" style="left:1158.83px;top:493.49px;color:#2e2e2e;font-family:'Liberation Mono','Noto Sans CJK SC',monospace;font-size:12.6px;letter-spacing:2.5px;transform-origin:50% 50%;transform:translate(-50%,-50%);-webkit-text-stroke:.42px #2e2e2e;filter:blur(.75px);"><span style="font-family:'Liberation Mono','Noto Sans CJK SC',monospace;letter-spacing:-0.01px">8704.7</span></span>
<span class="t rp" style="left:1246.58px;top:493.49px;color:#2e2e2e;font-family:'Liberation Mono','Noto Sans CJK SC',monospace;font-size:12.6px;letter-spacing:2.5px;transform-origin:50% 50%;transform:translate(-50%,-50%);-webkit-text-stroke:.42px #2e2e2e;filter:blur(.75px);"><span style="font-family:'Liberation Mono','Noto Sans CJK SC',monospace;letter-spacing:-0.01px">14.88</span></span>
<span class="t rp" style="left:1334.33px;top:493.49px;color:#2e2e2e;font-family:'Liberation Mono','Noto Sans CJK SC',monospace;font-size:12.6px;letter-spacing:2.5px;transform-origin:50% 50%;transform:translate(-50%,-50%);-webkit-text-stroke:.42px #2e2e2e;filter:blur(.75px);"><span style="font-family:'Liberation Mono','Noto Sans CJK SC',monospace;letter-spacing:-0.01px">287.72</span></span>
<span class="t rp" style="left:1422.08px;top:493.49px;color:#2e2e2e;font-family:'Liberation Mono','Noto Sans CJK SC',monospace;font-size:12.6px;letter-spacing:2.5px;transform-origin:50% 50%;transform:translate(-50%,-50%);-webkit-text-stroke:.42px #2e2e2e;filter:blur(.75px);"><span style="font-family:'Liberation Mono','Noto Sans CJK SC',monospace;letter-spacing:-0.01px">13339.45</span></span>
<span class="t rp" style="left:1071.08px;top:514.07px;color:#2e2e2e;font-family:'Liberation Mono','Noto Sans CJK SC',monospace;font-size:12.6px;letter-spacing:2.5px;transform-origin:50% 50%;transform:translate(-50%,-50%);-webkit-text-stroke:.42px #2e2e2e;filter:blur(.75px);"><span style="font-family:'Liberation Mono','Noto Sans CJK SC',monospace;letter-spacing:-0.01px">3</span></span>
<span class="t rp" style="left:1158.83px;top:514.07px;color:#2e2e2e;font-family:'Liberation Mono','Noto Sans CJK SC',monospace;font-size:12.6px;letter-spacing:2.5px;transform-origin:50% 50%;transform:translate(-50%,-50%);-webkit-text-stroke:.42px #2e2e2e;filter:blur(.75px);"><span style="font-family:'Liberation Mono','Noto Sans CJK SC',monospace;letter-spacing:-0.01px">9128.61</span></span>
<span class="t rp" style="left:1246.58px;top:514.07px;color:#2e2e2e;font-family:'Liberation Mono','Noto Sans CJK SC',monospace;font-size:12.6px;letter-spacing:2.5px;transform-origin:50% 50%;transform:translate(-50%,-50%);-webkit-text-stroke:.42px #2e2e2e;filter:blur(.75px);"><span style="font-family:'Liberation Mono','Noto Sans CJK SC',monospace;letter-spacing:-0.01px">14.96</span></span>
<span class="t rp" style="left:1334.33px;top:514.07px;color:#2e2e2e;font-family:'Liberation Mono','Noto Sans CJK SC',monospace;font-size:12.6px;letter-spacing:2.5px;transform-origin:50% 50%;transform:translate(-50%,-50%);-webkit-text-stroke:.42px #2e2e2e;filter:blur(.75px);"><span style="font-family:'Liberation Mono','Noto Sans CJK SC',monospace;letter-spacing:-0.01px">291.1</span></span>
<span class="t rp" style="left:1422.08px;top:514.07px;color:#2e2e2e;font-family:'Liberation Mono','Noto Sans CJK SC',monospace;font-size:12.6px;letter-spacing:2.5px;transform-origin:50% 50%;transform:translate(-50%,-50%);-webkit-text-stroke:.42px #2e2e2e;filter:blur(.75px);"><span style="font-family:'Liberation Mono','Noto Sans CJK SC',monospace;letter-spacing:-0.01px">13398.94</span></span>
<span class="t rp" style="left:1072.28px;top:534.47px;color:#2e2e2e;font-family:'Liberation Mono','Noto Sans CJK SC',monospace;font-size:12.6px;letter-spacing:2.5px;transform-origin:50% 50%;transform:translate(-50%,-50%);-webkit-text-stroke:.42px #2e2e2e;filter:blur(.75px);">最大值</span>
<span class="t rp" style="left:1158.83px;top:534.64px;color:#2e2e2e;font-family:'Liberation Mono','Noto Sans CJK SC',monospace;font-size:12.6px;letter-spacing:2.5px;transform-origin:50% 50%;transform:translate(-50%,-50%);-webkit-text-stroke:.42px #2e2e2e;filter:blur(.75px);"><span style="font-family:'Liberation Mono','Noto Sans CJK SC',monospace;letter-spacing:-0.01px">9128.61</span></span>
<span class="t rp" style="left:1246.58px;top:534.64px;color:#2e2e2e;font-family:'Liberation Mono','Noto Sans CJK SC',monospace;font-size:12.6px;letter-spacing:2.5px;transform-origin:50% 50%;transform:translate(-50%,-50%);-webkit-text-stroke:.42px #2e2e2e;filter:blur(.75px);"><span style="font-family:'Liberation Mono','Noto Sans CJK SC',monospace;letter-spacing:-0.01px">14.96</span></span>
<span class="t rp" style="left:1334.33px;top:534.64px;color:#2e2e2e;font-family:'Liberation Mono','Noto Sans CJK SC',monospace;font-size:12.6px;letter-spacing:2.5px;transform-origin:50% 50%;transform:translate(-50%,-50%);-webkit-text-stroke:.42px #2e2e2e;filter:blur(.75px);"><span style="font-family:'Liberation Mono','Noto Sans CJK SC',monospace;letter-spacing:-0.01px">291.1</span></span>
<span class="t rp" style="left:1422.08px;top:534.64px;color:#2e2e2e;font-family:'Liberation Mono','Noto Sans CJK SC',monospace;font-size:12.6px;letter-spacing:2.5px;transform-origin:50% 50%;transform:translate(-50%,-50%);-webkit-text-stroke:.42px #2e2e2e;filter:blur(.75px);"><span style="font-family:'Liberation Mono','Noto Sans CJK SC',monospace;letter-spacing:-0.01px">13439.47</span></span>
<span class="t rp" style="left:1072.28px;top:555.05px;color:#2e2e2e;font-family:'Liberation Mono','Noto Sans CJK SC',monospace;font-size:12.6px;letter-spacing:2.5px;transform-origin:50% 50%;transform:translate(-50%,-50%);-webkit-text-stroke:.42px #2e2e2e;filter:blur(.75px);">最小值</span>
<span class="t rp" style="left:1158.83px;top:555.22px;color:#2e2e2e;font-family:'Liberation Mono','Noto Sans CJK SC',monospace;font-size:12.6px;letter-spacing:2.5px;transform-origin:50% 50%;transform:translate(-50%,-50%);-webkit-text-stroke:.42px #2e2e2e;filter:blur(.75px);"><span style="font-family:'Liberation Mono','Noto Sans CJK SC',monospace;letter-spacing:-0.01px">8678.64</span></span>
<span class="t rp" style="left:1246.58px;top:555.22px;color:#2e2e2e;font-family:'Liberation Mono','Noto Sans CJK SC',monospace;font-size:12.6px;letter-spacing:2.5px;transform-origin:50% 50%;transform:translate(-50%,-50%);-webkit-text-stroke:.42px #2e2e2e;filter:blur(.75px);"><span style="font-family:'Liberation Mono','Noto Sans CJK SC',monospace;letter-spacing:-0.01px">14.88</span></span>
<span class="t rp" style="left:1334.33px;top:555.22px;color:#2e2e2e;font-family:'Liberation Mono','Noto Sans CJK SC',monospace;font-size:12.6px;letter-spacing:2.5px;transform-origin:50% 50%;transform:translate(-50%,-50%);-webkit-text-stroke:.42px #2e2e2e;filter:blur(.75px);"><span style="font-family:'Liberation Mono','Noto Sans CJK SC',monospace;letter-spacing:-0.01px">287.72</span></span>
<span class="t rp" style="left:1422.08px;top:555.22px;color:#2e2e2e;font-family:'Liberation Mono','Noto Sans CJK SC',monospace;font-size:12.6px;letter-spacing:2.5px;transform-origin:50% 50%;transform:translate(-50%,-50%);-webkit-text-stroke:.42px #2e2e2e;filter:blur(.75px);"><span style="font-family:'Liberation Mono','Noto Sans CJK SC',monospace;letter-spacing:-0.01px">13339.45</span></span>
<span class="t rp" style="left:1072.28px;top:575.62px;color:#2e2e2e;font-family:'Liberation Mono','Noto Sans CJK SC',monospace;font-size:12.6px;letter-spacing:2.5px;transform-origin:50% 50%;transform:translate(-50%,-50%);-webkit-text-stroke:.42px #2e2e2e;filter:blur(.75px);">平均值</span>
<span class="t rp" style="left:1158.83px;top:575.79px;color:#2e2e2e;font-family:'Liberation Mono','Noto Sans CJK SC',monospace;font-size:12.6px;letter-spacing:2.5px;transform-origin:50% 50%;transform:translate(-50%,-50%);-webkit-text-stroke:.42px #2e2e2e;filter:blur(.75px);"><span style="font-family:'Liberation Mono','Noto Sans CJK SC',monospace;letter-spacing:-0.01px">8836.32</span></span>
<span class="t rp" style="left:1246.58px;top:575.79px;color:#2e2e2e;font-family:'Liberation Mono','Noto Sans CJK SC',monospace;font-size:12.6px;letter-spacing:2.5px;transform-origin:50% 50%;transform:translate(-50%,-50%);-webkit-text-stroke:.42px #2e2e2e;filter:blur(.75px);"><span style="font-family:'Liberation Mono','Noto Sans CJK SC',monospace;letter-spacing:-0.01px">14.93</span></span>
<span class="t rp" style="left:1334.33px;top:575.79px;color:#2e2e2e;font-family:'Liberation Mono','Noto Sans CJK SC',monospace;font-size:12.6px;letter-spacing:2.5px;transform-origin:50% 50%;transform:translate(-50%,-50%);-webkit-text-stroke:.42px #2e2e2e;filter:blur(.75px);"><span style="font-family:'Liberation Mono','Noto Sans CJK SC',monospace;letter-spacing:-0.01px">289.97</span></span>
<span class="t rp" style="left:1422.08px;top:575.79px;color:#2e2e2e;font-family:'Liberation Mono','Noto Sans CJK SC',monospace;font-size:12.6px;letter-spacing:2.5px;transform-origin:50% 50%;transform:translate(-50%,-50%);-webkit-text-stroke:.42px #2e2e2e;filter:blur(.75px);"><span style="font-family:'Liberation Mono','Noto Sans CJK SC',monospace;letter-spacing:-0.01px">13392.62</span></span>
<span class="t rp" style="left:1072.28px;top:596.2px;color:#2e2e2e;font-family:'Liberation Mono','Noto Sans CJK SC',monospace;font-size:12.6px;letter-spacing:2.5px;transform-origin:50% 50%;transform:translate(-50%,-50%);-webkit-text-stroke:.42px #2e2e2e;filter:blur(.75px);"><span style="font-family:'Liberation Mono','Noto Sans CJK SC',monospace;letter-spacing:-0.01px">CV</span>值<span style="font-family:'Liberation Mono','Noto Sans CJK SC',monospace;letter-spacing:-0.01px">(%)</span></span>
<span class="t rp" style="left:1158.83px;top:596.37px;color:#2e2e2e;font-family:'Liberation Mono','Noto Sans CJK SC',monospace;font-size:12.6px;letter-spacing:2.5px;transform-origin:50% 50%;transform:translate(-50%,-50%);-webkit-text-stroke:.42px #2e2e2e;filter:blur(.75px);"><span style="font-family:'Liberation Mono','Noto Sans CJK SC',monospace;letter-spacing:-0.01px">2.87</span></span>
<span class="t rp" style="left:1246.58px;top:596.37px;color:#2e2e2e;font-family:'Liberation Mono','Noto Sans CJK SC',monospace;font-size:12.6px;letter-spacing:2.5px;transform-origin:50% 50%;transform:translate(-50%,-50%);-webkit-text-stroke:.42px #2e2e2e;filter:blur(.75px);"><span style="font-family:'Liberation Mono','Noto Sans CJK SC',monospace;letter-spacing:-0.01px">0.31</span></span>
<span class="t rp" style="left:1334.33px;top:596.37px;color:#2e2e2e;font-family:'Liberation Mono','Noto Sans CJK SC',monospace;font-size:12.6px;letter-spacing:2.5px;transform-origin:50% 50%;transform:translate(-50%,-50%);-webkit-text-stroke:.42px #2e2e2e;filter:blur(.75px);"><span style="font-family:'Liberation Mono','Noto Sans CJK SC',monospace;letter-spacing:-0.01px">0.67</span></span>
<span class="t rp" style="left:1422.08px;top:596.37px;color:#2e2e2e;font-family:'Liberation Mono','Noto Sans CJK SC',monospace;font-size:12.6px;letter-spacing:2.5px;transform-origin:50% 50%;transform:translate(-50%,-50%);-webkit-text-stroke:.42px #2e2e2e;filter:blur(.75px);"><span style="font-family:'Liberation Mono','Noto Sans CJK SC',monospace;letter-spacing:-0.01px">0.38</span></span>
<span class="t" style="left:1091.6px;top:1102.3px;color:#45484e;font-family:'Liberation Sans','Noto Sans CJK SC',sans-serif;font-size:11.8px;transform-origin:100% 50%;transform:translate(-100%,-50%) scale(1.080,1);-webkit-text-stroke:.3px #45484e;">0.0</span>
<span class="t" style="left:1102.6px;top:1010.8px;color:#45484e;font-family:'Liberation Sans','Noto Sans CJK SC',sans-serif;font-size:11.8px;transform-origin:100% 50%;transform:translate(-100%,-50%) scale(1.069,1);-webkit-text-stroke:.3px #45484e;">1917.0</span>
<span class="t" style="left:1102.6px;top:919.3px;color:#45484e;font-family:'Liberation Sans','Noto Sans CJK SC',sans-serif;font-size:11.8px;transform-origin:100% 50%;transform:translate(-100%,-50%) scale(1.069,1);-webkit-text-stroke:.3px #45484e;">3834.0</span>
<span class="t" style="left:1102.6px;top:827.8px;color:#45484e;font-family:'Liberation Sans','Noto Sans CJK SC',sans-serif;font-size:11.8px;transform-origin:100% 50%;transform:translate(-100%,-50%) scale(1.069,1);-webkit-text-stroke:.3px #45484e;">5751.0</span>
<span class="t" style="left:1102.6px;top:736.3px;color:#45484e;font-family:'Liberation Sans','Noto Sans CJK SC',sans-serif;font-size:11.8px;transform-origin:100% 50%;transform:translate(-100%,-50%) scale(1.069,1);-webkit-text-stroke:.3px #45484e;">7668.0</span>
<span class="t" style="left:1102.6px;top:644.8px;color:#45484e;font-family:'Liberation Sans','Noto Sans CJK SC',sans-serif;font-size:11.8px;transform-origin:100% 50%;transform:translate(-100%,-50%) scale(1.069,1);-webkit-text-stroke:.3px #45484e;">9585.0</span>
<span class="t" style="left:1120px;top:1122.2px;color:#4646a4;font-family:'Liberation Sans','Noto Sans CJK SC',sans-serif;font-size:11.8px;transform-origin:50% 50%;transform:translate(-50%,-50%) scale(1.080,1);-webkit-text-stroke:.3px #4646a4;">0.0</span>
<span class="t" style="left:1201.6px;top:1122.2px;color:#4646a4;font-family:'Liberation Sans','Noto Sans CJK SC',sans-serif;font-size:11.8px;transform-origin:50% 50%;transform:translate(-50%,-50%) scale(1.080,1);-webkit-text-stroke:.3px #4646a4;">5.1</span>
<span class="t" style="left:1283.2px;top:1122.2px;color:#4646a4;font-family:'Liberation Sans','Noto Sans CJK SC',sans-serif;font-size:11.8px;transform-origin:50% 50%;transform:translate(-50%,-50%) scale(1.080,1);-webkit-text-stroke:.3px #4646a4;">10.2</span>
<span class="t" style="left:1364.8px;top:1122.2px;color:#4646a4;font-family:'Liberation Sans','Noto Sans CJK SC',sans-serif;font-size:11.8px;transform-origin:50% 50%;transform:translate(-50%,-50%) scale(1.080,1);-webkit-text-stroke:.3px #4646a4;">15.3</span>
<span class="t" style="left:1446.4px;top:1122.2px;color:#4646a4;font-family:'Liberation Sans','Noto Sans CJK SC',sans-serif;font-size:11.8px;transform-origin:50% 50%;transform:translate(-50%,-50%) scale(1.080,1);-webkit-text-stroke:.3px #4646a4;">20.4</span>
<span class="t" style="left:1528px;top:1122.2px;color:#4646a4;font-family:'Liberation Sans','Noto Sans CJK SC',sans-serif;font-size:11.8px;transform-origin:50% 50%;transform:translate(-50%,-50%) scale(1.080,1);-webkit-text-stroke:.3px #4646a4;">25.5</span>
<span class="t" style="left:1609.6px;top:1122.2px;color:#4646a4;font-family:'Liberation Sans','Noto Sans CJK SC',sans-serif;font-size:11.8px;transform-origin:50% 50%;transform:translate(-50%,-50%) scale(1.080,1);-webkit-text-stroke:.3px #4646a4;">30.6</span>
<span class="t" style="left:1691.2px;top:1122.2px;color:#4646a4;font-family:'Liberation Sans','Noto Sans CJK SC',sans-serif;font-size:11.8px;transform-origin:50% 50%;transform:translate(-50%,-50%) scale(1.080,1);-webkit-text-stroke:.3px #4646a4;">35.7</span>
<span class="t" style="left:1772.8px;top:1122.2px;color:#4646a4;font-family:'Liberation Sans','Noto Sans CJK SC',sans-serif;font-size:11.8px;transform-origin:50% 50%;transform:translate(-50%,-50%) scale(1.080,1);-webkit-text-stroke:.3px #4646a4;">40.8</span>
<span class="t" style="left:1854.4px;top:1122.2px;color:#4646a4;font-family:'Liberation Sans','Noto Sans CJK SC',sans-serif;font-size:11.8px;transform-origin:50% 50%;transform:translate(-50%,-50%) scale(1.080,1);-webkit-text-stroke:.3px #4646a4;">45.9</span>
<span class="t" style="left:1936px;top:1122.2px;color:#4646a4;font-family:'Liberation Sans','Noto Sans CJK SC',sans-serif;font-size:11.8px;transform-origin:50% 50%;transform:translate(-50%,-50%) scale(1.080,1);-webkit-text-stroke:.3px #4646a4;">51.0</span>
<span class="t" style="left:1035.6px;top:874.95px;color:#1a1a1a;font-family:'Liberation Sans','Noto Sans CJK SC',sans-serif;font-size:11.6px;transform-origin:50% 50%;transform:translate(-50%,-50%) scale(1.060,1);writing-mode:vertical-rl;text-orientation:mixed;-webkit-text-stroke:.35px #1a1a1a;">载荷(N)</span>
</div>
</div>
<div id="wm">泉州市美邦仪器有限公司</div>
</div>
</body>
</html>
